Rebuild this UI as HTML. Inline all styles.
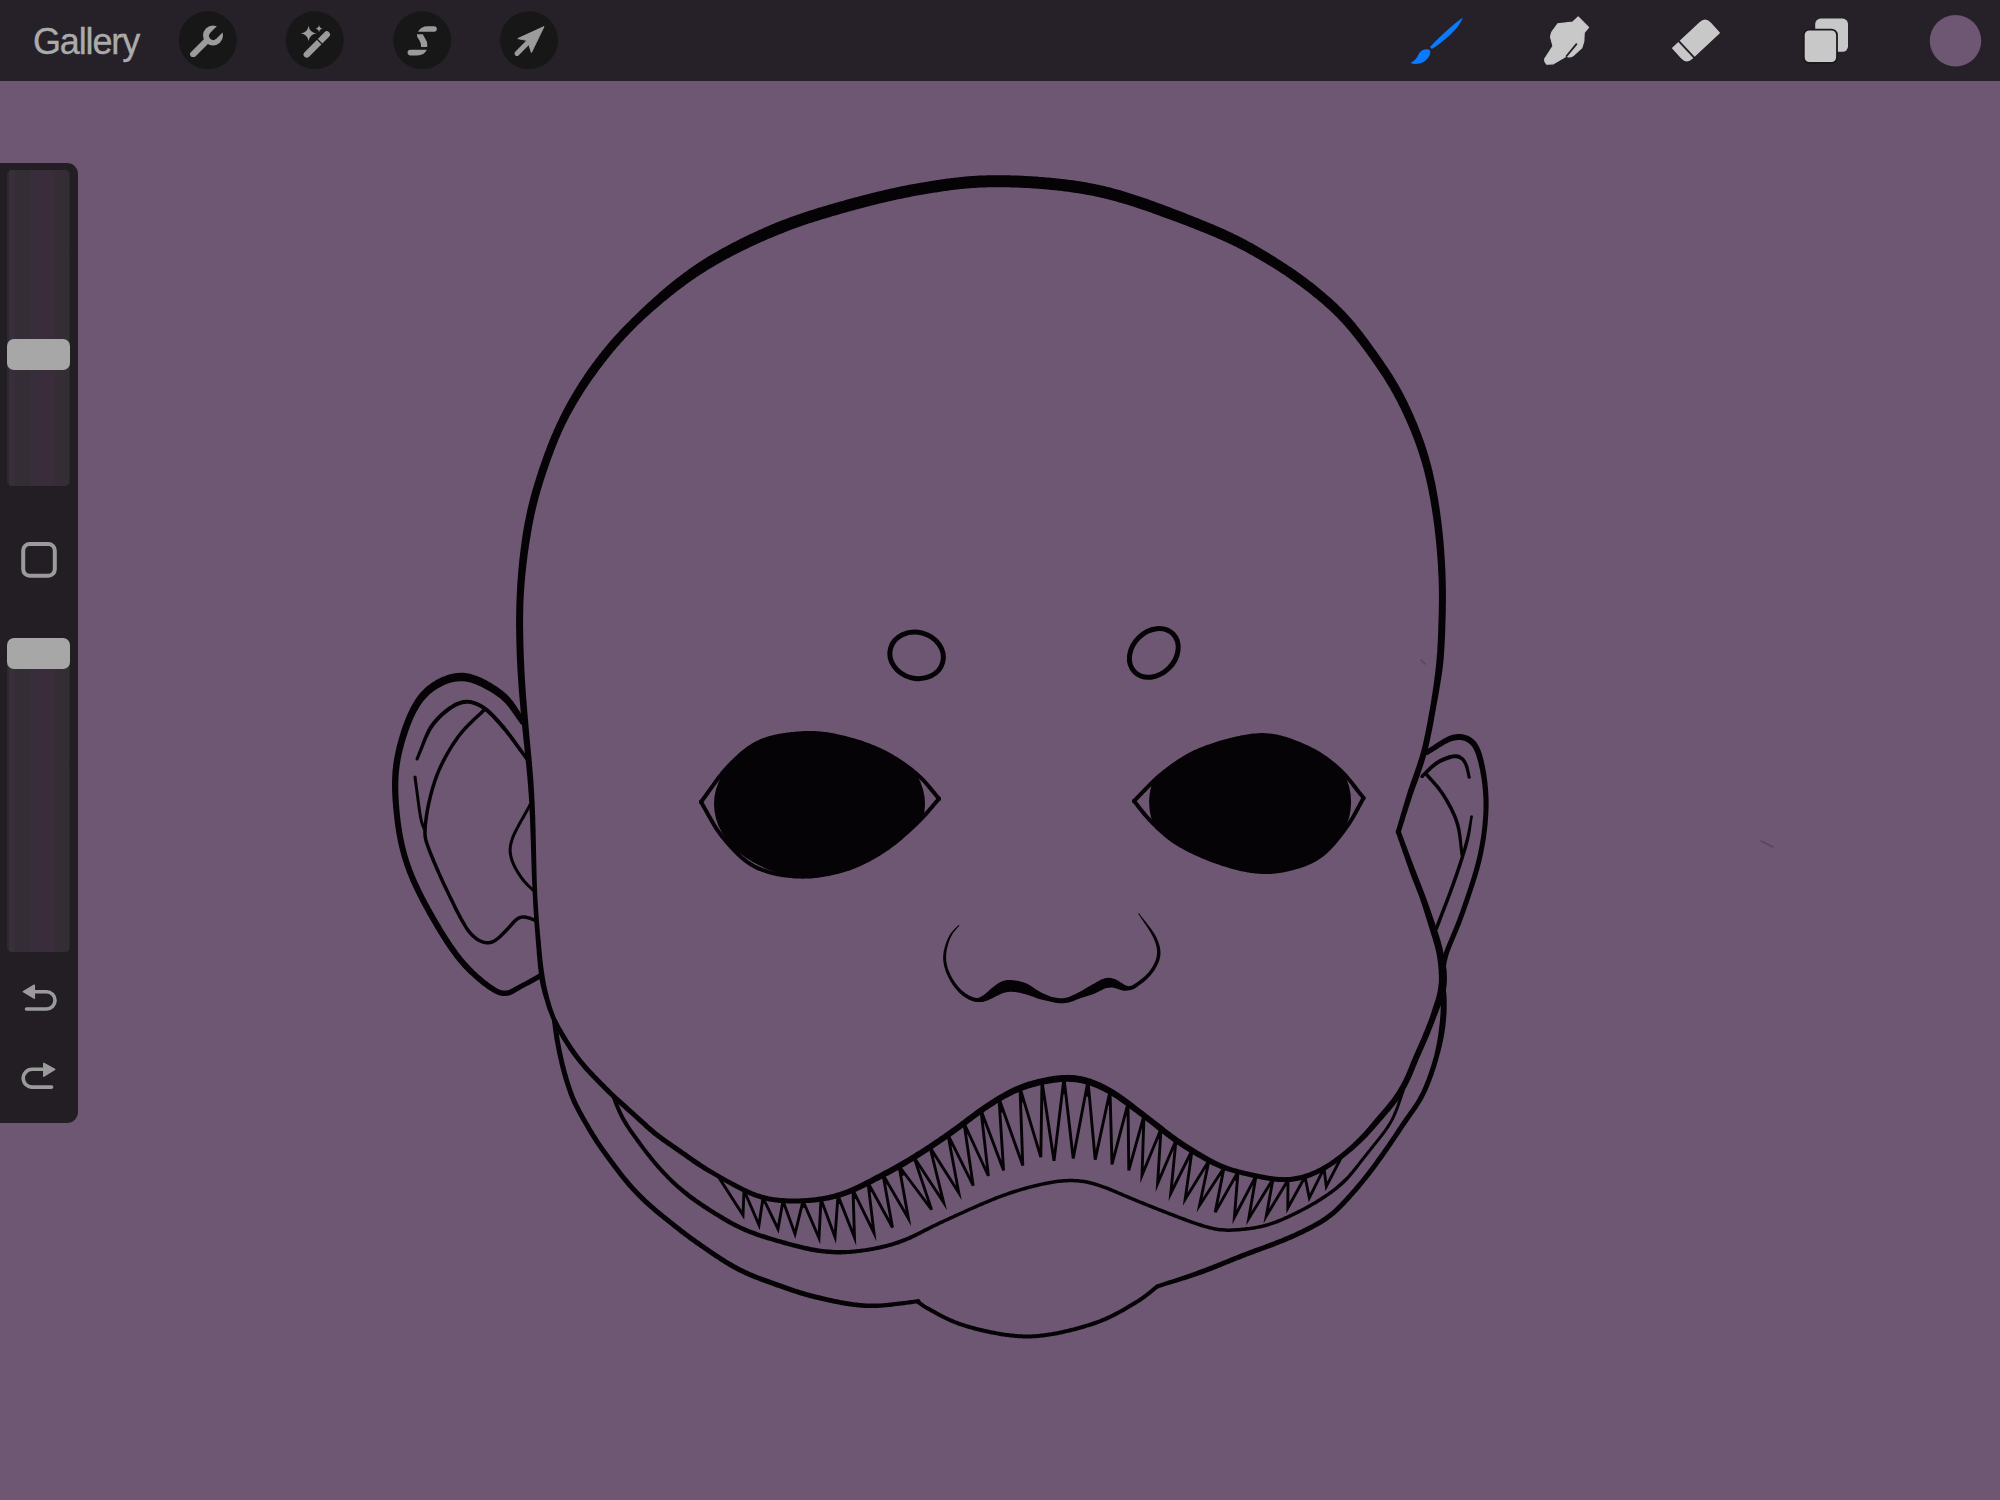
<!DOCTYPE html>
<html><head><meta charset="utf-8">
<style>
html,body{margin:0;padding:0;width:2000px;height:1500px;overflow:hidden;background:#6e5772;}
#top{position:absolute;left:0;top:0;width:2000px;height:81px;background:#262128;}
#gal{position:absolute;left:33px;top:21.7px;font-family:"Liberation Sans",sans-serif;font-size:36px;color:#ababab;line-height:40px;letter-spacing:-1.15px;-webkit-text-stroke:0.35px #ababab;}
#side{position:absolute;left:0;top:163px;width:78px;height:960px;background:#221e24;border-radius:0 11px 11px 0;}
.trk{position:absolute;left:7px;width:63px;background:linear-gradient(90deg,#2b2a2c 0px,#2b2a2c 1.5px,#392e3c 2.5px,#392e3c 7px,#352d35 8px,#352d35 22px,#372d3b 23px,#372d3b 36px,#3a2c3b 37px,#3a2c3b 47px,#352d35 48px,#342e34 61.5px,#262426 63px);border-radius:5px;}
.thm{position:absolute;left:7px;width:63px;height:31px;background:#a7a7a7;border-radius:7px;}
svg{position:absolute;left:0;top:0;overflow:visible;}
</style></head><body>
<svg width="2000" height="1500" viewBox="0 0 2000 1500" style="position:absolute;left:0;top:0"><g fill="#050306"><defs><clipPath id="cle"><ellipse cx="819.5" cy="804" rx="105.5" ry="75"/></clipPath><clipPath id="cre"><ellipse cx="1250.1" cy="802" rx="101" ry="78"/></clipPath></defs><path d="M556.8 1020.5 L556.3 1019.1 L555.7 1017.6 L555.2 1016.2 L554.6 1014.7 L554.1 1013.3 L553.6 1011.9 L553.1 1010.5 L552.6 1009.1 L552.1 1007.7 L551.6 1006.2 L551.2 1004.8 L550.8 1003.4 L550.4 1001.9 L550.0 1000.4 L549.5 998.9 L549.1 997.4 L548.7 996.0 L548.4 994.6 L548.0 993.1 L547.6 991.7 L547.3 990.3 L547.0 988.9 L546.7 987.5 L546.4 986.1 L546.1 984.7 L545.8 983.2 L545.6 981.8 L545.3 980.3 L545.1 978.9 L544.8 977.3 L544.6 975.8 L544.3 974.3 L544.1 972.8 L543.9 971.3 L543.7 969.9 L543.5 968.4 L543.3 967.0 L543.1 965.5 L543.0 964.1 L542.8 962.6 L542.6 961.2 L542.5 959.8 L542.3 958.4 L542.2 957.0 L542.0 955.6 L541.9 954.2 L541.8 952.7 L541.6 951.3 L541.5 949.9 L541.4 948.4 L541.2 947.0 L541.1 945.5 L541.0 944.0 L540.8 942.5 L540.7 941.1 L540.6 939.6 L540.4 938.2 L540.3 936.7 L540.2 935.3 L540.0 933.9 L539.9 932.4 L539.8 930.9 L539.7 929.4 L539.5 927.9 L539.4 926.3 L539.3 924.8 L539.1 923.1 L539.0 921.5 L538.9 919.9 L538.8 918.2 L538.6 916.6 L538.5 915.0 L538.4 913.3 L538.3 911.7 L538.2 910.1 L538.1 908.5 L538.0 906.8 L537.9 905.2 L537.8 903.6 L537.7 902.0 L537.6 900.4 L537.5 898.8 L537.4 897.2 L537.3 895.6 L537.2 894.0 L537.2 892.5 L537.1 890.9 L537.1 889.3 L537.0 887.8 L536.9 886.2 L536.9 884.7 L536.8 883.1 L536.8 881.6 L536.7 880.1 L536.7 878.6 L536.7 877.2 L536.6 875.7 L536.6 874.2 L536.5 872.7 L536.5 871.2 L536.5 869.7 L536.4 868.2 L536.4 866.6 L536.4 865.1 L536.3 863.5 L536.3 861.9 L536.3 860.4 L536.2 858.8 L536.2 857.2 L536.2 855.6 L536.1 854.0 L536.1 852.4 L536.0 850.8 L536.0 849.2 L536.0 847.5 L535.9 845.9 L535.9 844.3 L535.9 842.7 L535.8 841.0 L535.8 839.4 L535.8 837.8 L535.7 836.2 L535.7 834.6 L535.6 833.0 L535.6 831.4 L535.6 829.8 L535.5 828.2 L535.5 826.6 L535.4 825.0 L535.4 823.4 L535.3 821.9 L535.3 820.3 L535.3 818.8 L535.2 817.2 L535.2 815.7 L535.1 814.2 L535.0 812.6 L535.0 811.1 L534.9 809.5 L534.9 808.0 L534.8 806.4 L534.7 804.8 L534.7 803.3 L534.6 801.7 L534.5 800.2 L534.4 798.6 L534.3 797.0 L534.3 795.5 L534.2 793.9 L534.1 792.4 L534.0 790.8 L533.9 789.2 L533.8 787.7 L533.7 786.1 L533.6 784.5 L533.5 783.0 L533.4 781.4 L533.3 779.8 L533.2 778.2 L533.0 776.7 L532.9 775.1 L532.8 773.5 L532.7 771.9 L532.5 770.3 L532.4 768.8 L532.3 767.2 L532.1 765.7 L532.0 764.1 L531.9 762.6 L531.7 761.1 L531.6 759.6 L531.5 758.1 L531.3 756.6 L531.2 755.1 L531.1 753.7 L530.9 752.2 L530.8 750.7 L530.7 749.3 L530.5 747.9 L530.4 746.4 L530.3 745.0 L530.1 743.6 L530.0 742.2 L529.9 740.7 L529.7 739.3 L529.6 737.9 L529.5 736.4 L529.3 735.0 L529.2 733.6 L529.1 732.1 L529.0 730.7 L528.8 729.2 L528.7 727.8 L528.6 726.3 L528.4 724.9 L528.3 723.4 L528.2 721.9 L528.1 720.5 L527.9 719.0 L527.8 717.5 L527.7 716.1 L527.6 714.6 L527.4 713.1 L527.3 711.6 L527.2 710.2 L527.1 708.7 L527.0 707.2 L526.8 705.7 L526.7 704.2 L526.6 702.7 L526.5 701.2 L526.4 699.7 L526.2 698.3 L526.1 696.8 L526.0 695.3 L525.9 693.8 L525.8 692.4 L525.7 690.9 L525.6 689.4 L525.5 688.0 L525.4 686.5 L525.3 685.0 L525.2 683.6 L525.1 682.1 L525.0 680.6 L524.9 679.2 L524.8 677.7 L524.7 676.3 L524.7 674.8 L524.6 673.3 L524.5 671.9 L524.4 670.4 L524.4 668.9 L524.3 667.4 L524.2 666.0 L524.2 664.5 L524.1 663.0 L524.0 661.5 L524.0 660.0 L523.9 658.5 L523.8 657.0 L523.8 655.5 L523.7 654.0 L523.7 652.5 L523.6 651.0 L523.6 649.5 L523.5 648.0 L523.5 646.5 L523.4 645.0 L523.4 643.5 L523.4 642.0 L523.3 640.5 L523.3 639.0 L523.3 637.5 L523.2 636.0 L523.2 634.5 L523.2 632.9 L523.2 631.4 L523.2 629.9 L523.1 628.4 L523.1 626.9 L523.1 625.4 L523.1 623.8 L523.1 622.3 L523.1 620.8 L523.1 619.3 L523.1 617.8 L523.1 616.3 L523.2 614.8 L523.2 613.3 L523.2 611.7 L523.2 610.2 L523.3 608.7 L523.3 607.2 L523.3 605.7 L523.4 604.2 L523.4 602.7 L523.5 601.1 L523.6 599.6 L523.6 598.1 L523.7 596.6 L523.8 595.1 L523.9 593.5 L524.0 592.0 L524.1 590.5 L524.2 589.0 L524.3 587.5 L524.4 585.9 L524.5 584.4 L524.6 582.9 L524.8 581.4 L524.9 579.8 L525.0 578.3 L525.2 576.8 L525.3 575.3 L525.5 573.7 L525.6 572.2 L525.8 570.7 L525.9 569.2 L526.1 567.7 L526.3 566.2 L526.4 564.6 L526.6 563.1 L526.8 561.7 L527.0 560.2 L527.2 558.7 L527.4 557.2 L527.5 555.7 L527.7 554.3 L527.9 552.8 L528.1 551.3 L528.4 549.8 L528.6 548.4 L528.8 546.9 L529.0 545.4 L529.2 544.0 L529.5 542.5 L529.7 541.0 L529.9 539.6 L530.2 538.1 L530.4 536.7 L530.7 535.2 L530.9 533.8 L531.1 532.3 L531.4 530.9 L531.6 529.5 L531.9 528.0 L532.1 526.6 L532.4 525.2 L532.7 523.8 L532.9 522.3 L533.2 520.9 L533.5 519.5 L533.8 518.1 L534.1 516.7 L534.4 515.2 L534.7 513.8 L535.0 512.4 L535.3 510.9 L535.7 509.5 L536.0 508.1 L536.4 506.6 L536.7 505.2 L537.1 503.8 L537.4 502.4 L537.8 501.0 L538.2 499.5 L538.5 498.1 L538.9 496.7 L539.3 495.3 L539.7 493.9 L540.1 492.5 L540.5 491.1 L540.9 489.7 L541.4 488.2 L541.8 486.8 L542.2 485.4 L542.6 484.0 L543.1 482.6 L543.5 481.1 L544.0 479.7 L544.4 478.3 L544.9 476.8 L545.4 475.4 L545.8 474.0 L546.3 472.5 L546.8 471.1 L547.3 469.7 L547.8 468.3 L548.2 466.8 L548.7 465.4 L549.2 464.0 L549.7 462.6 L550.2 461.2 L550.8 459.7 L551.3 458.3 L551.8 456.8 L552.3 455.4 L552.9 454.0 L553.4 452.5 L553.9 451.1 L554.5 449.6 L555.1 448.2 L555.6 446.8 L556.2 445.3 L556.8 443.9 L557.3 442.5 L557.9 441.1 L558.5 439.6 L559.1 438.2 L559.7 436.8 L560.3 435.4 L560.9 434.0 L561.5 432.6 L562.2 431.2 L562.8 429.8 L563.4 428.4 L564.1 427.0 L564.7 425.7 L565.4 424.3 L566.1 422.9 L566.8 421.6 L567.4 420.2 L568.1 418.9 L568.8 417.5 L569.5 416.2 L570.2 414.8 L571.0 413.5 L571.7 412.2 L572.4 410.9 L573.2 409.5 L573.9 408.2 L574.7 406.9 L575.4 405.6 L576.2 404.3 L576.9 403.0 L577.7 401.7 L578.5 400.4 L579.3 399.1 L580.1 397.8 L580.9 396.5 L581.7 395.2 L582.5 393.9 L583.3 392.6 L584.1 391.4 L584.9 390.1 L585.8 388.8 L586.6 387.6 L587.4 386.3 L588.3 385.1 L589.1 383.8 L590.0 382.6 L590.8 381.3 L591.7 380.1 L592.6 378.8 L593.4 377.6 L594.3 376.4 L595.2 375.2 L596.1 374.0 L596.9 372.8 L597.8 371.5 L598.7 370.3 L599.6 369.1 L600.5 367.9 L601.4 366.8 L602.3 365.6 L603.2 364.4 L604.1 363.2 L605.0 362.0 L605.9 360.9 L606.8 359.7 L607.7 358.5 L608.6 357.4 L609.6 356.2 L610.5 355.1 L611.4 353.9 L612.4 352.8 L613.3 351.6 L614.3 350.5 L615.2 349.4 L616.2 348.3 L617.1 347.1 L618.1 346.0 L619.1 344.9 L620.1 343.7 L621.1 342.6 L622.1 341.5 L623.1 340.4 L624.2 339.3 L625.2 338.1 L626.3 337.0 L627.3 335.9 L628.4 334.8 L629.4 333.7 L630.5 332.6 L631.5 331.5 L632.6 330.4 L633.7 329.3 L634.7 328.3 L635.8 327.2 L636.9 326.1 L638.0 325.1 L639.0 324.0 L640.1 322.9 L641.2 321.9 L642.3 320.9 L643.4 319.8 L644.5 318.8 L645.7 317.8 L646.8 316.8 L647.9 315.8 L649.0 314.8 L650.1 313.8 L651.2 312.8 L652.3 311.8 L653.5 310.8 L654.6 309.8 L655.7 308.9 L656.8 307.9 L657.9 306.9 L659.1 306.0 L660.2 305.0 L661.3 304.0 L662.5 303.1 L663.6 302.1 L664.8 301.1 L666.0 300.2 L667.2 299.2 L668.3 298.2 L669.5 297.3 L670.7 296.3 L671.9 295.3 L673.1 294.4 L674.3 293.4 L675.5 292.5 L676.7 291.5 L678.0 290.6 L679.2 289.7 L680.4 288.7 L681.6 287.8 L682.9 286.9 L684.1 285.9 L685.4 285.0 L686.6 284.1 L687.9 283.2 L689.1 282.3 L690.4 281.4 L691.6 280.6 L692.9 279.7 L694.1 278.8 L695.4 278.0 L696.6 277.1 L697.9 276.3 L699.1 275.4 L700.4 274.6 L701.7 273.8 L702.9 273.0 L704.2 272.2 L705.5 271.4 L706.7 270.6 L708.0 269.8 L709.3 269.0 L710.5 268.2 L711.8 267.4 L713.1 266.7 L714.4 265.9 L715.7 265.1 L717.0 264.4 L718.2 263.7 L719.5 262.9 L720.8 262.2 L722.1 261.5 L723.4 260.7 L724.7 260.0 L726.1 259.3 L727.4 258.6 L728.7 257.9 L730.0 257.2 L731.3 256.5 L732.7 255.8 L734.0 255.1 L735.4 254.4 L736.7 253.7 L738.0 253.0 L739.4 252.4 L740.7 251.7 L742.1 251.0 L743.4 250.4 L744.8 249.7 L746.2 249.1 L747.5 248.4 L748.9 247.8 L750.2 247.1 L751.6 246.5 L752.9 245.8 L754.3 245.2 L755.7 244.6 L757.0 244.0 L758.4 243.3 L759.7 242.7 L761.1 242.1 L762.5 241.5 L763.8 240.9 L765.2 240.3 L766.6 239.7 L767.9 239.1 L769.3 238.5 L770.7 238.0 L772.1 237.4 L773.4 236.8 L774.8 236.2 L776.2 235.7 L777.6 235.1 L779.0 234.5 L780.4 234.0 L781.8 233.4 L783.2 232.9 L784.5 232.3 L785.9 231.8 L787.3 231.2 L788.7 230.7 L790.2 230.1 L791.6 229.6 L793.0 229.1 L794.4 228.6 L795.8 228.1 L797.2 227.5 L798.6 227.0 L800.1 226.5 L801.5 226.0 L802.9 225.5 L804.3 225.1 L805.8 224.6 L807.2 224.1 L808.6 223.6 L810.0 223.1 L811.5 222.7 L812.9 222.2 L814.3 221.8 L815.8 221.3 L817.2 220.9 L818.6 220.4 L820.0 220.0 L821.5 219.5 L822.9 219.1 L824.3 218.7 L825.8 218.2 L827.2 217.8 L828.6 217.4 L830.1 216.9 L831.5 216.5 L832.9 216.1 L834.4 215.7 L835.8 215.3 L837.2 214.9 L838.7 214.4 L840.1 214.0 L841.6 213.6 L843.0 213.2 L844.5 212.8 L845.9 212.4 L847.3 212.0 L848.8 211.6 L850.2 211.2 L851.7 210.8 L853.1 210.4 L854.6 210.0 L856.0 209.6 L857.5 209.2 L858.9 208.8 L860.4 208.5 L861.9 208.1 L863.3 207.7 L864.8 207.3 L866.2 206.9 L867.7 206.5 L869.1 206.2 L870.6 205.8 L872.1 205.4 L873.5 205.1 L875.0 204.7 L876.4 204.3 L877.9 204.0 L879.4 203.6 L880.8 203.3 L882.3 202.9 L883.7 202.6 L885.2 202.2 L886.7 201.9 L888.1 201.5 L889.6 201.2 L891.0 200.9 L892.5 200.5 L893.9 200.2 L895.4 199.9 L896.9 199.6 L898.3 199.3 L899.8 199.0 L901.2 198.7 L902.7 198.4 L904.1 198.1 L905.6 197.8 L907.0 197.5 L908.5 197.2 L910.0 196.9 L911.4 196.6 L912.9 196.3 L914.3 196.1 L915.8 195.8 L917.3 195.5 L918.7 195.3 L920.2 195.0 L921.6 194.8 L923.1 194.5 L924.5 194.3 L926.0 194.0 L927.4 193.8 L928.9 193.5 L930.3 193.3 L931.7 193.1 L933.2 192.8 L934.6 192.6 L936.1 192.4 L937.5 192.2 L938.9 191.9 L940.4 191.7 L941.8 191.5 L943.2 191.3 L944.6 191.1 L946.1 190.9 L947.5 190.7 L948.9 190.5 L950.3 190.3 L951.8 190.1 L953.2 190.0 L954.6 189.8 L956.0 189.6 L957.4 189.4 L958.9 189.3 L960.3 189.1 L961.7 189.0 L963.2 188.8 L964.6 188.7 L966.1 188.5 L967.5 188.4 L969.0 188.3 L970.4 188.2 L971.9 188.1 L973.4 188.0 L974.9 187.9 L976.4 187.8 L977.9 187.7 L979.4 187.6 L980.9 187.5 L982.4 187.5 L984.0 187.4 L985.5 187.4 L987.0 187.3 L988.5 187.3 L990.0 187.3 L991.5 187.2 L993.0 187.2 L994.5 187.2 L996.0 187.2 L997.5 187.2 L998.9 187.2 L1000.4 187.2 L1001.9 187.2 L1003.4 187.2 L1004.9 187.2 L1006.4 187.3 L1007.9 187.3 L1009.3 187.3 L1010.8 187.4 L1012.3 187.4 L1013.8 187.5 L1015.2 187.5 L1016.7 187.6 L1018.1 187.6 L1019.6 187.7 L1021.0 187.8 L1022.5 187.8 L1023.9 187.9 L1025.4 188.0 L1026.9 188.0 L1028.3 188.1 L1029.8 188.2 L1031.3 188.3 L1032.8 188.4 L1034.3 188.5 L1035.8 188.6 L1037.3 188.7 L1038.8 188.8 L1040.4 188.9 L1041.9 189.1 L1043.4 189.2 L1044.9 189.3 L1046.5 189.4 L1048.0 189.6 L1049.5 189.7 L1051.1 189.9 L1052.6 190.0 L1054.2 190.2 L1055.7 190.3 L1057.3 190.5 L1058.8 190.7 L1060.3 190.8 L1061.9 191.0 L1063.4 191.2 L1065.0 191.4 L1066.5 191.6 L1068.1 191.8 L1069.6 192.0 L1071.2 192.2 L1072.7 192.4 L1074.3 192.7 L1075.8 192.9 L1077.3 193.1 L1078.9 193.4 L1080.4 193.6 L1081.9 193.9 L1083.5 194.1 L1085.0 194.4 L1086.5 194.7 L1088.0 195.0 L1089.5 195.2 L1091.0 195.5 L1092.5 195.8 L1094.0 196.1 L1095.5 196.5 L1097.0 196.8 L1098.5 197.1 L1099.9 197.4 L1101.4 197.8 L1102.9 198.1 L1104.4 198.5 L1105.9 198.8 L1107.4 199.2 L1108.9 199.6 L1110.3 199.9 L1111.8 200.3 L1113.3 200.7 L1114.8 201.1 L1116.3 201.5 L1117.8 201.9 L1119.3 202.4 L1120.8 202.8 L1122.3 203.2 L1123.8 203.7 L1125.3 204.1 L1126.8 204.6 L1128.3 205.1 L1129.8 205.6 L1131.3 206.0 L1132.9 206.5 L1134.4 207.0 L1135.9 207.5 L1137.4 208.0 L1138.9 208.5 L1140.5 209.0 L1142.0 209.5 L1143.5 210.0 L1145.0 210.6 L1146.5 211.1 L1148.0 211.6 L1149.5 212.1 L1151.0 212.6 L1152.5 213.2 L1154.0 213.7 L1155.5 214.2 L1156.9 214.8 L1158.4 215.3 L1159.9 215.8 L1161.3 216.4 L1162.8 216.9 L1164.2 217.4 L1165.7 217.9 L1167.1 218.5 L1168.5 219.0 L1169.9 219.5 L1171.3 220.0 L1172.7 220.5 L1174.0 221.1 L1175.4 221.6 L1176.7 222.1 L1178.1 222.6 L1179.4 223.1 L1180.7 223.6 L1182.0 224.1 L1183.4 224.6 L1184.7 225.1 L1186.1 225.6 L1187.5 226.1 L1188.9 226.7 L1190.3 227.2 L1191.7 227.8 L1193.1 228.3 L1194.6 228.9 L1196.0 229.4 L1197.4 230.0 L1198.9 230.6 L1200.3 231.2 L1201.8 231.7 L1203.2 232.3 L1204.7 232.9 L1206.1 233.5 L1207.6 234.1 L1209.0 234.7 L1210.5 235.3 L1212.0 235.9 L1213.4 236.5 L1214.9 237.1 L1216.3 237.8 L1217.8 238.4 L1219.2 239.0 L1220.7 239.7 L1222.1 240.3 L1223.5 241.0 L1224.9 241.6 L1226.3 242.2 L1227.6 242.8 L1228.9 243.4 L1230.2 244.0 L1231.4 244.6 L1232.7 245.2 L1233.9 245.8 L1235.2 246.5 L1236.5 247.1 L1237.7 247.7 L1239.0 248.4 L1240.2 249.0 L1241.5 249.7 L1242.8 250.3 L1244.0 251.0 L1245.3 251.6 L1246.5 252.3 L1247.8 253.0 L1249.0 253.7 L1250.3 254.4 L1251.5 255.1 L1252.8 255.8 L1254.0 256.5 L1255.3 257.2 L1256.5 257.9 L1257.8 258.6 L1259.1 259.4 L1260.4 260.1 L1261.6 260.9 L1262.9 261.6 L1264.2 262.4 L1265.5 263.1 L1266.8 263.9 L1268.1 264.7 L1269.4 265.4 L1270.6 266.2 L1271.9 266.9 L1273.1 267.7 L1274.3 268.4 L1275.5 269.2 L1276.7 270.0 L1277.9 270.8 L1279.1 271.6 L1280.4 272.4 L1281.6 273.2 L1282.8 274.0 L1284.0 274.8 L1285.2 275.6 L1286.4 276.4 L1287.6 277.2 L1288.8 278.0 L1290.0 278.9 L1291.2 279.7 L1292.4 280.5 L1293.6 281.4 L1294.8 282.2 L1295.9 283.0 L1297.1 283.9 L1298.3 284.7 L1299.5 285.6 L1300.7 286.5 L1301.9 287.4 L1303.1 288.3 L1304.3 289.2 L1305.6 290.2 L1306.8 291.1 L1308.0 292.1 L1309.2 293.0 L1310.5 294.0 L1311.7 294.9 L1312.9 295.9 L1314.0 296.9 L1315.2 297.8 L1316.4 298.8 L1317.6 299.8 L1318.8 300.8 L1320.0 301.8 L1321.2 302.8 L1322.4 303.8 L1323.6 304.8 L1324.7 305.9 L1325.9 306.9 L1327.1 307.9 L1328.2 309.0 L1329.4 310.0 L1330.5 311.1 L1331.7 312.2 L1332.8 313.2 L1333.9 314.3 L1335.0 315.4 L1336.1 316.5 L1337.2 317.6 L1338.2 318.7 L1339.3 319.7 L1340.3 320.9 L1341.4 322.0 L1342.4 323.1 L1343.4 324.2 L1344.4 325.3 L1345.4 326.4 L1346.4 327.5 L1347.3 328.7 L1348.3 329.8 L1349.3 331.0 L1350.2 332.1 L1351.2 333.3 L1352.1 334.4 L1353.0 335.6 L1354.0 336.7 L1354.9 337.9 L1355.8 339.1 L1356.7 340.2 L1357.6 341.4 L1358.6 342.6 L1359.5 343.8 L1360.4 345.0 L1361.3 346.2 L1362.2 347.4 L1363.1 348.6 L1364.0 349.8 L1364.9 351.0 L1365.8 352.2 L1366.7 353.5 L1367.6 354.7 L1368.5 355.9 L1369.3 357.1 L1370.2 358.3 L1371.1 359.6 L1371.9 360.8 L1372.8 362.0 L1373.7 363.3 L1374.5 364.5 L1375.4 365.7 L1376.2 367.0 L1377.1 368.2 L1377.9 369.5 L1378.8 370.7 L1379.6 372.0 L1380.5 373.2 L1381.3 374.5 L1382.1 375.8 L1383.0 377.1 L1383.8 378.3 L1384.6 379.6 L1385.4 380.9 L1386.2 382.2 L1386.9 383.4 L1387.7 384.7 L1388.5 386.0 L1389.3 387.3 L1390.0 388.6 L1390.8 389.9 L1391.5 391.2 L1392.2 392.5 L1393.0 393.8 L1393.7 395.1 L1394.4 396.5 L1395.1 397.8 L1395.9 399.1 L1396.6 400.5 L1397.3 401.8 L1398.0 403.2 L1398.6 404.5 L1399.3 405.9 L1400.0 407.2 L1400.7 408.6 L1401.3 410.0 L1402.0 411.3 L1402.6 412.7 L1403.3 414.1 L1403.9 415.4 L1404.5 416.8 L1405.2 418.2 L1405.8 419.6 L1406.4 420.9 L1407.0 422.3 L1407.6 423.7 L1408.2 425.1 L1408.8 426.5 L1409.4 427.9 L1410.0 429.3 L1410.5 430.6 L1411.1 432.0 L1411.7 433.4 L1412.2 434.8 L1412.8 436.2 L1413.3 437.6 L1413.8 439.0 L1414.4 440.4 L1414.9 441.8 L1415.4 443.2 L1415.9 444.6 L1416.4 445.9 L1416.9 447.3 L1417.4 448.7 L1417.8 450.1 L1418.3 451.5 L1418.8 452.9 L1419.2 454.2 L1419.6 455.6 L1420.1 457.0 L1420.5 458.4 L1420.9 459.8 L1421.4 461.3 L1421.8 462.7 L1422.2 464.1 L1422.6 465.5 L1423.0 466.9 L1423.4 468.3 L1423.7 469.8 L1424.1 471.2 L1424.5 472.6 L1424.8 474.0 L1425.2 475.4 L1425.5 476.8 L1425.9 478.3 L1426.2 479.7 L1426.5 481.1 L1426.8 482.6 L1427.1 484.0 L1427.5 485.4 L1427.8 486.9 L1428.1 488.4 L1428.4 489.8 L1428.7 491.3 L1428.9 492.7 L1429.2 494.2 L1429.5 495.7 L1429.8 497.2 L1430.1 498.6 L1430.3 500.1 L1430.6 501.6 L1430.8 503.1 L1431.1 504.6 L1431.3 506.0 L1431.6 507.5 L1431.8 509.0 L1432.0 510.5 L1432.3 512.0 L1432.5 513.5 L1432.7 515.0 L1433.0 516.6 L1433.2 518.1 L1433.4 519.6 L1433.6 521.1 L1433.8 522.6 L1434.0 524.1 L1434.2 525.6 L1434.4 527.1 L1434.6 528.7 L1434.7 530.2 L1434.9 531.7 L1435.1 533.2 L1435.3 534.7 L1435.4 536.2 L1435.6 537.8 L1435.8 539.3 L1435.9 540.8 L1436.1 542.3 L1436.2 543.8 L1436.4 545.3 L1436.5 546.8 L1436.6 548.3 L1436.8 549.9 L1436.9 551.4 L1437.0 552.9 L1437.1 554.4 L1437.2 555.9 L1437.4 557.4 L1437.5 558.9 L1437.6 560.4 L1437.7 561.9 L1437.8 563.4 L1437.9 564.9 L1438.0 566.4 L1438.0 567.9 L1438.1 569.4 L1438.2 570.9 L1438.3 572.4 L1438.4 573.9 L1438.4 575.4 L1438.5 576.9 L1438.6 578.4 L1438.6 580.0 L1438.7 581.5 L1438.7 583.0 L1438.8 584.5 L1438.8 586.1 L1438.8 587.6 L1438.9 589.1 L1438.9 590.7 L1438.9 592.2 L1438.9 593.7 L1438.9 595.3 L1438.9 596.8 L1438.9 598.3 L1438.9 599.9 L1438.9 601.4 L1438.9 603.0 L1438.9 604.5 L1438.8 606.0 L1438.8 607.5 L1438.8 609.1 L1438.8 610.6 L1438.7 612.1 L1438.7 613.6 L1438.7 615.1 L1438.6 616.6 L1438.6 618.1 L1438.5 619.6 L1438.5 621.1 L1438.4 622.6 L1438.4 624.1 L1438.3 625.6 L1438.3 627.1 L1438.3 628.6 L1438.2 630.1 L1438.2 631.5 L1438.1 633.0 L1438.1 634.4 L1438.0 635.9 L1437.9 637.3 L1437.9 638.7 L1437.8 640.2 L1437.8 641.7 L1437.7 643.1 L1437.6 644.6 L1437.5 646.0 L1437.4 647.5 L1437.3 648.9 L1437.3 650.4 L1437.2 651.8 L1437.1 653.3 L1436.9 654.7 L1436.8 656.2 L1436.7 657.7 L1436.6 659.1 L1436.5 660.6 L1436.3 662.0 L1436.2 663.4 L1436.1 664.9 L1435.9 666.3 L1435.8 667.7 L1435.6 669.2 L1435.4 670.7 L1435.3 672.1 L1435.1 673.6 L1434.9 675.1 L1434.7 676.6 L1434.5 678.1 L1434.3 679.7 L1434.1 681.2 L1433.9 682.7 L1433.7 684.2 L1433.5 685.7 L1433.2 687.2 L1433.0 688.7 L1432.8 690.3 L1432.6 691.8 L1432.3 693.4 L1432.1 694.9 L1431.8 696.5 L1431.6 698.0 L1431.4 699.6 L1431.1 701.2 L1430.9 702.7 L1430.6 704.3 L1430.3 705.9 L1430.1 707.5 L1429.8 709.1 L1429.5 710.7 L1429.2 712.3 L1428.9 713.8 L1428.6 715.4 L1428.3 717.0 L1428.1 718.6 L1427.8 720.2 L1427.5 721.8 L1427.2 723.4 L1426.9 724.9 L1426.6 726.5 L1426.3 728.1 L1426.0 729.6 L1425.7 731.1 L1425.4 732.7 L1425.1 734.2 L1424.7 735.7 L1424.4 737.2 L1424.1 738.8 L1423.8 740.3 L1423.4 741.8 L1423.1 743.4 L1422.7 744.9 L1422.4 746.4 L1422.0 747.8 L1421.6 749.3 L1421.3 750.8 L1420.9 752.2 L1420.5 753.6 L1420.1 755.0 L1419.7 756.4 L1419.2 757.8 L1418.8 759.2 L1418.3 760.6 L1417.9 762.0 L1417.4 763.5 L1417.0 764.9 L1416.5 766.3 L1416.0 767.7 L1415.5 769.0 L1415.1 770.4 L1414.6 771.8 L1414.1 773.2 L1413.6 774.6 L1413.1 776.0 L1412.6 777.4 L1412.1 778.8 L1411.6 780.2 L1411.1 781.6 L1410.6 783.0 L1410.1 784.4 L1409.7 785.8 L1409.2 787.2 L1408.7 788.6 L1408.2 790.1 L1407.7 791.5 L1407.3 793.0 L1406.8 794.5 L1406.3 796.0 L1405.9 797.5 L1405.4 799.0 L1405.0 800.5 L1404.5 802.0 L1404.1 803.5 L1403.6 804.9 L1403.2 806.4 L1402.7 807.9 L1402.3 809.4 L1401.8 810.9 L1401.4 812.4 L1400.9 814.0 L1400.5 815.5 L1400.0 817.1 L1399.6 818.7 L1399.1 820.2 L1398.6 821.8 L1398.2 823.3 L1397.7 824.9 L1397.3 826.4 L1396.8 828.0 L1396.4 829.5 L1395.9 831.0 L1400.7 832.4 L1401.2 831.0 L1401.6 829.5 L1402.1 827.9 L1402.6 826.4 L1403.1 824.9 L1403.6 823.3 L1404.1 821.7 L1404.6 820.2 L1405.1 818.6 L1405.5 817.1 L1406.0 815.5 L1406.5 814.0 L1407.0 812.5 L1407.5 811.0 L1407.9 809.5 L1408.4 808.0 L1408.9 806.6 L1409.4 805.1 L1409.8 803.6 L1410.3 802.2 L1410.8 800.7 L1411.3 799.2 L1411.8 797.7 L1412.2 796.3 L1412.7 794.8 L1413.2 793.4 L1413.7 792.0 L1414.2 790.5 L1414.7 789.1 L1415.2 787.7 L1415.7 786.4 L1416.2 785.0 L1416.8 783.6 L1417.3 782.2 L1417.8 780.8 L1418.3 779.4 L1418.8 778.0 L1419.3 776.6 L1419.8 775.2 L1420.2 773.8 L1420.7 772.4 L1421.2 771.0 L1421.7 769.6 L1422.2 768.2 L1422.7 766.8 L1423.1 765.3 L1423.6 763.9 L1424.1 762.4 L1424.5 761.0 L1425.0 759.6 L1425.4 758.1 L1425.8 756.7 L1426.2 755.2 L1426.7 753.8 L1427.1 752.3 L1427.4 750.8 L1427.8 749.3 L1428.2 747.8 L1428.6 746.3 L1428.9 744.7 L1429.3 743.2 L1429.6 741.6 L1430.0 740.0 L1430.3 738.5 L1430.6 736.9 L1430.9 735.4 L1431.2 733.9 L1431.5 732.3 L1431.9 730.8 L1432.2 729.2 L1432.5 727.6 L1432.8 726.1 L1433.1 724.5 L1433.4 722.9 L1433.7 721.3 L1434.0 719.7 L1434.2 718.1 L1434.5 716.5 L1434.8 714.9 L1435.1 713.3 L1435.4 711.7 L1435.7 710.1 L1436.0 708.5 L1436.2 706.9 L1436.5 705.4 L1436.8 703.8 L1437.1 702.2 L1437.4 700.6 L1437.7 699.0 L1438.0 697.5 L1438.2 695.9 L1438.5 694.4 L1438.8 692.8 L1439.1 691.3 L1439.3 689.7 L1439.6 688.2 L1439.8 686.7 L1440.1 685.2 L1440.3 683.7 L1440.6 682.1 L1440.8 680.6 L1441.1 679.1 L1441.3 677.6 L1441.5 676.0 L1441.8 674.5 L1442.0 673.0 L1442.2 671.5 L1442.4 670.0 L1442.6 668.5 L1442.8 667.1 L1442.9 665.6 L1443.1 664.1 L1443.3 662.7 L1443.4 661.2 L1443.6 659.7 L1443.7 658.2 L1443.8 656.7 L1443.9 655.2 L1444.0 653.8 L1444.1 652.3 L1444.2 650.8 L1444.3 649.4 L1444.4 647.9 L1444.5 646.4 L1444.6 645.0 L1444.7 643.5 L1444.7 642.0 L1444.8 640.5 L1444.9 639.0 L1444.9 637.6 L1445.0 636.1 L1445.1 634.7 L1445.1 633.2 L1445.2 631.8 L1445.2 630.3 L1445.3 628.8 L1445.3 627.3 L1445.3 625.9 L1445.4 624.4 L1445.4 622.8 L1445.5 621.3 L1445.5 619.8 L1445.6 618.3 L1445.6 616.8 L1445.7 615.3 L1445.7 613.8 L1445.7 612.3 L1445.8 610.7 L1445.8 609.2 L1445.8 607.7 L1445.8 606.1 L1445.9 604.6 L1445.9 603.0 L1445.9 601.5 L1445.9 599.9 L1445.9 598.4 L1445.9 596.8 L1445.9 595.3 L1445.9 593.7 L1445.9 592.1 L1445.9 590.6 L1445.9 589.0 L1445.8 587.5 L1445.8 585.9 L1445.8 584.4 L1445.8 582.8 L1445.7 581.3 L1445.7 579.7 L1445.6 578.2 L1445.6 576.7 L1445.5 575.1 L1445.5 573.6 L1445.4 572.1 L1445.4 570.5 L1445.3 569.0 L1445.2 567.5 L1445.1 566.0 L1445.1 564.5 L1445.0 563.0 L1444.9 561.4 L1444.8 559.9 L1444.7 558.4 L1444.6 556.9 L1444.5 555.4 L1444.4 553.8 L1444.3 552.3 L1444.2 550.8 L1444.1 549.3 L1444.0 547.7 L1443.8 546.2 L1443.7 544.7 L1443.6 543.1 L1443.5 541.6 L1443.3 540.1 L1443.2 538.5 L1443.0 537.0 L1442.9 535.5 L1442.7 533.9 L1442.6 532.4 L1442.4 530.9 L1442.2 529.3 L1442.1 527.8 L1441.9 526.2 L1441.7 524.7 L1441.5 523.2 L1441.3 521.6 L1441.1 520.1 L1440.9 518.6 L1440.7 517.0 L1440.5 515.5 L1440.3 514.0 L1440.1 512.4 L1439.9 510.9 L1439.7 509.4 L1439.5 507.9 L1439.2 506.3 L1439.0 504.8 L1438.8 503.3 L1438.5 501.8 L1438.3 500.3 L1438.0 498.8 L1437.8 497.3 L1437.5 495.8 L1437.2 494.3 L1437.0 492.8 L1436.7 491.3 L1436.4 489.8 L1436.1 488.3 L1435.9 486.8 L1435.6 485.3 L1435.3 483.8 L1435.0 482.3 L1434.7 480.9 L1434.3 479.4 L1434.0 477.9 L1433.7 476.5 L1433.4 475.0 L1433.0 473.5 L1432.7 472.1 L1432.4 470.6 L1432.0 469.2 L1431.6 467.7 L1431.3 466.3 L1430.9 464.8 L1430.5 463.4 L1430.1 461.9 L1429.7 460.4 L1429.3 459.0 L1428.9 457.5 L1428.5 456.1 L1428.0 454.6 L1427.6 453.2 L1427.2 451.7 L1426.7 450.3 L1426.3 448.9 L1425.8 447.4 L1425.3 446.0 L1424.9 444.6 L1424.4 443.2 L1423.9 441.7 L1423.4 440.3 L1422.9 438.9 L1422.3 437.4 L1421.8 436.0 L1421.3 434.6 L1420.8 433.2 L1420.2 431.7 L1419.7 430.3 L1419.1 428.9 L1418.5 427.4 L1418.0 426.0 L1417.4 424.6 L1416.8 423.1 L1416.2 421.7 L1415.6 420.3 L1415.0 418.9 L1414.4 417.4 L1413.8 416.0 L1413.2 414.6 L1412.5 413.2 L1411.9 411.8 L1411.3 410.4 L1410.6 409.0 L1410.0 407.6 L1409.3 406.2 L1408.6 404.8 L1408.0 403.3 L1407.3 401.9 L1406.6 400.5 L1405.9 399.1 L1405.2 397.7 L1404.5 396.4 L1403.8 395.0 L1403.1 393.6 L1402.3 392.2 L1401.6 390.8 L1400.8 389.5 L1400.1 388.1 L1399.3 386.8 L1398.6 385.4 L1397.8 384.1 L1397.0 382.7 L1396.2 381.4 L1395.4 380.1 L1394.6 378.8 L1393.8 377.4 L1393.0 376.1 L1392.2 374.8 L1391.4 373.5 L1390.5 372.2 L1389.7 370.9 L1388.8 369.6 L1388.0 368.3 L1387.1 367.0 L1386.3 365.7 L1385.4 364.4 L1384.5 363.2 L1383.7 361.9 L1382.8 360.6 L1381.9 359.4 L1381.1 358.1 L1380.2 356.9 L1379.3 355.6 L1378.4 354.4 L1377.5 353.1 L1376.7 351.9 L1375.8 350.6 L1374.9 349.4 L1374.0 348.2 L1373.1 346.9 L1372.2 345.7 L1371.3 344.4 L1370.4 343.2 L1369.5 342.0 L1368.6 340.7 L1367.7 339.5 L1366.8 338.3 L1365.9 337.1 L1364.9 335.9 L1364.0 334.6 L1363.1 333.4 L1362.2 332.2 L1361.2 331.0 L1360.3 329.8 L1359.3 328.6 L1358.4 327.4 L1357.4 326.2 L1356.4 325.0 L1355.5 323.8 L1354.5 322.6 L1353.5 321.5 L1352.5 320.3 L1351.4 319.1 L1350.4 317.9 L1349.4 316.7 L1348.3 315.6 L1347.2 314.4 L1346.2 313.3 L1345.1 312.1 L1344.0 310.9 L1342.8 309.8 L1341.7 308.7 L1340.6 307.5 L1339.4 306.4 L1338.3 305.3 L1337.1 304.1 L1335.9 303.0 L1334.7 301.9 L1333.6 300.8 L1332.4 299.7 L1331.1 298.6 L1329.9 297.6 L1328.7 296.5 L1327.5 295.4 L1326.3 294.4 L1325.1 293.3 L1323.9 292.3 L1322.6 291.3 L1321.4 290.3 L1320.2 289.3 L1319.0 288.3 L1317.8 287.3 L1316.6 286.3 L1315.4 285.3 L1314.1 284.3 L1312.9 283.3 L1311.6 282.3 L1310.4 281.4 L1309.1 280.4 L1307.9 279.5 L1306.7 278.5 L1305.4 277.6 L1304.2 276.7 L1303.0 275.8 L1301.8 274.9 L1300.6 274.0 L1299.3 273.2 L1298.1 272.3 L1296.9 271.5 L1295.7 270.6 L1294.4 269.8 L1293.2 269.0 L1292.0 268.1 L1290.8 267.3 L1289.6 266.5 L1288.3 265.7 L1287.1 264.8 L1285.9 264.0 L1284.6 263.2 L1283.4 262.4 L1282.1 261.6 L1280.9 260.8 L1279.7 260.0 L1278.4 259.2 L1277.2 258.4 L1275.9 257.6 L1274.7 256.8 L1273.4 256.0 L1272.1 255.2 L1270.8 254.4 L1269.5 253.6 L1268.2 252.8 L1266.9 252.0 L1265.6 251.3 L1264.3 250.5 L1263.0 249.7 L1261.8 249.0 L1260.5 248.2 L1259.2 247.5 L1258.0 246.7 L1256.7 246.0 L1255.4 245.2 L1254.1 244.5 L1252.9 243.8 L1251.6 243.1 L1250.3 242.4 L1249.0 241.7 L1247.7 241.0 L1246.4 240.3 L1245.1 239.6 L1243.8 238.9 L1242.5 238.3 L1241.2 237.6 L1240.0 236.9 L1238.7 236.3 L1237.4 235.6 L1236.1 235.0 L1234.8 234.4 L1233.5 233.7 L1232.2 233.1 L1230.8 232.5 L1229.4 231.8 L1228.0 231.2 L1226.6 230.5 L1225.1 229.8 L1223.6 229.1 L1222.1 228.5 L1220.7 227.8 L1219.2 227.2 L1217.7 226.5 L1216.2 225.9 L1214.8 225.3 L1213.3 224.6 L1211.8 224.0 L1210.3 223.4 L1208.9 222.8 L1207.4 222.2 L1205.9 221.6 L1204.5 221.0 L1203.0 220.4 L1201.5 219.8 L1200.1 219.2 L1198.6 218.6 L1197.2 218.0 L1195.8 217.4 L1194.3 216.9 L1192.9 216.3 L1191.5 215.8 L1190.1 215.2 L1188.7 214.7 L1187.4 214.2 L1186.0 213.6 L1184.7 213.1 L1183.4 212.6 L1182.1 212.1 L1180.7 211.6 L1179.4 211.1 L1178.0 210.5 L1176.7 210.0 L1175.3 209.5 L1173.9 208.9 L1172.5 208.4 L1171.1 207.8 L1169.6 207.3 L1168.2 206.8 L1166.8 206.2 L1165.3 205.7 L1163.8 205.1 L1162.4 204.6 L1160.9 204.0 L1159.4 203.5 L1157.9 202.9 L1156.4 202.4 L1154.9 201.8 L1153.4 201.3 L1151.9 200.7 L1150.3 200.2 L1148.8 199.6 L1147.3 199.1 L1145.7 198.6 L1144.2 198.0 L1142.7 197.5 L1141.1 197.0 L1139.6 196.5 L1138.0 195.9 L1136.5 195.4 L1134.9 194.9 L1133.4 194.4 L1131.8 193.9 L1130.3 193.4 L1128.8 192.9 L1127.2 192.4 L1125.7 192.0 L1124.1 191.5 L1122.6 191.0 L1121.1 190.6 L1119.5 190.1 L1118.0 189.7 L1116.5 189.3 L1114.9 188.9 L1113.4 188.4 L1111.8 188.0 L1110.3 187.6 L1108.8 187.2 L1107.2 186.9 L1105.7 186.5 L1104.1 186.1 L1102.6 185.7 L1101.1 185.4 L1099.5 185.0 L1098.0 184.7 L1096.4 184.4 L1094.9 184.1 L1093.3 183.8 L1091.7 183.5 L1090.2 183.2 L1088.6 182.9 L1087.1 182.6 L1085.5 182.3 L1083.9 182.0 L1082.4 181.8 L1080.8 181.5 L1079.2 181.3 L1077.6 181.0 L1076.0 180.8 L1074.4 180.6 L1072.8 180.3 L1071.3 180.1 L1069.7 179.9 L1068.1 179.7 L1066.5 179.5 L1064.9 179.3 L1063.3 179.1 L1061.7 178.9 L1060.1 178.7 L1058.5 178.6 L1057.0 178.4 L1055.4 178.2 L1053.8 178.1 L1052.2 177.9 L1050.7 177.8 L1049.1 177.6 L1047.5 177.5 L1045.9 177.4 L1044.4 177.2 L1042.8 177.1 L1041.3 177.0 L1039.7 176.9 L1038.2 176.7 L1036.6 176.6 L1035.1 176.5 L1033.6 176.4 L1032.1 176.3 L1030.5 176.2 L1029.0 176.2 L1027.5 176.1 L1026.0 176.0 L1024.5 175.9 L1023.1 175.8 L1021.6 175.8 L1020.1 175.7 L1018.6 175.6 L1017.1 175.6 L1015.7 175.5 L1014.2 175.5 L1012.7 175.4 L1011.2 175.4 L1009.6 175.3 L1008.1 175.3 L1006.6 175.3 L1005.1 175.2 L1003.6 175.2 L1002.0 175.2 L1000.5 175.2 L999.0 175.2 L997.4 175.2 L995.9 175.2 L994.4 175.2 L992.8 175.2 L991.3 175.2 L989.7 175.3 L988.2 175.3 L986.6 175.3 L985.1 175.4 L983.5 175.4 L982.0 175.5 L980.4 175.6 L978.8 175.6 L977.3 175.7 L975.7 175.8 L974.1 175.9 L972.6 176.0 L971.0 176.1 L969.5 176.2 L968.0 176.3 L966.5 176.5 L965.0 176.6 L963.5 176.7 L962.0 176.9 L960.5 177.0 L959.0 177.2 L957.5 177.4 L956.1 177.5 L954.6 177.7 L953.1 177.9 L951.7 178.0 L950.2 178.2 L948.8 178.4 L947.3 178.6 L945.9 178.8 L944.4 179.0 L943.0 179.2 L941.5 179.4 L940.0 179.6 L938.6 179.9 L937.1 180.1 L935.7 180.3 L934.2 180.5 L932.8 180.7 L931.3 181.0 L929.8 181.2 L928.4 181.4 L926.9 181.7 L925.4 181.9 L924.0 182.2 L922.5 182.4 L921.0 182.7 L919.5 182.9 L918.1 183.2 L916.6 183.5 L915.1 183.7 L913.6 184.0 L912.1 184.3 L910.7 184.6 L909.2 184.8 L907.7 185.1 L906.2 185.4 L904.7 185.7 L903.2 186.0 L901.7 186.3 L900.3 186.6 L898.8 186.9 L897.3 187.2 L895.8 187.5 L894.3 187.9 L892.8 188.2 L891.4 188.5 L889.9 188.8 L888.4 189.2 L886.9 189.5 L885.4 189.8 L883.9 190.2 L882.5 190.5 L881.0 190.9 L879.5 191.2 L878.0 191.6 L876.5 192.0 L875.0 192.3 L873.6 192.7 L872.1 193.1 L870.6 193.4 L869.1 193.8 L867.6 194.2 L866.2 194.6 L864.7 194.9 L863.2 195.3 L861.7 195.7 L860.3 196.1 L858.8 196.5 L857.3 196.9 L855.8 197.3 L854.4 197.6 L852.9 198.0 L851.4 198.4 L850.0 198.8 L848.5 199.2 L847.1 199.6 L845.6 200.0 L844.1 200.4 L842.7 200.9 L841.2 201.3 L839.8 201.7 L838.3 202.1 L836.8 202.5 L835.4 202.9 L833.9 203.3 L832.5 203.7 L831.0 204.2 L829.6 204.6 L828.1 205.0 L826.7 205.4 L825.2 205.9 L823.8 206.3 L822.3 206.7 L820.9 207.2 L819.4 207.6 L818.0 208.1 L816.5 208.5 L815.0 209.0 L813.6 209.4 L812.1 209.9 L810.7 210.3 L809.2 210.8 L807.8 211.3 L806.3 211.7 L804.8 212.2 L803.4 212.7 L801.9 213.2 L800.5 213.7 L799.0 214.2 L797.5 214.7 L796.1 215.2 L794.6 215.7 L793.2 216.2 L791.7 216.8 L790.3 217.3 L788.8 217.8 L787.4 218.4 L785.9 218.9 L784.5 219.5 L783.0 220.0 L781.6 220.6 L780.2 221.1 L778.7 221.7 L777.3 222.3 L775.9 222.8 L774.5 223.4 L773.0 224.0 L771.6 224.6 L770.2 225.2 L768.8 225.8 L767.4 226.4 L766.0 227.0 L764.6 227.6 L763.2 228.2 L761.8 228.9 L760.4 229.5 L759.0 230.1 L757.6 230.8 L756.2 231.4 L754.8 232.0 L753.5 232.7 L752.1 233.3 L750.7 234.0 L749.3 234.6 L748.0 235.3 L746.6 235.9 L745.2 236.6 L743.8 237.3 L742.4 238.0 L741.1 238.6 L739.7 239.3 L738.3 240.0 L736.9 240.7 L735.6 241.4 L734.2 242.1 L732.8 242.8 L731.4 243.5 L730.1 244.3 L728.7 245.0 L727.4 245.7 L726.0 246.4 L724.6 247.2 L723.3 247.9 L721.9 248.6 L720.6 249.4 L719.3 250.1 L717.9 250.9 L716.6 251.7 L715.3 252.4 L713.9 253.2 L712.6 254.0 L711.3 254.7 L710.0 255.5 L708.7 256.3 L707.3 257.1 L706.0 257.9 L704.7 258.7 L703.4 259.6 L702.1 260.4 L700.8 261.2 L699.5 262.1 L698.2 262.9 L696.9 263.8 L695.6 264.7 L694.3 265.5 L693.0 266.4 L691.8 267.3 L690.5 268.2 L689.2 269.1 L687.9 270.0 L686.7 271.0 L685.4 271.9 L684.1 272.8 L682.9 273.8 L681.6 274.7 L680.3 275.7 L679.1 276.7 L677.8 277.6 L676.6 278.6 L675.3 279.6 L674.1 280.6 L672.8 281.6 L671.6 282.6 L670.4 283.6 L669.2 284.6 L667.9 285.6 L666.7 286.6 L665.5 287.6 L664.3 288.6 L663.1 289.6 L662.0 290.6 L660.8 291.6 L659.6 292.6 L658.4 293.7 L657.3 294.7 L656.1 295.7 L655.0 296.7 L653.8 297.7 L652.7 298.7 L651.6 299.7 L650.5 300.7 L649.4 301.8 L648.2 302.8 L647.1 303.8 L646.0 304.8 L644.9 305.9 L643.8 306.9 L642.7 307.9 L641.6 309.0 L640.5 310.0 L639.4 311.1 L638.3 312.2 L637.2 313.2 L636.1 314.3 L635.0 315.4 L633.9 316.5 L632.8 317.5 L631.7 318.6 L630.6 319.7 L629.5 320.8 L628.4 321.9 L627.3 323.0 L626.2 324.1 L625.1 325.2 L624.0 326.3 L622.9 327.4 L621.8 328.6 L620.8 329.7 L619.7 330.8 L618.6 332.0 L617.6 333.2 L616.5 334.3 L615.4 335.5 L614.4 336.6 L613.4 337.8 L612.3 338.9 L611.3 340.1 L610.3 341.2 L609.3 342.4 L608.3 343.6 L607.4 344.7 L606.4 345.9 L605.4 347.1 L604.5 348.2 L603.5 349.4 L602.5 350.6 L601.6 351.8 L600.7 352.9 L599.7 354.1 L598.8 355.3 L597.9 356.5 L596.9 357.7 L596.0 358.9 L595.1 360.1 L594.2 361.4 L593.3 362.6 L592.4 363.8 L591.5 365.0 L590.6 366.3 L589.7 367.5 L588.8 368.8 L587.9 370.0 L587.0 371.3 L586.2 372.6 L585.3 373.8 L584.4 375.1 L583.6 376.4 L582.7 377.7 L581.9 378.9 L581.0 380.2 L580.2 381.5 L579.3 382.8 L578.5 384.1 L577.7 385.4 L576.9 386.8 L576.0 388.1 L575.2 389.4 L574.4 390.7 L573.6 392.0 L572.8 393.4 L572.0 394.7 L571.3 396.1 L570.5 397.4 L569.7 398.7 L568.9 400.1 L568.2 401.5 L567.4 402.8 L566.7 404.2 L565.9 405.5 L565.2 406.9 L564.5 408.3 L563.7 409.7 L563.0 411.0 L562.3 412.4 L561.6 413.8 L560.9 415.2 L560.2 416.6 L559.5 418.0 L558.9 419.4 L558.2 420.8 L557.5 422.2 L556.8 423.6 L556.2 425.1 L555.5 426.5 L554.9 427.9 L554.2 429.3 L553.6 430.8 L553.0 432.2 L552.4 433.7 L551.7 435.1 L551.1 436.6 L550.5 438.0 L549.9 439.5 L549.3 440.9 L548.8 442.4 L548.2 443.8 L547.6 445.3 L547.0 446.8 L546.5 448.2 L545.9 449.7 L545.4 451.2 L544.8 452.6 L544.3 454.1 L543.8 455.6 L543.2 457.0 L542.7 458.5 L542.2 459.9 L541.7 461.4 L541.2 462.8 L540.7 464.2 L540.2 465.7 L539.7 467.1 L539.2 468.6 L538.7 470.0 L538.2 471.5 L537.8 472.9 L537.3 474.4 L536.8 475.8 L536.4 477.3 L535.9 478.7 L535.5 480.2 L535.0 481.6 L534.6 483.1 L534.1 484.5 L533.7 486.0 L533.3 487.4 L532.8 488.8 L532.4 490.3 L532.0 491.7 L531.6 493.2 L531.2 494.6 L530.8 496.0 L530.4 497.5 L530.1 498.9 L529.7 500.4 L529.3 501.8 L528.9 503.3 L528.6 504.7 L528.2 506.2 L527.9 507.7 L527.5 509.1 L527.2 510.6 L526.9 512.1 L526.6 513.5 L526.3 515.0 L526.0 516.5 L525.7 517.9 L525.4 519.4 L525.1 520.8 L524.8 522.3 L524.5 523.7 L524.3 525.2 L524.0 526.6 L523.7 528.1 L523.5 529.6 L523.2 531.0 L523.0 532.5 L522.8 533.9 L522.5 535.4 L522.3 536.9 L522.1 538.4 L521.9 539.9 L521.7 541.3 L521.5 542.8 L521.3 544.3 L521.1 545.8 L520.9 547.3 L520.7 548.8 L520.5 550.3 L520.3 551.8 L520.1 553.3 L519.9 554.8 L519.8 556.3 L519.6 557.8 L519.4 559.3 L519.3 560.8 L519.1 562.3 L519.0 563.8 L518.8 565.4 L518.7 566.9 L518.5 568.4 L518.4 570.0 L518.3 571.5 L518.1 573.1 L518.0 574.6 L517.9 576.2 L517.8 577.7 L517.6 579.3 L517.5 580.8 L517.4 582.4 L517.3 583.9 L517.2 585.5 L517.1 587.0 L517.1 588.5 L517.0 590.1 L516.9 591.6 L516.8 593.2 L516.8 594.7 L516.7 596.3 L516.6 597.8 L516.6 599.3 L516.5 600.9 L516.4 602.4 L516.4 604.0 L516.3 605.5 L516.3 607.0 L516.3 608.6 L516.2 610.1 L516.2 611.6 L516.2 613.2 L516.2 614.7 L516.1 616.2 L516.1 617.7 L516.1 619.3 L516.1 620.8 L516.1 622.3 L516.1 623.9 L516.1 625.4 L516.1 626.9 L516.1 628.4 L516.2 630.0 L516.2 631.5 L516.2 633.0 L516.2 634.6 L516.2 636.1 L516.3 637.6 L516.3 639.1 L516.3 640.7 L516.4 642.2 L516.4 643.7 L516.5 645.2 L516.5 646.7 L516.5 648.2 L516.6 649.8 L516.6 651.3 L516.7 652.8 L516.7 654.3 L516.8 655.8 L516.8 657.3 L516.9 658.8 L517.0 660.3 L517.0 661.8 L517.1 663.3 L517.2 664.8 L517.3 666.3 L517.3 667.8 L517.4 669.3 L517.5 670.8 L517.6 672.2 L517.7 673.7 L517.8 675.2 L517.9 676.7 L518.0 678.1 L518.1 679.6 L518.2 681.1 L518.3 682.6 L518.4 684.0 L518.5 685.5 L518.6 687.0 L518.7 688.5 L518.8 689.9 L518.9 691.4 L519.1 692.9 L519.2 694.4 L519.3 695.8 L519.4 697.3 L519.6 698.8 L519.7 700.3 L519.8 701.8 L520.0 703.3 L520.1 704.8 L520.2 706.3 L520.4 707.8 L520.5 709.2 L520.6 710.7 L520.8 712.2 L520.9 713.7 L521.0 715.2 L521.2 716.6 L521.3 718.1 L521.4 719.6 L521.6 721.1 L521.7 722.5 L521.9 724.0 L522.0 725.5 L522.2 726.9 L522.3 728.4 L522.5 729.8 L522.6 731.3 L522.8 732.7 L522.9 734.2 L523.1 735.6 L523.2 737.1 L523.4 738.5 L523.5 739.9 L523.7 741.4 L523.8 742.8 L524.0 744.2 L524.1 745.6 L524.3 747.0 L524.4 748.5 L524.6 749.9 L524.7 751.4 L524.9 752.8 L525.0 754.3 L525.2 755.7 L525.4 757.2 L525.5 758.7 L525.7 760.2 L525.8 761.7 L526.0 763.2 L526.1 764.7 L526.3 766.2 L526.4 767.7 L526.6 769.3 L526.7 770.8 L526.9 772.4 L527.0 774.0 L527.2 775.6 L527.3 777.1 L527.4 778.7 L527.6 780.3 L527.7 781.8 L527.8 783.4 L528.0 784.9 L528.1 786.5 L528.2 788.0 L528.3 789.6 L528.4 791.2 L528.6 792.7 L528.7 794.3 L528.8 795.8 L528.9 797.4 L529.0 798.9 L529.1 800.5 L529.2 802.0 L529.2 803.6 L529.3 805.1 L529.4 806.7 L529.5 808.2 L529.6 809.7 L529.6 811.3 L529.7 812.8 L529.8 814.4 L529.9 815.9 L529.9 817.4 L530.0 819.0 L530.0 820.5 L530.1 822.0 L530.2 823.6 L530.2 825.2 L530.3 826.7 L530.3 828.3 L530.4 829.9 L530.5 831.5 L530.5 833.1 L530.6 834.7 L530.6 836.3 L530.7 838.0 L530.7 839.6 L530.8 841.2 L530.8 842.8 L530.9 844.4 L530.9 846.0 L531.0 847.7 L531.0 849.3 L531.1 850.9 L531.1 852.5 L531.2 854.1 L531.2 855.7 L531.3 857.3 L531.3 858.9 L531.4 860.5 L531.4 862.1 L531.5 863.7 L531.5 865.2 L531.6 866.8 L531.6 868.3 L531.7 869.8 L531.7 871.4 L531.8 872.9 L531.8 874.4 L531.9 875.8 L531.9 877.3 L532.0 878.8 L532.1 880.3 L532.1 881.8 L532.2 883.3 L532.3 884.9 L532.3 886.4 L532.4 888.0 L532.5 889.5 L532.5 891.1 L532.6 892.7 L532.7 894.3 L532.8 895.8 L532.9 897.4 L533.0 899.0 L533.1 900.7 L533.1 902.3 L533.2 903.9 L533.3 905.5 L533.4 907.1 L533.5 908.8 L533.6 910.4 L533.7 912.0 L533.8 913.6 L533.9 915.3 L534.0 916.9 L534.1 918.6 L534.2 920.2 L534.3 921.9 L534.5 923.5 L534.6 925.1 L534.7 926.7 L534.8 928.3 L534.9 929.8 L535.0 931.3 L535.2 932.8 L535.3 934.3 L535.4 935.7 L535.5 937.1 L535.6 938.6 L535.7 940.0 L535.9 941.5 L536.0 943.0 L536.1 944.4 L536.2 945.9 L536.3 947.4 L536.5 948.8 L536.6 950.3 L536.7 951.8 L536.8 953.2 L536.9 954.6 L537.1 956.0 L537.2 957.5 L537.3 958.9 L537.4 960.3 L537.6 961.7 L537.7 963.2 L537.8 964.6 L538.0 966.1 L538.1 967.6 L538.3 969.0 L538.5 970.5 L538.6 972.0 L538.8 973.6 L539.0 975.1 L539.2 976.6 L539.4 978.2 L539.7 979.8 L539.9 981.3 L540.2 982.8 L540.5 984.3 L540.8 985.8 L541.2 987.2 L541.5 988.7 L541.9 990.1 L542.2 991.6 L542.6 993.0 L543.0 994.5 L543.4 995.9 L543.9 997.4 L544.3 998.9 L544.8 1000.3 L545.2 1001.8 L545.6 1003.2 L546.1 1004.8 L546.5 1006.2 L547.0 1007.7 L547.5 1009.2 L548.1 1010.7 L548.6 1012.1 L549.2 1013.6 L549.7 1015.0 L550.3 1016.4 L550.9 1017.9 L551.5 1019.3 L552.0 1020.7 L552.6 1022.1Z"/><circle cx="554.7" cy="1021.3" r="2.25"/><circle cx="1398.3" cy="831.7" r="2.50"/><path d="M1395.9 832.5 L1396.5 834.0 L1397.0 835.5 L1397.5 837.0 L1398.0 838.5 L1398.5 840.0 L1399.1 841.5 L1399.6 843.1 L1400.1 844.6 L1400.6 846.1 L1401.2 847.6 L1401.7 849.1 L1402.2 850.7 L1402.7 852.2 L1403.3 853.7 L1403.8 855.1 L1404.3 856.6 L1404.8 858.1 L1405.3 859.5 L1405.8 861.0 L1406.3 862.4 L1406.8 863.8 L1407.3 865.2 L1407.8 866.6 L1408.3 868.0 L1408.8 869.5 L1409.3 870.9 L1409.8 872.3 L1410.3 873.7 L1410.8 875.1 L1411.4 876.5 L1411.9 877.9 L1412.4 879.3 L1413.0 880.6 L1413.5 882.0 L1414.0 883.3 L1414.6 884.7 L1415.1 886.1 L1415.7 887.5 L1416.2 888.9 L1416.7 890.2 L1417.2 891.6 L1417.8 892.9 L1418.3 894.2 L1418.8 895.6 L1419.3 896.9 L1419.8 898.3 L1420.3 899.7 L1420.7 901.1 L1421.2 902.6 L1421.7 904.0 L1422.2 905.5 L1422.7 907.0 L1423.2 908.5 L1423.6 910.0 L1424.1 911.5 L1424.6 912.9 L1425.1 914.4 L1425.5 915.9 L1426.0 917.4 L1426.5 918.9 L1426.9 920.4 L1427.4 921.9 L1427.9 923.5 L1428.3 925.0 L1428.8 926.5 L1429.3 928.0 L1429.7 929.5 L1430.2 931.0 L1430.7 932.5 L1431.1 934.0 L1431.6 935.5 L1432.1 936.9 L1432.5 938.4 L1433.0 939.9 L1433.4 941.4 L1433.8 942.9 L1434.2 944.4 L1434.7 945.9 L1435.0 947.3 L1435.4 948.8 L1435.8 950.3 L1436.1 951.7 L1436.4 953.2 L1436.7 954.7 L1436.9 956.2 L1437.2 957.6 L1437.4 959.1 L1437.6 960.6 L1437.8 962.1 L1438.0 963.6 L1438.1 965.2 L1438.3 966.7 L1438.4 968.2 L1438.6 969.8 L1438.7 971.3 L1438.7 972.8 L1438.8 974.3 L1438.9 975.8 L1438.9 977.3 L1438.9 978.7 L1438.9 980.2 L1438.9 981.6 L1438.8 983.0 L1438.6 984.4 L1438.4 985.8 L1438.2 987.3 L1438.0 988.7 L1437.8 990.1 L1437.6 991.5 L1437.3 992.9 L1437.0 994.3 L1436.6 995.6 L1436.3 997.0 L1435.9 998.5 L1435.5 999.9 L1435.0 1001.3 L1434.5 1002.7 L1434.0 1004.2 L1433.6 1005.7 L1433.1 1007.1 L1432.6 1008.6 L1432.1 1010.1 L1431.6 1011.5 L1431.2 1013.0 L1430.7 1014.4 L1430.2 1015.9 L1429.7 1017.4 L1429.2 1018.8 L1428.6 1020.3 L1428.1 1021.7 L1427.5 1023.2 L1427.0 1024.6 L1426.4 1026.0 L1425.8 1027.5 L1425.3 1028.9 L1424.7 1030.3 L1424.1 1031.7 L1423.5 1033.1 L1423.0 1034.6 L1422.4 1036.0 L1421.8 1037.4 L1421.2 1038.8 L1420.5 1040.2 L1419.9 1041.7 L1419.3 1043.1 L1418.7 1044.5 L1418.0 1045.9 L1417.4 1047.4 L1416.8 1048.8 L1416.1 1050.2 L1415.5 1051.7 L1414.9 1053.1 L1414.2 1054.5 L1413.6 1056.0 L1413.0 1057.4 L1412.4 1058.8 L1411.8 1060.3 L1411.2 1061.7 L1410.6 1063.2 L1410.1 1064.6 L1409.5 1066.0 L1408.9 1067.4 L1408.3 1068.9 L1407.7 1070.3 L1407.2 1071.7 L1406.6 1073.0 L1406.0 1074.4 L1405.4 1075.8 L1404.7 1077.2 L1404.1 1078.5 L1403.4 1079.9 L1402.8 1081.2 L1402.1 1082.5 L1401.4 1083.8 L1400.7 1085.2 L1399.9 1086.5 L1399.1 1087.8 L1398.4 1089.1 L1397.6 1090.4 L1396.8 1091.7 L1395.9 1092.9 L1395.1 1094.2 L1394.2 1095.4 L1393.4 1096.7 L1392.5 1097.9 L1391.6 1099.2 L1390.7 1100.4 L1389.7 1101.6 L1388.8 1102.8 L1387.8 1104.0 L1386.8 1105.2 L1385.9 1106.4 L1384.9 1107.5 L1383.9 1108.7 L1382.9 1109.9 L1381.9 1111.1 L1380.9 1112.2 L1379.8 1113.4 L1378.8 1114.6 L1377.8 1115.7 L1376.8 1116.9 L1375.8 1118.1 L1374.8 1119.3 L1373.8 1120.4 L1372.8 1121.6 L1371.9 1122.8 L1370.9 1123.9 L1369.9 1125.1 L1368.9 1126.3 L1368.0 1127.4 L1367.0 1128.5 L1366.0 1129.7 L1365.0 1130.8 L1364.0 1131.9 L1363.0 1133.0 L1362.0 1134.1 L1360.9 1135.3 L1359.9 1136.3 L1358.8 1137.4 L1357.7 1138.5 L1356.6 1139.6 L1355.5 1140.7 L1354.4 1141.8 L1353.3 1142.8 L1352.2 1143.9 L1351.0 1144.9 L1349.9 1145.9 L1348.7 1147.0 L1347.5 1148.0 L1346.3 1149.0 L1345.2 1150.0 L1344.0 1151.0 L1342.8 1152.0 L1341.6 1153.0 L1340.4 1154.0 L1339.1 1154.9 L1337.9 1155.8 L1336.7 1156.7 L1335.5 1157.6 L1334.3 1158.5 L1333.0 1159.4 L1331.8 1160.3 L1330.6 1161.1 L1329.4 1161.9 L1328.1 1162.7 L1326.9 1163.5 L1325.6 1164.3 L1324.3 1165.1 L1323.0 1165.8 L1321.8 1166.6 L1320.5 1167.3 L1319.2 1168.0 L1317.8 1168.6 L1316.5 1169.3 L1315.2 1169.9 L1313.8 1170.5 L1312.5 1171.1 L1311.1 1171.6 L1309.7 1172.2 L1308.3 1172.7 L1306.9 1173.2 L1305.5 1173.6 L1304.2 1174.1 L1302.8 1174.5 L1301.4 1174.9 L1300.0 1175.2 L1298.6 1175.5 L1297.2 1175.8 L1295.8 1176.1 L1294.4 1176.3 L1292.9 1176.5 L1291.5 1176.7 L1290.1 1176.9 L1288.7 1177.0 L1287.2 1177.1 L1285.8 1177.1 L1284.4 1177.2 L1282.9 1177.1 L1281.5 1177.1 L1280.0 1177.0 L1278.5 1177.0 L1277.1 1176.8 L1275.6 1176.7 L1274.1 1176.5 L1272.6 1176.3 L1271.1 1176.1 L1269.6 1175.9 L1268.1 1175.6 L1266.6 1175.4 L1265.1 1175.1 L1263.6 1174.8 L1262.1 1174.5 L1260.6 1174.2 L1259.0 1173.9 L1257.5 1173.6 L1255.9 1173.3 L1254.4 1173.0 L1252.8 1172.6 L1251.3 1172.3 L1249.8 1171.9 L1248.3 1171.6 L1246.7 1171.2 L1245.2 1170.9 L1243.7 1170.5 L1242.3 1170.2 L1240.8 1169.8 L1239.2 1169.4 L1237.8 1169.0 L1236.3 1168.6 L1234.9 1168.2 L1233.5 1167.9 L1232.2 1167.5 L1230.8 1167.1 L1229.5 1166.6 L1228.2 1166.2 L1226.8 1165.6 L1225.4 1165.1 L1224.1 1164.6 L1222.7 1164.0 L1221.4 1163.5 L1220.1 1162.9 L1218.8 1162.3 L1217.6 1161.7 L1216.3 1161.1 L1215.0 1160.4 L1213.8 1159.8 L1212.5 1159.1 L1211.1 1158.4 L1209.8 1157.6 L1208.5 1156.9 L1207.1 1156.1 L1205.8 1155.4 L1204.6 1154.6 L1203.3 1153.9 L1201.9 1153.1 L1200.6 1152.3 L1199.2 1151.5 L1197.9 1150.7 L1196.5 1149.8 L1195.1 1149.0 L1193.7 1148.1 L1192.3 1147.2 L1190.9 1146.3 L1189.5 1145.5 L1188.1 1144.6 L1186.7 1143.7 L1185.4 1142.8 L1184.0 1141.9 L1182.7 1141.0 L1181.4 1140.1 L1180.1 1139.2 L1178.8 1138.4 L1177.6 1137.5 L1176.3 1136.6 L1175.1 1135.7 L1173.8 1134.8 L1172.6 1133.9 L1171.4 1133.0 L1170.2 1132.1 L1169.0 1131.2 L1167.8 1130.3 L1166.6 1129.4 L1165.4 1128.5 L1164.2 1127.5 L1163.1 1126.6 L1161.9 1125.6 L1160.7 1124.7 L1159.5 1123.8 L1158.3 1122.8 L1157.1 1121.9 L1155.9 1120.9 L1154.6 1120.0 L1153.4 1119.0 L1152.2 1118.1 L1151.0 1117.2 L1149.8 1116.2 L1148.6 1115.3 L1147.4 1114.4 L1146.2 1113.4 L1145.0 1112.5 L1143.7 1111.6 L1142.5 1110.6 L1141.3 1109.7 L1140.1 1108.7 L1138.8 1107.8 L1137.6 1106.9 L1136.4 1105.9 L1135.2 1105.0 L1133.9 1104.0 L1132.7 1103.1 L1131.4 1102.1 L1130.2 1101.2 L1129.0 1100.3 L1127.7 1099.3 L1126.5 1098.4 L1125.2 1097.5 L1124.0 1096.6 L1122.7 1095.7 L1121.5 1094.8 L1120.2 1093.9 L1118.9 1093.1 L1117.7 1092.2 L1116.4 1091.4 L1115.1 1090.6 L1113.8 1089.8 L1112.5 1089.0 L1111.2 1088.2 L1109.8 1087.4 L1108.5 1086.7 L1107.2 1086.0 L1105.8 1085.3 L1104.4 1084.6 L1103.1 1083.9 L1101.7 1083.2 L1100.3 1082.6 L1098.9 1082.0 L1097.5 1081.4 L1096.1 1080.8 L1094.6 1080.2 L1093.2 1079.7 L1091.7 1079.1 L1090.3 1078.6 L1088.8 1078.2 L1087.3 1077.7 L1085.8 1077.3 L1084.3 1076.9 L1082.8 1076.6 L1081.3 1076.2 L1079.7 1076.0 L1078.2 1075.7 L1076.7 1075.5 L1075.1 1075.3 L1073.6 1075.1 L1072.0 1075.0 L1070.5 1074.9 L1068.9 1074.9 L1067.4 1074.8 L1065.8 1074.9 L1064.3 1074.9 L1062.7 1075.0 L1061.2 1075.1 L1059.6 1075.2 L1058.1 1075.4 L1056.5 1075.6 L1055.0 1075.8 L1053.4 1076.0 L1051.9 1076.2 L1050.3 1076.5 L1048.7 1076.8 L1047.2 1077.0 L1045.6 1077.4 L1044.0 1077.7 L1042.4 1078.0 L1040.9 1078.4 L1039.3 1078.7 L1037.8 1079.1 L1036.3 1079.5 L1034.7 1079.9 L1033.2 1080.3 L1031.7 1080.7 L1030.2 1081.2 L1028.7 1081.6 L1027.2 1082.1 L1025.7 1082.6 L1024.3 1083.1 L1022.8 1083.6 L1021.3 1084.2 L1019.9 1084.7 L1018.5 1085.3 L1017.0 1085.9 L1015.6 1086.5 L1014.2 1087.1 L1012.8 1087.7 L1011.4 1088.4 L1010.0 1089.1 L1008.7 1089.8 L1007.3 1090.5 L1005.9 1091.2 L1004.6 1091.9 L1003.3 1092.7 L1002.0 1093.4 L1000.7 1094.2 L999.3 1095.0 L998.0 1095.7 L996.7 1096.5 L995.5 1097.3 L994.2 1098.1 L992.9 1098.9 L991.6 1099.8 L990.3 1100.6 L989.0 1101.4 L987.8 1102.3 L986.5 1103.1 L985.2 1104.0 L983.9 1104.8 L982.6 1105.7 L981.4 1106.6 L980.1 1107.4 L978.8 1108.3 L977.6 1109.2 L976.3 1110.1 L975.1 1111.0 L973.8 1111.9 L972.6 1112.9 L971.3 1113.8 L970.1 1114.7 L968.8 1115.7 L967.6 1116.6 L966.3 1117.6 L965.1 1118.5 L963.8 1119.4 L962.6 1120.4 L961.4 1121.3 L960.1 1122.2 L958.9 1123.2 L957.7 1124.1 L956.4 1125.0 L955.2 1125.9 L953.9 1126.8 L952.7 1127.7 L951.4 1128.6 L950.2 1129.5 L948.9 1130.4 L947.6 1131.3 L946.4 1132.2 L945.1 1133.1 L943.8 1134.0 L942.6 1134.9 L941.3 1135.8 L940.0 1136.6 L938.7 1137.5 L937.5 1138.4 L936.2 1139.2 L934.9 1140.1 L933.6 1141.0 L932.3 1141.8 L931.1 1142.7 L929.8 1143.5 L928.5 1144.4 L927.2 1145.2 L925.9 1146.1 L924.7 1146.9 L923.4 1147.7 L922.1 1148.6 L920.8 1149.4 L919.5 1150.2 L918.2 1151.0 L916.9 1151.8 L915.6 1152.6 L914.3 1153.4 L913.1 1154.2 L911.8 1155.0 L910.5 1155.8 L909.2 1156.6 L907.9 1157.4 L906.6 1158.2 L905.2 1158.9 L903.9 1159.7 L902.6 1160.5 L901.3 1161.2 L900.0 1162.0 L898.7 1162.8 L897.4 1163.5 L896.1 1164.3 L894.8 1165.0 L893.4 1165.7 L892.1 1166.5 L890.8 1167.2 L889.5 1167.9 L888.1 1168.7 L886.8 1169.4 L885.4 1170.1 L884.1 1170.8 L882.7 1171.5 L881.4 1172.3 L880.1 1173.0 L878.7 1173.7 L877.3 1174.4 L876.0 1175.1 L874.6 1175.8 L873.3 1176.6 L871.9 1177.3 L870.6 1178.0 L869.2 1178.7 L867.9 1179.4 L866.5 1180.1 L865.1 1180.8 L863.8 1181.5 L862.4 1182.2 L861.0 1182.9 L859.7 1183.6 L858.3 1184.2 L856.9 1184.9 L855.5 1185.6 L854.2 1186.2 L852.8 1186.8 L851.4 1187.4 L850.1 1188.0 L848.7 1188.6 L847.3 1189.2 L845.9 1189.7 L844.5 1190.2 L843.1 1190.8 L841.7 1191.3 L840.3 1191.7 L838.9 1192.2 L837.4 1192.6 L836.0 1193.1 L834.5 1193.5 L833.1 1193.9 L831.6 1194.2 L830.1 1194.6 L828.7 1194.9 L827.2 1195.3 L825.7 1195.6 L824.1 1195.9 L822.6 1196.1 L821.1 1196.4 L819.6 1196.6 L818.1 1196.8 L816.6 1197.0 L815.1 1197.2 L813.6 1197.4 L812.1 1197.6 L810.6 1197.7 L809.0 1197.8 L807.5 1198.0 L806.0 1198.1 L804.5 1198.2 L803.0 1198.2 L801.4 1198.3 L799.9 1198.4 L798.4 1198.4 L796.9 1198.4 L795.4 1198.5 L793.8 1198.5 L792.3 1198.5 L790.8 1198.4 L789.3 1198.4 L787.8 1198.4 L786.3 1198.3 L784.8 1198.2 L783.2 1198.1 L781.7 1198.0 L780.2 1197.9 L778.7 1197.8 L777.2 1197.6 L775.7 1197.4 L774.2 1197.2 L772.7 1197.0 L771.2 1196.7 L769.7 1196.5 L768.3 1196.2 L766.8 1195.8 L765.3 1195.5 L763.9 1195.1 L762.4 1194.7 L761.0 1194.3 L759.5 1193.8 L758.1 1193.4 L756.6 1192.9 L755.2 1192.3 L753.7 1191.8 L752.3 1191.2 L750.8 1190.6 L749.4 1190.0 L748.0 1189.3 L746.5 1188.6 L745.1 1188.0 L743.6 1187.3 L742.2 1186.5 L740.8 1185.8 L739.4 1185.1 L737.9 1184.3 L736.5 1183.6 L735.2 1182.8 L733.8 1182.1 L732.4 1181.4 L731.1 1180.6 L729.8 1179.9 L728.4 1179.2 L727.0 1178.4 L725.7 1177.7 L724.3 1176.9 L722.9 1176.1 L721.6 1175.4 L720.2 1174.6 L718.9 1173.9 L717.6 1173.1 L716.3 1172.4 L715.0 1171.6 L713.7 1170.8 L712.4 1170.1 L711.1 1169.3 L709.8 1168.5 L708.5 1167.7 L707.3 1166.9 L706.0 1166.1 L704.8 1165.3 L703.6 1164.5 L702.4 1163.7 L701.2 1162.9 L700.0 1162.1 L698.8 1161.3 L697.5 1160.4 L696.3 1159.6 L695.1 1158.8 L693.8 1157.9 L692.6 1157.0 L691.3 1156.2 L690.1 1155.3 L688.8 1154.4 L687.6 1153.5 L686.3 1152.6 L685.0 1151.7 L683.8 1150.9 L682.5 1150.0 L681.3 1149.1 L680.0 1148.2 L678.7 1147.3 L677.5 1146.5 L676.2 1145.6 L675.0 1144.7 L673.7 1143.9 L672.5 1143.0 L671.2 1142.1 L669.9 1141.3 L668.7 1140.4 L667.5 1139.5 L666.2 1138.7 L665.0 1137.8 L663.8 1136.9 L662.6 1136.0 L661.4 1135.1 L660.2 1134.2 L659.0 1133.3 L657.8 1132.4 L656.7 1131.5 L655.5 1130.5 L654.4 1129.6 L653.2 1128.6 L652.1 1127.6 L650.9 1126.6 L649.8 1125.7 L648.7 1124.7 L647.6 1123.6 L646.5 1122.6 L645.4 1121.6 L644.2 1120.6 L643.1 1119.6 L642.0 1118.5 L640.9 1117.5 L639.7 1116.5 L638.6 1115.4 L637.5 1114.4 L636.3 1113.4 L635.2 1112.3 L634.0 1111.3 L632.9 1110.3 L631.7 1109.2 L630.6 1108.2 L629.4 1107.2 L628.3 1106.1 L627.1 1105.1 L626.0 1104.1 L624.9 1103.1 L623.7 1102.1 L622.6 1101.1 L621.5 1100.0 L620.4 1099.0 L619.2 1098.0 L618.1 1097.0 L617.0 1096.0 L615.9 1094.9 L614.9 1093.9 L613.8 1092.9 L612.7 1091.9 L611.7 1090.9 L610.6 1089.8 L609.5 1088.8 L608.5 1087.8 L607.4 1086.7 L606.4 1085.7 L605.3 1084.6 L604.3 1083.6 L603.2 1082.5 L602.2 1081.4 L601.1 1080.3 L600.1 1079.3 L599.0 1078.2 L598.0 1077.1 L596.9 1076.0 L595.8 1074.9 L594.7 1073.7 L593.7 1072.6 L592.6 1071.5 L591.5 1070.3 L590.4 1069.2 L589.4 1068.0 L588.3 1066.8 L587.3 1065.7 L586.2 1064.5 L585.2 1063.3 L584.2 1062.1 L583.2 1060.9 L582.2 1059.7 L581.2 1058.5 L580.3 1057.3 L579.3 1056.0 L578.4 1054.8 L577.5 1053.6 L576.6 1052.3 L575.7 1051.1 L574.9 1049.8 L574.0 1048.6 L573.1 1047.4 L572.3 1046.1 L571.5 1044.8 L570.6 1043.5 L569.8 1042.3 L569.0 1041.0 L568.2 1039.7 L567.4 1038.4 L566.6 1037.1 L565.8 1035.8 L565.1 1034.5 L564.3 1033.2 L563.5 1031.9 L562.8 1030.6 L562.0 1029.3 L561.2 1028.0 L560.5 1026.7 L559.8 1025.4 L559.1 1024.1 L558.4 1022.7 L557.6 1021.4 L556.9 1020.1 L552.5 1022.5 L553.3 1023.8 L554.0 1025.1 L554.7 1026.5 L555.4 1027.8 L556.1 1029.1 L556.9 1030.4 L557.7 1031.8 L558.5 1033.1 L559.2 1034.4 L560.0 1035.8 L560.8 1037.1 L561.5 1038.4 L562.3 1039.7 L563.1 1041.0 L563.9 1042.3 L564.8 1043.6 L565.6 1045.0 L566.4 1046.3 L567.3 1047.6 L568.1 1048.9 L569.0 1050.2 L569.9 1051.4 L570.8 1052.7 L571.6 1054.0 L572.5 1055.2 L573.5 1056.5 L574.4 1057.8 L575.4 1059.1 L576.3 1060.3 L577.3 1061.6 L578.3 1062.8 L579.3 1064.1 L580.4 1065.3 L581.4 1066.6 L582.5 1067.8 L583.5 1069.0 L584.6 1070.2 L585.7 1071.4 L586.8 1072.6 L587.9 1073.7 L588.9 1074.9 L590.0 1076.1 L591.1 1077.2 L592.2 1078.3 L593.3 1079.5 L594.4 1080.6 L595.4 1081.7 L596.5 1082.8 L597.5 1083.8 L598.6 1084.9 L599.7 1086.0 L600.7 1087.1 L601.8 1088.1 L602.8 1089.2 L603.9 1090.3 L605.0 1091.3 L606.0 1092.4 L607.1 1093.4 L608.2 1094.5 L609.3 1095.5 L610.3 1096.5 L611.4 1097.6 L612.5 1098.6 L613.6 1099.6 L614.7 1100.7 L615.9 1101.7 L617.0 1102.7 L618.1 1103.7 L619.3 1104.8 L620.4 1105.8 L621.5 1106.8 L622.7 1107.8 L623.8 1108.8 L624.9 1109.9 L626.1 1110.9 L627.2 1111.9 L628.4 1112.9 L629.5 1114.0 L630.7 1115.0 L631.8 1116.0 L633.0 1117.1 L634.1 1118.1 L635.2 1119.1 L636.4 1120.2 L637.5 1121.2 L638.6 1122.2 L639.7 1123.3 L640.9 1124.3 L642.0 1125.3 L643.1 1126.3 L644.2 1127.4 L645.4 1128.4 L646.5 1129.4 L647.7 1130.4 L648.8 1131.4 L650.0 1132.4 L651.2 1133.4 L652.3 1134.4 L653.5 1135.4 L654.7 1136.3 L655.9 1137.3 L657.1 1138.2 L658.4 1139.1 L659.6 1140.0 L660.8 1141.0 L662.1 1141.9 L663.3 1142.7 L664.6 1143.6 L665.8 1144.5 L667.1 1145.4 L668.4 1146.3 L669.6 1147.1 L670.9 1148.0 L672.1 1148.8 L673.4 1149.7 L674.6 1150.6 L675.9 1151.4 L677.1 1152.3 L678.4 1153.2 L679.6 1154.1 L680.9 1154.9 L682.2 1155.8 L683.4 1156.7 L684.7 1157.6 L685.9 1158.5 L687.2 1159.4 L688.5 1160.3 L689.7 1161.1 L691.0 1162.0 L692.2 1162.9 L693.5 1163.7 L694.7 1164.6 L696.0 1165.4 L697.2 1166.2 L698.4 1167.0 L699.7 1167.8 L700.9 1168.6 L702.2 1169.4 L703.5 1170.2 L704.7 1171.0 L706.1 1171.7 L707.4 1172.5 L708.7 1173.3 L710.1 1174.1 L711.4 1174.8 L712.7 1175.6 L714.0 1176.3 L715.3 1177.1 L716.7 1177.8 L718.0 1178.6 L719.4 1179.3 L720.7 1180.1 L722.1 1180.9 L723.4 1181.6 L724.8 1182.4 L726.2 1183.2 L727.5 1183.9 L728.9 1184.7 L730.2 1185.4 L731.5 1186.2 L732.9 1187.0 L734.3 1187.7 L735.7 1188.5 L737.1 1189.3 L738.6 1190.0 L740.0 1190.8 L741.5 1191.5 L743.0 1192.3 L744.4 1193.0 L745.9 1193.7 L747.4 1194.4 L748.9 1195.1 L750.4 1195.7 L751.9 1196.3 L753.4 1196.9 L754.9 1197.5 L756.4 1198.1 L758.0 1198.6 L759.5 1199.1 L761.0 1199.5 L762.6 1199.9 L764.1 1200.3 L765.7 1200.7 L767.2 1201.0 L768.8 1201.4 L770.3 1201.6 L771.9 1201.9 L773.5 1202.1 L775.1 1202.4 L776.6 1202.6 L778.2 1202.7 L779.8 1202.9 L781.3 1203.0 L782.9 1203.1 L784.5 1203.2 L786.0 1203.3 L787.6 1203.4 L789.2 1203.4 L790.7 1203.4 L792.3 1203.5 L793.8 1203.5 L795.4 1203.5 L797.0 1203.4 L798.5 1203.4 L800.1 1203.4 L801.6 1203.3 L803.2 1203.3 L804.7 1203.2 L806.3 1203.1 L807.9 1203.0 L809.4 1202.9 L811.0 1202.8 L812.6 1202.7 L814.1 1202.5 L815.7 1202.4 L817.2 1202.2 L818.8 1202.0 L820.4 1201.8 L821.9 1201.6 L823.5 1201.3 L825.1 1201.1 L826.7 1200.8 L828.2 1200.5 L829.8 1200.2 L831.3 1199.8 L832.9 1199.5 L834.4 1199.1 L836.0 1198.7 L837.5 1198.3 L839.0 1197.9 L840.5 1197.5 L842.0 1197.0 L843.5 1196.5 L845.0 1196.0 L846.4 1195.5 L847.9 1194.9 L849.4 1194.4 L850.8 1193.8 L852.2 1193.2 L853.7 1192.6 L855.1 1192.0 L856.5 1191.4 L857.9 1190.7 L859.4 1190.1 L860.8 1189.4 L862.2 1188.7 L863.6 1188.1 L865.0 1187.4 L866.4 1186.7 L867.8 1186.0 L869.1 1185.3 L870.5 1184.6 L871.9 1183.9 L873.3 1183.2 L874.7 1182.5 L876.0 1181.8 L877.4 1181.1 L878.8 1180.4 L880.1 1179.7 L881.5 1179.0 L882.9 1178.3 L884.2 1177.6 L885.6 1176.8 L886.9 1176.1 L888.3 1175.4 L889.6 1174.7 L891.0 1173.9 L892.3 1173.2 L893.7 1172.5 L895.0 1171.7 L896.4 1171.0 L897.7 1170.2 L899.0 1169.5 L900.4 1168.7 L901.7 1168.0 L903.0 1167.2 L904.3 1166.4 L905.7 1165.7 L907.0 1164.9 L908.3 1164.1 L909.6 1163.3 L910.9 1162.5 L912.3 1161.7 L913.6 1160.9 L914.9 1160.1 L916.2 1159.3 L917.5 1158.5 L918.8 1157.7 L920.1 1156.9 L921.4 1156.1 L922.7 1155.3 L924.0 1154.4 L925.3 1153.6 L926.6 1152.8 L927.9 1151.9 L929.2 1151.1 L930.5 1150.2 L931.8 1149.4 L933.1 1148.5 L934.4 1147.7 L935.7 1146.8 L937.0 1146.0 L938.2 1145.1 L939.5 1144.2 L940.8 1143.3 L942.1 1142.5 L943.4 1141.6 L944.7 1140.7 L946.0 1139.8 L947.3 1138.9 L948.5 1138.0 L949.8 1137.1 L951.1 1136.2 L952.4 1135.3 L953.7 1134.4 L954.9 1133.5 L956.2 1132.6 L957.5 1131.7 L958.7 1130.8 L960.0 1129.8 L961.2 1128.9 L962.5 1128.0 L963.7 1127.0 L965.0 1126.1 L966.2 1125.2 L967.5 1124.2 L968.7 1123.3 L969.9 1122.3 L971.2 1121.4 L972.4 1120.5 L973.7 1119.5 L974.9 1118.6 L976.1 1117.7 L977.4 1116.8 L978.6 1115.9 L979.8 1115.0 L981.1 1114.1 L982.3 1113.2 L983.5 1112.4 L984.8 1111.5 L986.0 1110.6 L987.3 1109.8 L988.5 1109.0 L989.8 1108.1 L991.0 1107.3 L992.3 1106.5 L993.6 1105.7 L994.8 1104.9 L996.1 1104.1 L997.4 1103.3 L998.7 1102.6 L999.9 1101.8 L1001.2 1101.0 L1002.5 1100.3 L1003.8 1099.5 L1005.0 1098.8 L1006.3 1098.1 L1007.6 1097.4 L1008.9 1096.7 L1010.2 1096.1 L1011.5 1095.4 L1012.8 1094.8 L1014.1 1094.1 L1015.5 1093.5 L1016.8 1092.9 L1018.1 1092.4 L1019.5 1091.8 L1020.9 1091.3 L1022.2 1090.7 L1023.6 1090.2 L1025.0 1089.7 L1026.4 1089.3 L1027.8 1088.8 L1029.2 1088.3 L1030.6 1087.9 L1032.1 1087.5 L1033.5 1087.1 L1035.0 1086.7 L1036.4 1086.3 L1037.9 1085.9 L1039.4 1085.6 L1040.9 1085.2 L1042.4 1084.9 L1043.9 1084.6 L1045.4 1084.3 L1046.9 1084.0 L1048.4 1083.7 L1049.9 1083.4 L1051.4 1083.2 L1052.9 1082.9 L1054.4 1082.7 L1055.9 1082.5 L1057.3 1082.4 L1058.8 1082.2 L1060.2 1082.1 L1061.6 1082.0 L1063.1 1081.9 L1064.5 1081.8 L1065.9 1081.8 L1067.4 1081.8 L1068.8 1081.8 L1070.2 1081.9 L1071.6 1082.0 L1073.0 1082.1 L1074.4 1082.2 L1075.8 1082.3 L1077.2 1082.5 L1078.6 1082.7 L1079.9 1083.0 L1081.3 1083.2 L1082.7 1083.6 L1084.1 1083.9 L1085.5 1084.2 L1086.8 1084.6 L1088.2 1085.1 L1089.5 1085.5 L1090.9 1086.0 L1092.2 1086.5 L1093.6 1087.0 L1095.0 1087.5 L1096.3 1088.1 L1097.6 1088.6 L1098.9 1089.2 L1100.2 1089.8 L1101.6 1090.4 L1102.9 1091.1 L1104.1 1091.7 L1105.4 1092.4 L1106.7 1093.1 L1108.0 1093.8 L1109.2 1094.5 L1110.5 1095.3 L1111.7 1096.0 L1113.0 1096.8 L1114.2 1097.5 L1115.4 1098.3 L1116.6 1099.1 L1117.9 1100.0 L1119.1 1100.8 L1120.3 1101.7 L1121.5 1102.6 L1122.8 1103.4 L1124.0 1104.3 L1125.3 1105.2 L1126.5 1106.2 L1127.7 1107.1 L1129.0 1108.0 L1130.2 1108.9 L1131.5 1109.9 L1132.7 1110.8 L1133.9 1111.7 L1135.2 1112.6 L1136.4 1113.6 L1137.6 1114.5 L1138.9 1115.4 L1140.1 1116.3 L1141.3 1117.3 L1142.5 1118.2 L1143.7 1119.1 L1144.9 1120.0 L1146.2 1121.0 L1147.4 1121.9 L1148.6 1122.8 L1149.8 1123.8 L1151.0 1124.7 L1152.1 1125.6 L1153.3 1126.6 L1154.5 1127.5 L1155.7 1128.5 L1156.9 1129.4 L1158.1 1130.4 L1159.3 1131.3 L1160.6 1132.2 L1161.8 1133.2 L1163.0 1134.1 L1164.2 1135.1 L1165.4 1136.0 L1166.6 1136.9 L1167.8 1137.8 L1169.0 1138.7 L1170.3 1139.6 L1171.5 1140.6 L1172.8 1141.5 L1174.1 1142.4 L1175.4 1143.3 L1176.7 1144.2 L1178.0 1145.1 L1179.4 1146.0 L1180.8 1146.9 L1182.1 1147.8 L1183.5 1148.7 L1184.9 1149.5 L1186.3 1150.4 L1187.8 1151.3 L1189.2 1152.2 L1190.6 1153.1 L1192.1 1153.9 L1193.5 1154.8 L1194.9 1155.6 L1196.3 1156.4 L1197.7 1157.2 L1199.1 1158.0 L1200.4 1158.8 L1201.7 1159.6 L1203.0 1160.3 L1204.4 1161.0 L1205.7 1161.8 L1207.1 1162.5 L1208.5 1163.3 L1209.9 1164.0 L1211.2 1164.7 L1212.6 1165.4 L1213.9 1166.0 L1215.3 1166.6 L1216.6 1167.2 L1218.0 1167.8 L1219.4 1168.4 L1220.8 1168.9 L1222.2 1169.4 L1223.6 1170.0 L1225.0 1170.5 L1226.5 1171.0 L1227.9 1171.4 L1229.4 1171.8 L1230.8 1172.3 L1232.2 1172.7 L1233.6 1173.1 L1235.0 1173.5 L1236.5 1173.8 L1238.0 1174.2 L1239.5 1174.6 L1241.0 1175.0 L1242.6 1175.4 L1244.1 1175.8 L1245.6 1176.1 L1247.1 1176.5 L1248.7 1176.8 L1250.2 1177.2 L1251.8 1177.5 L1253.3 1177.9 L1254.9 1178.2 L1256.5 1178.5 L1258.0 1178.8 L1259.6 1179.1 L1261.1 1179.4 L1262.7 1179.7 L1264.2 1180.0 L1265.7 1180.3 L1267.3 1180.6 L1268.8 1180.8 L1270.3 1181.1 L1271.9 1181.3 L1273.5 1181.5 L1275.0 1181.7 L1276.6 1181.8 L1278.2 1181.9 L1279.7 1182.0 L1281.3 1182.1 L1282.9 1182.1 L1284.4 1182.2 L1285.9 1182.1 L1287.5 1182.1 L1289.0 1182.0 L1290.5 1181.9 L1292.1 1181.7 L1293.6 1181.5 L1295.2 1181.3 L1296.7 1181.0 L1298.2 1180.7 L1299.7 1180.4 L1301.2 1180.1 L1302.7 1179.7 L1304.1 1179.3 L1305.6 1178.9 L1307.1 1178.4 L1308.6 1177.9 L1310.0 1177.4 L1311.5 1176.9 L1312.9 1176.3 L1314.4 1175.7 L1315.8 1175.1 L1317.3 1174.4 L1318.7 1173.8 L1320.1 1173.1 L1321.4 1172.4 L1322.8 1171.7 L1324.2 1170.9 L1325.5 1170.2 L1326.9 1169.4 L1328.2 1168.6 L1329.5 1167.8 L1330.8 1167.0 L1332.1 1166.1 L1333.4 1165.2 L1334.7 1164.4 L1335.9 1163.5 L1337.2 1162.6 L1338.4 1161.7 L1339.7 1160.8 L1340.9 1159.8 L1342.2 1158.9 L1343.4 1157.9 L1344.7 1156.9 L1345.9 1156.0 L1347.2 1155.0 L1348.4 1154.0 L1349.6 1153.0 L1350.9 1151.9 L1352.1 1150.9 L1353.3 1149.9 L1354.5 1148.9 L1355.7 1147.8 L1356.9 1146.7 L1358.1 1145.7 L1359.2 1144.6 L1360.4 1143.5 L1361.5 1142.4 L1362.7 1141.3 L1363.8 1140.2 L1364.9 1139.1 L1366.0 1138.0 L1367.1 1136.9 L1368.1 1135.7 L1369.2 1134.6 L1370.2 1133.5 L1371.3 1132.3 L1372.3 1131.2 L1373.3 1130.0 L1374.3 1128.9 L1375.3 1127.7 L1376.3 1126.6 L1377.3 1125.5 L1378.3 1124.3 L1379.3 1123.2 L1380.3 1122.0 L1381.3 1120.8 L1382.3 1119.7 L1383.4 1118.5 L1384.4 1117.3 L1385.4 1116.1 L1386.4 1115.0 L1387.4 1113.8 L1388.4 1112.6 L1389.5 1111.4 L1390.5 1110.2 L1391.5 1109.0 L1392.5 1107.8 L1393.5 1106.5 L1394.5 1105.3 L1395.4 1104.0 L1396.4 1102.7 L1397.3 1101.5 L1398.3 1100.2 L1399.2 1098.9 L1400.1 1097.5 L1401.0 1096.2 L1401.8 1094.9 L1402.7 1093.6 L1403.5 1092.2 L1404.3 1090.9 L1405.1 1089.5 L1405.9 1088.1 L1406.7 1086.7 L1407.4 1085.3 L1408.1 1083.9 L1408.8 1082.5 L1409.5 1081.1 L1410.2 1079.7 L1410.8 1078.3 L1411.5 1076.8 L1412.1 1075.4 L1412.7 1074.0 L1413.3 1072.6 L1413.9 1071.1 L1414.5 1069.7 L1415.0 1068.3 L1415.6 1066.8 L1416.2 1065.4 L1416.8 1064.0 L1417.4 1062.6 L1417.9 1061.2 L1418.5 1059.7 L1419.1 1058.3 L1419.7 1056.9 L1420.4 1055.5 L1421.0 1054.1 L1421.6 1052.6 L1422.2 1051.2 L1422.9 1049.8 L1423.5 1048.4 L1424.1 1046.9 L1424.8 1045.5 L1425.4 1044.1 L1426.0 1042.6 L1426.7 1041.2 L1427.3 1039.7 L1427.9 1038.3 L1428.5 1036.9 L1429.1 1035.4 L1429.7 1034.0 L1430.3 1032.6 L1430.8 1031.1 L1431.4 1029.7 L1432.0 1028.2 L1432.6 1026.8 L1433.1 1025.3 L1433.7 1023.9 L1434.2 1022.4 L1434.8 1020.9 L1435.4 1019.5 L1435.9 1018.0 L1436.5 1016.5 L1437.1 1015.1 L1437.6 1013.7 L1438.2 1012.2 L1438.7 1010.8 L1439.3 1009.3 L1439.8 1007.9 L1440.4 1006.4 L1440.9 1005.0 L1441.5 1003.6 L1442.0 1002.1 L1442.5 1000.6 L1443.1 999.2 L1443.6 997.7 L1444.1 996.2 L1444.5 994.7 L1445.0 993.2 L1445.4 991.7 L1445.8 990.2 L1446.1 988.6 L1446.4 986.9 L1446.6 985.3 L1446.7 983.7 L1446.8 982.0 L1446.9 980.4 L1446.9 978.8 L1446.9 977.1 L1446.9 975.5 L1446.8 973.9 L1446.7 972.3 L1446.6 970.6 L1446.4 969.0 L1446.2 967.4 L1446.0 965.8 L1445.7 964.2 L1445.5 962.6 L1445.2 961.0 L1444.9 959.4 L1444.6 957.9 L1444.3 956.3 L1444.0 954.8 L1443.7 953.3 L1443.3 951.7 L1442.9 950.2 L1442.6 948.6 L1442.2 947.1 L1441.8 945.6 L1441.4 944.0 L1441.0 942.5 L1440.6 940.9 L1440.1 939.4 L1439.7 937.9 L1439.2 936.4 L1438.7 934.9 L1438.3 933.4 L1437.8 931.9 L1437.3 930.4 L1436.9 928.9 L1436.4 927.4 L1435.8 925.9 L1435.3 924.4 L1434.8 922.9 L1434.3 921.4 L1433.8 919.9 L1433.3 918.3 L1432.8 916.9 L1432.3 915.4 L1431.8 913.9 L1431.2 912.4 L1430.7 910.9 L1430.2 909.4 L1429.7 907.9 L1429.2 906.4 L1428.6 904.9 L1428.1 903.5 L1427.5 902.0 L1427.0 900.5 L1426.5 899.1 L1425.9 897.6 L1425.4 896.2 L1424.9 894.8 L1424.4 893.5 L1423.9 892.1 L1423.4 890.8 L1422.8 889.4 L1422.3 888.1 L1421.8 886.7 L1421.3 885.3 L1420.7 883.9 L1420.2 882.5 L1419.6 881.1 L1419.1 879.8 L1418.6 878.4 L1418.0 877.1 L1417.5 875.7 L1417.0 874.4 L1416.5 873.0 L1415.9 871.6 L1415.4 870.2 L1414.8 868.8 L1414.3 867.4 L1413.8 866.0 L1413.2 864.6 L1412.7 863.2 L1412.2 861.8 L1411.6 860.5 L1411.1 859.1 L1410.6 857.6 L1410.1 856.2 L1409.5 854.7 L1409.0 853.3 L1408.4 851.8 L1407.9 850.3 L1407.3 848.8 L1406.8 847.3 L1406.2 845.8 L1405.6 844.3 L1405.1 842.8 L1404.5 841.3 L1404.0 839.8 L1403.4 838.3 L1402.8 836.8 L1402.3 835.3 L1401.7 833.8 L1401.2 832.3 L1400.7 830.9Z"/><circle cx="1398.3" cy="831.7" r="2.50"/><circle cx="554.7" cy="1021.3" r="2.50"/><path d="M611.4 1096.7 L612.0 1098.1 L612.5 1099.6 L613.1 1101.0 L613.6 1102.4 L614.1 1103.9 L614.7 1105.3 L615.3 1106.8 L615.9 1108.2 L616.5 1109.6 L617.1 1111.0 L617.7 1112.5 L618.4 1113.9 L619.0 1115.3 L619.7 1116.6 L620.4 1118.0 L621.2 1119.4 L621.9 1120.7 L622.7 1122.1 L623.5 1123.4 L624.3 1124.7 L625.1 1126.0 L625.9 1127.3 L626.8 1128.6 L627.7 1129.9 L628.5 1131.2 L629.4 1132.5 L630.3 1133.8 L631.2 1135.0 L632.1 1136.3 L633.0 1137.6 L633.9 1138.8 L634.9 1140.1 L635.8 1141.4 L636.7 1142.7 L637.7 1144.0 L638.6 1145.3 L639.5 1146.5 L640.5 1147.8 L641.4 1149.1 L642.4 1150.3 L643.4 1151.6 L644.3 1152.9 L645.3 1154.1 L646.2 1155.4 L647.2 1156.6 L648.2 1157.8 L649.1 1159.0 L650.1 1160.2 L651.1 1161.4 L652.1 1162.6 L653.0 1163.8 L654.0 1164.9 L655.0 1166.1 L656.0 1167.2 L657.0 1168.4 L658.0 1169.5 L659.0 1170.6 L660.0 1171.7 L661.0 1172.8 L662.0 1173.9 L663.1 1175.0 L664.1 1176.0 L665.1 1177.1 L666.1 1178.2 L667.2 1179.2 L668.2 1180.3 L669.3 1181.3 L670.3 1182.4 L671.4 1183.4 L672.5 1184.5 L673.5 1185.5 L674.6 1186.5 L675.8 1187.5 L676.9 1188.6 L678.0 1189.6 L679.2 1190.6 L680.4 1191.6 L681.5 1192.6 L682.7 1193.6 L683.9 1194.6 L685.1 1195.6 L686.3 1196.6 L687.6 1197.5 L688.8 1198.5 L690.1 1199.4 L691.3 1200.3 L692.6 1201.3 L693.9 1202.2 L695.2 1203.1 L696.5 1204.0 L697.7 1204.8 L699.0 1205.7 L700.3 1206.6 L701.6 1207.5 L703.0 1208.4 L704.3 1209.2 L705.6 1210.1 L706.9 1211.0 L708.3 1211.8 L709.6 1212.7 L710.9 1213.5 L712.3 1214.3 L713.6 1215.2 L714.9 1216.0 L716.3 1216.8 L717.6 1217.6 L718.9 1218.4 L720.2 1219.2 L721.4 1220.0 L722.7 1220.7 L724.0 1221.5 L725.3 1222.2 L726.5 1223.0 L727.8 1223.7 L729.1 1224.4 L730.4 1225.1 L731.7 1225.9 L733.0 1226.6 L734.4 1227.3 L735.8 1228.0 L737.2 1228.6 L738.6 1229.3 L740.0 1230.0 L741.4 1230.6 L742.8 1231.2 L744.2 1231.9 L745.6 1232.5 L747.1 1233.1 L748.5 1233.7 L750.0 1234.2 L751.5 1234.8 L753.0 1235.3 L754.4 1235.9 L755.9 1236.4 L757.4 1236.9 L758.9 1237.4 L760.4 1237.9 L761.9 1238.4 L763.4 1238.9 L764.9 1239.4 L766.5 1239.9 L768.0 1240.4 L769.6 1240.8 L771.2 1241.3 L772.8 1241.8 L774.4 1242.3 L775.9 1242.7 L777.5 1243.2 L779.1 1243.6 L780.7 1244.1 L782.2 1244.5 L783.8 1245.0 L785.3 1245.4 L786.8 1245.8 L788.3 1246.2 L789.8 1246.6 L791.3 1247.0 L792.8 1247.4 L794.3 1247.8 L795.9 1248.2 L797.4 1248.6 L798.9 1249.0 L800.4 1249.3 L802.0 1249.7 L803.5 1250.1 L805.0 1250.4 L806.5 1250.7 L808.0 1251.0 L809.5 1251.4 L811.0 1251.7 L812.5 1251.9 L814.1 1252.2 L815.6 1252.5 L817.1 1252.7 L818.5 1252.9 L820.0 1253.1 L821.4 1253.3 L822.8 1253.5 L824.3 1253.6 L825.7 1253.8 L827.1 1253.9 L828.5 1254.0 L830.0 1254.1 L831.4 1254.2 L832.8 1254.3 L834.3 1254.3 L835.7 1254.4 L837.2 1254.4 L838.6 1254.4 L840.1 1254.4 L841.6 1254.4 L843.1 1254.3 L844.6 1254.3 L846.1 1254.2 L847.6 1254.1 L849.2 1254.0 L850.7 1253.9 L852.2 1253.8 L853.7 1253.6 L855.2 1253.5 L856.7 1253.3 L858.2 1253.1 L859.7 1252.9 L861.2 1252.7 L862.6 1252.5 L864.1 1252.3 L865.6 1252.1 L867.1 1251.9 L868.6 1251.6 L870.1 1251.4 L871.5 1251.1 L873.0 1250.9 L874.4 1250.6 L875.9 1250.3 L877.4 1250.0 L878.9 1249.7 L880.4 1249.4 L881.9 1249.0 L883.5 1248.7 L885.0 1248.3 L886.6 1247.9 L888.1 1247.5 L889.7 1247.1 L891.2 1246.7 L892.7 1246.2 L894.2 1245.8 L895.7 1245.3 L897.2 1244.8 L898.6 1244.4 L900.1 1243.8 L901.5 1243.3 L902.9 1242.8 L904.3 1242.2 L905.7 1241.7 L907.1 1241.1 L908.4 1240.5 L909.7 1239.9 L911.1 1239.4 L912.3 1238.7 L913.6 1238.1 L914.9 1237.5 L916.2 1236.9 L917.5 1236.2 L918.8 1235.6 L920.2 1234.9 L921.5 1234.2 L922.8 1233.5 L924.2 1232.8 L925.5 1232.1 L926.9 1231.4 L928.3 1230.7 L929.7 1230.0 L931.1 1229.3 L932.6 1228.5 L934.0 1227.8 L935.5 1227.1 L936.9 1226.4 L938.3 1225.7 L939.7 1225.0 L941.2 1224.3 L942.6 1223.7 L944.0 1223.0 L945.4 1222.3 L946.8 1221.7 L948.2 1221.0 L949.6 1220.4 L950.9 1219.8 L952.3 1219.2 L953.7 1218.5 L955.0 1217.9 L956.3 1217.3 L957.7 1216.7 L959.0 1216.1 L960.4 1215.5 L961.8 1214.8 L963.2 1214.2 L964.6 1213.6 L966.0 1212.9 L967.5 1212.3 L968.9 1211.6 L970.3 1211.0 L971.8 1210.3 L973.2 1209.7 L974.7 1209.1 L976.2 1208.4 L977.6 1207.8 L979.1 1207.1 L980.5 1206.5 L982.0 1205.9 L983.5 1205.2 L984.9 1204.6 L986.4 1204.0 L987.8 1203.4 L989.3 1202.8 L990.7 1202.2 L992.1 1201.6 L993.5 1201.0 L995.0 1200.5 L996.4 1199.9 L997.7 1199.3 L999.1 1198.8 L1000.6 1198.3 L1002.0 1197.7 L1003.4 1197.2 L1004.8 1196.7 L1006.3 1196.2 L1007.7 1195.7 L1009.2 1195.2 L1010.7 1194.7 L1012.2 1194.2 L1013.7 1193.7 L1015.2 1193.2 L1016.7 1192.7 L1018.3 1192.2 L1019.8 1191.8 L1021.4 1191.3 L1023.0 1190.8 L1024.5 1190.4 L1026.1 1189.9 L1027.7 1189.5 L1029.2 1189.1 L1030.8 1188.7 L1032.3 1188.3 L1033.8 1187.9 L1035.4 1187.5 L1036.9 1187.2 L1038.4 1186.8 L1039.8 1186.5 L1041.3 1186.1 L1042.8 1185.8 L1044.2 1185.5 L1045.6 1185.2 L1047.0 1185.0 L1048.4 1184.7 L1049.8 1184.4 L1051.1 1184.2 L1052.5 1184.0 L1053.9 1183.7 L1055.3 1183.5 L1056.8 1183.3 L1058.2 1183.1 L1059.7 1183.0 L1061.1 1182.8 L1062.6 1182.7 L1064.1 1182.5 L1065.6 1182.4 L1067.1 1182.4 L1068.6 1182.3 L1070.0 1182.3 L1071.5 1182.3 L1073.1 1182.3 L1074.6 1182.4 L1076.1 1182.4 L1077.6 1182.5 L1079.1 1182.7 L1080.5 1182.9 L1082.0 1183.0 L1083.4 1183.3 L1084.8 1183.5 L1086.3 1183.8 L1087.7 1184.1 L1089.1 1184.4 L1090.5 1184.7 L1091.9 1185.1 L1093.3 1185.5 L1094.7 1185.9 L1096.1 1186.3 L1097.6 1186.7 L1099.0 1187.2 L1100.4 1187.7 L1101.9 1188.2 L1103.3 1188.7 L1104.7 1189.2 L1106.1 1189.8 L1107.6 1190.3 L1109.0 1190.9 L1110.4 1191.5 L1111.9 1192.1 L1113.3 1192.7 L1114.8 1193.3 L1116.2 1194.0 L1117.7 1194.6 L1119.1 1195.2 L1120.6 1195.8 L1122.0 1196.5 L1123.5 1197.1 L1124.9 1197.7 L1126.4 1198.3 L1127.9 1198.9 L1129.3 1199.5 L1130.8 1200.1 L1132.2 1200.7 L1133.6 1201.3 L1135.1 1201.9 L1136.5 1202.5 L1138.0 1203.1 L1139.4 1203.7 L1140.9 1204.3 L1142.3 1204.9 L1143.7 1205.4 L1145.2 1206.0 L1146.6 1206.6 L1148.1 1207.2 L1149.5 1207.8 L1150.9 1208.3 L1152.4 1208.9 L1153.8 1209.5 L1155.3 1210.1 L1156.7 1210.6 L1158.2 1211.2 L1159.6 1211.8 L1161.1 1212.3 L1162.5 1212.9 L1164.0 1213.5 L1165.5 1214.1 L1166.9 1214.6 L1168.4 1215.2 L1169.9 1215.8 L1171.4 1216.3 L1172.8 1216.9 L1174.3 1217.5 L1175.8 1218.1 L1177.3 1218.6 L1178.8 1219.2 L1180.3 1219.8 L1181.8 1220.3 L1183.3 1220.9 L1184.8 1221.4 L1186.2 1222.0 L1187.7 1222.5 L1189.1 1223.0 L1190.5 1223.5 L1192.0 1224.0 L1193.4 1224.5 L1194.9 1225.0 L1196.3 1225.5 L1197.8 1226.0 L1199.2 1226.5 L1200.6 1226.9 L1202.1 1227.4 L1203.5 1227.8 L1204.9 1228.2 L1206.3 1228.6 L1207.7 1229.0 L1209.1 1229.4 L1210.6 1229.8 L1212.1 1230.1 L1213.6 1230.4 L1215.1 1230.7 L1216.6 1230.9 L1218.1 1231.2 L1219.5 1231.4 L1221.0 1231.5 L1222.5 1231.6 L1224.0 1231.7 L1225.5 1231.8 L1227.0 1231.9 L1228.5 1231.9 L1230.1 1231.9 L1231.6 1231.8 L1233.2 1231.8 L1234.8 1231.7 L1236.4 1231.6 L1238.0 1231.5 L1239.5 1231.4 L1241.1 1231.2 L1242.7 1231.1 L1244.3 1230.9 L1245.9 1230.7 L1247.5 1230.6 L1249.1 1230.4 L1250.7 1230.1 L1252.2 1229.9 L1253.8 1229.7 L1255.4 1229.4 L1257.0 1229.1 L1258.6 1228.8 L1260.2 1228.5 L1261.8 1228.2 L1263.4 1227.8 L1264.9 1227.4 L1266.5 1227.0 L1268.1 1226.6 L1269.6 1226.1 L1271.1 1225.6 L1272.6 1225.1 L1274.2 1224.6 L1275.6 1224.0 L1277.1 1223.5 L1278.6 1222.9 L1280.1 1222.3 L1281.5 1221.7 L1282.9 1221.1 L1284.4 1220.5 L1285.8 1219.8 L1287.2 1219.2 L1288.6 1218.6 L1290.0 1217.9 L1291.4 1217.3 L1292.7 1216.6 L1294.1 1216.0 L1295.5 1215.3 L1296.9 1214.6 L1298.3 1213.9 L1299.6 1213.2 L1301.0 1212.5 L1302.4 1211.8 L1303.8 1211.1 L1305.2 1210.3 L1306.6 1209.6 L1307.9 1208.9 L1309.3 1208.1 L1310.6 1207.4 L1312.0 1206.6 L1313.3 1205.8 L1314.7 1205.0 L1316.1 1204.2 L1317.4 1203.4 L1318.7 1202.6 L1320.1 1201.8 L1321.4 1200.9 L1322.7 1200.1 L1324.0 1199.2 L1325.3 1198.4 L1326.6 1197.5 L1327.9 1196.6 L1329.2 1195.7 L1330.5 1194.8 L1331.8 1193.9 L1333.0 1193.0 L1334.2 1192.1 L1335.5 1191.1 L1336.7 1190.2 L1337.9 1189.2 L1339.0 1188.3 L1340.2 1187.3 L1341.4 1186.3 L1342.5 1185.3 L1343.7 1184.2 L1344.8 1183.2 L1345.9 1182.1 L1347.0 1181.0 L1348.0 1179.9 L1349.1 1178.8 L1350.1 1177.6 L1351.1 1176.5 L1352.1 1175.3 L1353.1 1174.1 L1354.0 1173.0 L1355.0 1171.8 L1355.9 1170.6 L1356.8 1169.4 L1357.8 1168.2 L1358.7 1167.0 L1359.6 1165.8 L1360.5 1164.6 L1361.4 1163.4 L1362.3 1162.2 L1363.3 1161.0 L1364.2 1159.8 L1365.1 1158.6 L1366.1 1157.4 L1367.0 1156.2 L1367.9 1155.1 L1368.9 1153.9 L1369.8 1152.7 L1370.8 1151.5 L1371.7 1150.3 L1372.7 1149.2 L1373.6 1148.0 L1374.5 1146.8 L1375.5 1145.6 L1376.4 1144.4 L1377.4 1143.3 L1378.3 1142.1 L1379.2 1140.9 L1380.2 1139.7 L1381.1 1138.5 L1382.0 1137.3 L1383.0 1136.2 L1383.9 1134.9 L1384.8 1133.7 L1385.7 1132.5 L1386.6 1131.2 L1387.5 1130.0 L1388.4 1128.7 L1389.3 1127.4 L1390.1 1126.1 L1390.9 1124.8 L1391.7 1123.5 L1392.4 1122.1 L1393.2 1120.8 L1393.9 1119.4 L1394.6 1118.0 L1395.2 1116.6 L1395.9 1115.2 L1396.5 1113.7 L1397.1 1112.3 L1397.7 1110.8 L1398.2 1109.4 L1398.8 1107.9 L1399.3 1106.4 L1399.8 1105.0 L1400.3 1103.5 L1400.9 1102.0 L1401.4 1100.5 L1401.9 1099.0 L1402.4 1097.4 L1402.9 1095.9 L1403.4 1094.4 L1403.9 1093.0 L1404.4 1091.5 L1401.6 1090.5 L1401.1 1092.0 L1400.5 1093.5 L1400.0 1095.0 L1399.5 1096.5 L1399.0 1098.0 L1398.5 1099.5 L1398.0 1101.0 L1397.5 1102.5 L1397.0 1104.0 L1396.5 1105.4 L1395.9 1106.9 L1395.4 1108.3 L1394.9 1109.7 L1394.3 1111.2 L1393.7 1112.6 L1393.1 1114.0 L1392.5 1115.3 L1391.9 1116.7 L1391.2 1118.1 L1390.5 1119.4 L1389.8 1120.7 L1389.1 1122.0 L1388.3 1123.3 L1387.5 1124.5 L1386.7 1125.8 L1385.9 1127.0 L1385.1 1128.2 L1384.2 1129.5 L1383.3 1130.7 L1382.4 1131.9 L1381.5 1133.1 L1380.6 1134.3 L1379.7 1135.5 L1378.7 1136.7 L1377.8 1137.9 L1376.9 1139.0 L1375.9 1140.2 L1375.0 1141.4 L1374.1 1142.6 L1373.1 1143.8 L1372.2 1144.9 L1371.2 1146.1 L1370.3 1147.3 L1369.4 1148.5 L1368.4 1149.7 L1367.5 1150.8 L1366.5 1152.0 L1365.6 1153.2 L1364.6 1154.4 L1363.7 1155.6 L1362.8 1156.7 L1361.8 1157.9 L1360.9 1159.1 L1359.9 1160.3 L1359.0 1161.5 L1358.1 1162.7 L1357.1 1163.9 L1356.2 1165.1 L1355.3 1166.2 L1354.3 1167.4 L1353.4 1168.6 L1352.4 1169.7 L1351.5 1170.9 L1350.5 1172.0 L1349.5 1173.1 L1348.6 1174.3 L1347.6 1175.4 L1346.6 1176.4 L1345.5 1177.5 L1344.5 1178.6 L1343.4 1179.6 L1342.4 1180.6 L1341.3 1181.6 L1340.2 1182.6 L1339.1 1183.6 L1337.9 1184.6 L1336.8 1185.6 L1335.7 1186.5 L1334.5 1187.4 L1333.3 1188.4 L1332.1 1189.3 L1330.9 1190.2 L1329.7 1191.1 L1328.5 1192.0 L1327.2 1192.9 L1325.9 1193.7 L1324.7 1194.6 L1323.4 1195.5 L1322.1 1196.3 L1320.8 1197.1 L1319.5 1198.0 L1318.2 1198.8 L1316.9 1199.6 L1315.6 1200.4 L1314.3 1201.2 L1312.9 1202.0 L1311.6 1202.8 L1310.2 1203.6 L1308.9 1204.3 L1307.6 1205.1 L1306.2 1205.8 L1304.9 1206.5 L1303.6 1207.3 L1302.2 1208.0 L1300.8 1208.7 L1299.4 1209.4 L1298.1 1210.1 L1296.7 1210.8 L1295.3 1211.5 L1294.0 1212.1 L1292.6 1212.8 L1291.2 1213.5 L1289.9 1214.1 L1288.5 1214.8 L1287.1 1215.4 L1285.8 1216.0 L1284.4 1216.6 L1283.0 1217.3 L1281.6 1217.9 L1280.1 1218.5 L1278.7 1219.1 L1277.3 1219.6 L1275.9 1220.2 L1274.4 1220.7 L1273.0 1221.3 L1271.5 1221.8 L1270.0 1222.3 L1268.6 1222.7 L1267.1 1223.2 L1265.6 1223.6 L1264.1 1224.0 L1262.5 1224.4 L1261.0 1224.8 L1259.5 1225.1 L1257.9 1225.4 L1256.4 1225.7 L1254.8 1226.0 L1253.3 1226.2 L1251.7 1226.5 L1250.2 1226.7 L1248.6 1226.9 L1247.1 1227.1 L1245.5 1227.3 L1243.9 1227.4 L1242.3 1227.6 L1240.8 1227.8 L1239.2 1227.9 L1237.7 1228.0 L1236.2 1228.1 L1234.6 1228.2 L1233.1 1228.3 L1231.5 1228.3 L1230.0 1228.4 L1228.5 1228.4 L1227.1 1228.4 L1225.6 1228.3 L1224.2 1228.2 L1222.8 1228.1 L1221.3 1228.0 L1219.9 1227.9 L1218.6 1227.7 L1217.1 1227.5 L1215.7 1227.2 L1214.3 1227.0 L1212.8 1226.7 L1211.4 1226.3 L1210.0 1226.0 L1208.6 1225.6 L1207.2 1225.3 L1205.9 1224.9 L1204.5 1224.5 L1203.1 1224.0 L1201.7 1223.6 L1200.3 1223.1 L1198.9 1222.7 L1197.4 1222.2 L1196.0 1221.7 L1194.6 1221.2 L1193.1 1220.7 L1191.7 1220.2 L1190.3 1219.7 L1188.9 1219.2 L1187.4 1218.7 L1186.0 1218.1 L1184.5 1217.6 L1183.0 1217.0 L1181.5 1216.5 L1180.1 1215.9 L1178.6 1215.4 L1177.1 1214.8 L1175.6 1214.2 L1174.1 1213.6 L1172.6 1213.1 L1171.1 1212.5 L1169.7 1211.9 L1168.2 1211.4 L1166.7 1210.8 L1165.3 1210.2 L1163.8 1209.6 L1162.3 1209.1 L1160.9 1208.5 L1159.4 1207.9 L1158.0 1207.4 L1156.6 1206.8 L1155.1 1206.2 L1153.7 1205.7 L1152.3 1205.1 L1150.8 1204.5 L1149.4 1203.9 L1147.9 1203.4 L1146.5 1202.8 L1145.1 1202.2 L1143.6 1201.6 L1142.2 1201.0 L1140.7 1200.4 L1139.3 1199.9 L1137.9 1199.3 L1136.4 1198.7 L1135.0 1198.1 L1133.5 1197.5 L1132.1 1196.9 L1130.7 1196.3 L1129.2 1195.7 L1127.8 1195.1 L1126.3 1194.5 L1124.9 1193.9 L1123.4 1193.2 L1122.0 1192.6 L1120.5 1192.0 L1119.1 1191.4 L1117.6 1190.7 L1116.1 1190.1 L1114.7 1189.5 L1113.2 1188.9 L1111.8 1188.3 L1110.3 1187.7 L1108.9 1187.1 L1107.4 1186.5 L1106.0 1185.9 L1104.5 1185.4 L1103.0 1184.9 L1101.6 1184.4 L1100.1 1183.9 L1098.6 1183.4 L1097.2 1182.9 L1095.7 1182.5 L1094.2 1182.1 L1092.8 1181.7 L1091.3 1181.3 L1089.9 1181.0 L1088.4 1180.6 L1086.9 1180.3 L1085.5 1180.1 L1084.0 1179.8 L1082.5 1179.6 L1081.0 1179.4 L1079.4 1179.2 L1077.9 1179.1 L1076.3 1178.9 L1074.7 1178.9 L1073.1 1178.8 L1071.6 1178.8 L1070.0 1178.8 L1068.5 1178.8 L1066.9 1178.9 L1065.4 1179.0 L1063.8 1179.1 L1062.3 1179.2 L1060.8 1179.3 L1059.3 1179.5 L1057.8 1179.6 L1056.3 1179.8 L1054.8 1180.0 L1053.4 1180.3 L1051.9 1180.5 L1050.5 1180.7 L1049.1 1181.0 L1047.8 1181.2 L1046.3 1181.5 L1044.9 1181.8 L1043.5 1182.1 L1042.0 1182.4 L1040.5 1182.7 L1039.1 1183.1 L1037.6 1183.4 L1036.1 1183.7 L1034.5 1184.1 L1033.0 1184.5 L1031.5 1184.9 L1029.9 1185.3 L1028.3 1185.7 L1026.8 1186.1 L1025.2 1186.6 L1023.6 1187.0 L1022.0 1187.5 L1020.4 1187.9 L1018.8 1188.4 L1017.2 1188.9 L1015.7 1189.4 L1014.1 1189.8 L1012.6 1190.3 L1011.1 1190.8 L1009.6 1191.3 L1008.1 1191.8 L1006.6 1192.4 L1005.1 1192.9 L1003.6 1193.4 L1002.2 1193.9 L1000.7 1194.5 L999.3 1195.0 L997.9 1195.5 L996.5 1196.1 L995.1 1196.6 L993.7 1197.2 L992.2 1197.8 L990.8 1198.4 L989.4 1198.9 L987.9 1199.5 L986.5 1200.2 L985.0 1200.8 L983.5 1201.4 L982.1 1202.0 L980.6 1202.6 L979.1 1203.3 L977.7 1203.9 L976.2 1204.6 L974.7 1205.2 L973.3 1205.9 L971.8 1206.5 L970.4 1207.2 L968.9 1207.8 L967.5 1208.4 L966.0 1209.1 L964.6 1209.7 L963.2 1210.4 L961.8 1211.0 L960.4 1211.7 L959.0 1212.3 L957.6 1212.9 L956.2 1213.5 L954.9 1214.1 L953.6 1214.7 L952.2 1215.4 L950.8 1216.0 L949.5 1216.6 L948.1 1217.2 L946.7 1217.9 L945.3 1218.5 L943.9 1219.2 L942.5 1219.8 L941.1 1220.5 L939.6 1221.1 L938.2 1221.8 L936.8 1222.5 L935.3 1223.2 L933.9 1223.9 L932.4 1224.6 L931.0 1225.3 L929.5 1226.0 L928.1 1226.7 L926.6 1227.4 L925.2 1228.1 L923.9 1228.8 L922.5 1229.5 L921.1 1230.2 L919.8 1230.9 L918.5 1231.5 L917.2 1232.2 L915.9 1232.8 L914.6 1233.4 L913.3 1234.1 L912.0 1234.7 L910.7 1235.2 L909.4 1235.8 L908.2 1236.4 L906.9 1236.9 L905.6 1237.5 L904.2 1238.0 L902.9 1238.6 L901.5 1239.1 L900.2 1239.6 L898.8 1240.1 L897.4 1240.6 L895.9 1241.0 L894.5 1241.5 L893.0 1242.0 L891.6 1242.4 L890.1 1242.8 L888.6 1243.3 L887.1 1243.7 L885.6 1244.0 L884.1 1244.4 L882.6 1244.8 L881.1 1245.1 L879.6 1245.5 L878.1 1245.8 L876.6 1246.1 L875.1 1246.4 L873.7 1246.7 L872.2 1246.9 L870.8 1247.2 L869.4 1247.4 L867.9 1247.7 L866.5 1247.9 L865.0 1248.2 L863.6 1248.4 L862.1 1248.6 L860.6 1248.8 L859.2 1249.0 L857.7 1249.1 L856.2 1249.3 L854.8 1249.4 L853.3 1249.6 L851.8 1249.7 L850.4 1249.8 L848.9 1249.9 L847.4 1249.9 L845.9 1250.0 L844.5 1250.0 L843.0 1250.1 L841.6 1250.1 L840.1 1250.1 L838.7 1250.0 L837.3 1250.0 L835.8 1250.0 L834.4 1249.9 L833.0 1249.8 L831.6 1249.7 L830.3 1249.6 L828.9 1249.5 L827.5 1249.4 L826.1 1249.3 L824.7 1249.2 L823.3 1249.0 L822.0 1248.9 L820.6 1248.7 L819.2 1248.5 L817.7 1248.3 L816.3 1248.0 L814.9 1247.8 L813.4 1247.5 L811.9 1247.2 L810.4 1246.9 L808.9 1246.6 L807.5 1246.3 L806.0 1246.0 L804.5 1245.7 L803.0 1245.3 L801.5 1245.0 L800.0 1244.6 L798.5 1244.2 L797.0 1243.8 L795.4 1243.5 L793.9 1243.1 L792.4 1242.7 L790.9 1242.3 L789.4 1241.9 L788.0 1241.5 L786.5 1241.1 L785.0 1240.6 L783.5 1240.2 L781.9 1239.8 L780.4 1239.3 L778.8 1238.9 L777.2 1238.4 L775.6 1237.9 L774.1 1237.5 L772.5 1237.0 L770.9 1236.5 L769.4 1236.1 L767.8 1235.6 L766.3 1235.1 L764.8 1234.6 L763.3 1234.1 L761.8 1233.7 L760.4 1233.2 L758.9 1232.7 L757.4 1232.2 L756.0 1231.6 L754.5 1231.1 L753.1 1230.6 L751.6 1230.0 L750.2 1229.5 L748.8 1228.9 L747.4 1228.3 L746.0 1227.7 L744.6 1227.1 L743.2 1226.5 L741.9 1225.9 L740.5 1225.3 L739.1 1224.6 L737.8 1223.9 L736.5 1223.3 L735.1 1222.6 L733.9 1221.9 L732.6 1221.2 L731.3 1220.5 L730.0 1219.8 L728.8 1219.1 L727.5 1218.3 L726.3 1217.6 L725.0 1216.9 L723.8 1216.1 L722.5 1215.3 L721.2 1214.6 L719.9 1213.8 L718.6 1213.0 L717.3 1212.2 L716.0 1211.4 L714.7 1210.5 L713.3 1209.7 L712.0 1208.9 L710.7 1208.0 L709.4 1207.2 L708.1 1206.3 L706.8 1205.5 L705.4 1204.6 L704.1 1203.7 L702.8 1202.9 L701.5 1202.0 L700.3 1201.1 L699.0 1200.3 L697.8 1199.4 L696.5 1198.5 L695.2 1197.6 L694.0 1196.7 L692.8 1195.8 L691.5 1194.9 L690.3 1193.9 L689.1 1193.0 L687.9 1192.1 L686.7 1191.1 L685.5 1190.2 L684.3 1189.2 L683.2 1188.3 L682.0 1187.3 L680.9 1186.3 L679.7 1185.4 L678.6 1184.4 L677.5 1183.4 L676.4 1182.4 L675.3 1181.4 L674.2 1180.4 L673.2 1179.4 L672.1 1178.4 L671.1 1177.4 L670.0 1176.4 L669.0 1175.3 L668.0 1174.3 L667.0 1173.3 L666.0 1172.2 L665.0 1171.2 L664.0 1170.1 L663.0 1169.0 L662.0 1167.9 L661.0 1166.8 L660.0 1165.7 L659.0 1164.6 L658.0 1163.5 L657.1 1162.3 L656.1 1161.2 L655.1 1160.0 L654.2 1158.9 L653.2 1157.7 L652.3 1156.5 L651.3 1155.3 L650.4 1154.1 L649.4 1152.9 L648.4 1151.7 L647.5 1150.4 L646.5 1149.2 L645.6 1147.9 L644.6 1146.7 L643.7 1145.4 L642.8 1144.2 L641.8 1142.9 L640.9 1141.6 L640.0 1140.3 L639.0 1139.1 L638.1 1137.8 L637.2 1136.5 L636.3 1135.2 L635.4 1134.0 L634.5 1132.7 L633.6 1131.5 L632.7 1130.2 L631.8 1128.9 L631.0 1127.7 L630.1 1126.4 L629.3 1125.2 L628.5 1123.9 L627.7 1122.6 L626.9 1121.3 L626.1 1120.1 L625.4 1118.8 L624.7 1117.5 L624.0 1116.2 L623.3 1114.8 L622.6 1113.5 L622.0 1112.2 L621.4 1110.8 L620.8 1109.4 L620.2 1108.1 L619.6 1106.6 L619.0 1105.3 L618.4 1103.9 L617.9 1102.5 L617.3 1101.0 L616.8 1099.6 L616.3 1098.2 L615.7 1096.7 L615.2 1095.3Z"/><circle cx="613.3" cy="1096.0" r="2.00"/><circle cx="1403.0" cy="1091.0" r="1.50"/><path d="M552.2 1021.5 L552.3 1022.9 L552.5 1024.3 L552.6 1025.7 L552.8 1027.2 L553.0 1028.8 L553.2 1030.3 L553.4 1031.8 L553.6 1033.3 L553.8 1034.7 L554.1 1036.3 L554.3 1037.8 L554.5 1039.4 L554.8 1040.9 L555.1 1042.5 L555.4 1044.1 L555.7 1045.7 L556.0 1047.2 L556.3 1048.8 L556.6 1050.3 L556.9 1051.9 L557.2 1053.5 L557.6 1055.1 L557.9 1056.6 L558.2 1058.2 L558.6 1059.8 L559.0 1061.3 L559.3 1062.9 L559.7 1064.4 L560.1 1065.9 L560.4 1067.4 L560.8 1068.9 L561.2 1070.4 L561.6 1071.9 L562.0 1073.4 L562.4 1074.9 L562.8 1076.4 L563.3 1077.9 L563.7 1079.4 L564.2 1080.9 L564.6 1082.3 L565.1 1083.8 L565.5 1085.3 L566.0 1086.8 L566.5 1088.2 L567.0 1089.7 L567.5 1091.1 L568.0 1092.5 L568.5 1094.0 L569.0 1095.4 L569.6 1096.8 L570.2 1098.3 L570.7 1099.6 L571.3 1101.0 L571.9 1102.4 L572.5 1103.7 L573.2 1105.1 L573.8 1106.4 L574.5 1107.8 L575.2 1109.1 L575.9 1110.4 L576.6 1111.8 L577.3 1113.1 L578.0 1114.4 L578.7 1115.7 L579.4 1117.0 L580.2 1118.3 L580.9 1119.7 L581.7 1121.0 L582.4 1122.3 L583.2 1123.6 L584.0 1125.0 L584.8 1126.3 L585.6 1127.7 L586.3 1129.1 L587.1 1130.4 L587.9 1131.7 L588.7 1133.1 L589.5 1134.4 L590.4 1135.8 L591.2 1137.1 L592.0 1138.4 L592.9 1139.8 L593.7 1141.1 L594.5 1142.4 L595.4 1143.7 L596.3 1144.9 L597.1 1146.2 L598.0 1147.5 L598.9 1148.8 L599.7 1150.0 L600.6 1151.3 L601.5 1152.5 L602.4 1153.8 L603.3 1155.0 L604.2 1156.3 L605.1 1157.5 L606.0 1158.8 L606.9 1160.0 L607.9 1161.3 L608.8 1162.5 L609.7 1163.8 L610.7 1165.1 L611.6 1166.3 L612.5 1167.6 L613.5 1168.8 L614.4 1170.1 L615.4 1171.3 L616.3 1172.6 L617.3 1173.8 L618.2 1175.1 L619.2 1176.3 L620.2 1177.6 L621.2 1178.8 L622.2 1180.0 L623.2 1181.3 L624.2 1182.5 L625.3 1183.7 L626.3 1185.0 L627.3 1186.2 L628.4 1187.4 L629.5 1188.6 L630.5 1189.8 L631.6 1190.9 L632.7 1192.1 L633.8 1193.3 L634.9 1194.4 L636.0 1195.6 L637.1 1196.7 L638.3 1197.9 L639.4 1199.0 L640.5 1200.1 L641.6 1201.2 L642.8 1202.3 L643.9 1203.4 L645.1 1204.4 L646.2 1205.5 L647.3 1206.5 L648.5 1207.5 L649.6 1208.6 L650.8 1209.6 L652.0 1210.6 L653.1 1211.6 L654.3 1212.5 L655.4 1213.5 L656.6 1214.5 L657.8 1215.4 L658.9 1216.4 L660.1 1217.3 L661.3 1218.3 L662.5 1219.2 L663.6 1220.2 L664.8 1221.1 L665.9 1222.0 L667.1 1222.9 L668.2 1223.8 L669.3 1224.7 L670.5 1225.6 L671.6 1226.5 L672.7 1227.4 L673.8 1228.3 L675.0 1229.2 L676.1 1230.1 L677.3 1231.0 L678.5 1232.0 L679.7 1232.9 L680.9 1233.9 L682.2 1234.8 L683.4 1235.8 L684.6 1236.7 L685.9 1237.6 L687.1 1238.5 L688.4 1239.4 L689.6 1240.4 L690.9 1241.3 L692.1 1242.2 L693.4 1243.1 L694.6 1244.0 L695.9 1244.9 L697.1 1245.7 L698.4 1246.6 L699.6 1247.5 L700.8 1248.3 L702.0 1249.1 L703.2 1250.0 L704.4 1250.8 L705.7 1251.7 L706.9 1252.6 L708.2 1253.4 L709.5 1254.3 L710.8 1255.2 L712.1 1256.1 L713.5 1257.0 L714.8 1257.9 L716.1 1258.7 L717.5 1259.6 L718.8 1260.5 L720.2 1261.4 L721.5 1262.2 L722.8 1263.1 L724.2 1263.9 L725.5 1264.7 L726.9 1265.6 L728.2 1266.4 L729.6 1267.2 L731.0 1268.0 L732.3 1268.7 L733.7 1269.5 L735.1 1270.2 L736.5 1271.0 L737.9 1271.7 L739.3 1272.4 L740.7 1273.1 L742.1 1273.8 L743.6 1274.5 L745.0 1275.2 L746.4 1275.8 L747.9 1276.5 L749.4 1277.1 L750.8 1277.7 L752.3 1278.3 L753.8 1278.9 L755.2 1279.5 L756.7 1280.1 L758.1 1280.6 L759.6 1281.2 L761.0 1281.7 L762.4 1282.3 L763.9 1282.8 L765.3 1283.3 L766.7 1283.8 L768.1 1284.3 L769.5 1284.8 L770.9 1285.3 L772.3 1285.8 L773.7 1286.3 L775.2 1286.9 L776.6 1287.4 L778.0 1287.8 L779.4 1288.3 L780.8 1288.8 L782.2 1289.3 L783.6 1289.8 L785.0 1290.3 L786.4 1290.8 L787.8 1291.3 L789.2 1291.8 L790.6 1292.2 L792.0 1292.7 L793.4 1293.2 L794.8 1293.6 L796.2 1294.1 L797.6 1294.5 L799.0 1295.0 L800.4 1295.4 L801.9 1295.8 L803.3 1296.3 L804.8 1296.7 L806.2 1297.1 L807.7 1297.5 L809.2 1297.9 L810.6 1298.3 L812.1 1298.7 L813.6 1299.0 L815.0 1299.4 L816.5 1299.8 L818.0 1300.1 L819.5 1300.5 L821.0 1300.8 L822.4 1301.1 L823.9 1301.5 L825.4 1301.8 L826.9 1302.1 L828.4 1302.4 L829.9 1302.8 L831.3 1303.1 L832.8 1303.4 L834.4 1303.7 L835.9 1304.0 L837.4 1304.3 L839.0 1304.6 L840.5 1304.9 L842.1 1305.2 L843.7 1305.4 L845.2 1305.7 L846.8 1305.9 L848.4 1306.2 L850.0 1306.4 L851.6 1306.6 L853.1 1306.9 L854.7 1307.0 L856.3 1307.2 L857.9 1307.4 L859.5 1307.5 L861.0 1307.7 L862.6 1307.8 L864.2 1307.9 L865.7 1307.9 L867.3 1308.0 L868.8 1308.0 L870.4 1308.1 L871.9 1308.1 L873.5 1308.0 L875.0 1308.0 L876.5 1308.0 L878.0 1307.9 L879.5 1307.8 L881.1 1307.7 L882.6 1307.6 L884.1 1307.5 L885.6 1307.3 L887.1 1307.2 L888.6 1307.0 L890.1 1306.9 L891.6 1306.7 L893.1 1306.5 L894.7 1306.3 L896.2 1306.1 L897.7 1305.9 L899.2 1305.8 L900.7 1305.6 L902.2 1305.4 L903.7 1305.2 L905.2 1305.0 L906.7 1304.8 L908.2 1304.6 L909.7 1304.4 L911.2 1304.2 L912.7 1304.0 L914.1 1303.8 L915.6 1303.6 L917.1 1303.4 L918.6 1303.3 L918.2 1299.3 L916.7 1299.5 L915.2 1299.6 L913.7 1299.8 L912.2 1299.9 L910.6 1300.1 L909.1 1300.3 L907.6 1300.5 L906.1 1300.7 L904.6 1300.9 L903.1 1301.0 L901.6 1301.2 L900.1 1301.4 L898.6 1301.6 L897.1 1301.8 L895.6 1302.0 L894.1 1302.1 L892.7 1302.3 L891.2 1302.5 L889.7 1302.6 L888.2 1302.8 L886.7 1302.9 L885.2 1303.0 L883.7 1303.2 L882.3 1303.3 L880.8 1303.4 L879.3 1303.4 L877.8 1303.5 L876.4 1303.6 L874.9 1303.6 L873.4 1303.6 L871.9 1303.6 L870.4 1303.6 L868.9 1303.6 L867.4 1303.5 L865.9 1303.4 L864.4 1303.3 L862.9 1303.2 L861.4 1303.1 L859.9 1303.0 L858.4 1302.8 L856.8 1302.6 L855.3 1302.5 L853.7 1302.3 L852.2 1302.0 L850.7 1301.8 L849.1 1301.6 L847.6 1301.3 L846.0 1301.0 L844.5 1300.8 L842.9 1300.5 L841.4 1300.2 L839.9 1299.9 L838.4 1299.6 L836.8 1299.3 L835.3 1299.0 L833.8 1298.7 L832.4 1298.3 L830.9 1298.0 L829.4 1297.7 L828.0 1297.4 L826.5 1297.0 L825.0 1296.7 L823.5 1296.3 L822.1 1296.0 L820.6 1295.6 L819.1 1295.3 L817.7 1294.9 L816.2 1294.6 L814.8 1294.2 L813.3 1293.8 L811.9 1293.4 L810.4 1293.1 L809.0 1292.7 L807.6 1292.3 L806.1 1291.9 L804.7 1291.5 L803.3 1291.1 L801.9 1290.6 L800.5 1290.2 L799.1 1289.8 L797.7 1289.3 L796.4 1288.9 L795.0 1288.4 L793.6 1288.0 L792.2 1287.5 L790.8 1287.0 L789.4 1286.6 L788.0 1286.1 L786.6 1285.6 L785.2 1285.1 L783.8 1284.6 L782.4 1284.1 L781.0 1283.6 L779.6 1283.1 L778.2 1282.6 L776.8 1282.1 L775.4 1281.6 L774.0 1281.1 L772.6 1280.6 L771.2 1280.1 L769.8 1279.6 L768.4 1279.1 L767.0 1278.6 L765.6 1278.1 L764.2 1277.6 L762.8 1277.1 L761.3 1276.5 L759.9 1276.0 L758.5 1275.4 L757.1 1274.9 L755.6 1274.3 L754.2 1273.7 L752.8 1273.1 L751.3 1272.5 L749.9 1271.9 L748.5 1271.3 L747.1 1270.6 L745.7 1270.0 L744.3 1269.3 L742.9 1268.6 L741.5 1268.0 L740.2 1267.3 L738.8 1266.6 L737.5 1265.8 L736.1 1265.1 L734.8 1264.4 L733.4 1263.6 L732.1 1262.8 L730.8 1262.1 L729.5 1261.3 L728.1 1260.5 L726.8 1259.7 L725.5 1258.8 L724.2 1258.0 L722.9 1257.2 L721.5 1256.3 L720.2 1255.4 L718.9 1254.6 L717.5 1253.7 L716.2 1252.8 L714.9 1251.9 L713.6 1251.1 L712.3 1250.2 L711.0 1249.3 L709.8 1248.4 L708.5 1247.6 L707.3 1246.7 L706.1 1245.9 L704.9 1245.0 L703.7 1244.2 L702.5 1243.4 L701.2 1242.5 L700.0 1241.6 L698.8 1240.8 L697.5 1239.9 L696.3 1239.0 L695.0 1238.1 L693.8 1237.2 L692.5 1236.3 L691.3 1235.4 L690.1 1234.5 L688.9 1233.6 L687.6 1232.7 L686.4 1231.8 L685.2 1230.8 L684.0 1229.9 L682.7 1229.0 L681.5 1228.0 L680.4 1227.1 L679.2 1226.2 L678.1 1225.3 L676.9 1224.4 L675.8 1223.5 L674.7 1222.6 L673.6 1221.7 L672.4 1220.8 L671.3 1219.9 L670.2 1219.0 L669.0 1218.1 L667.9 1217.2 L666.7 1216.2 L665.6 1215.3 L664.4 1214.4 L663.3 1213.5 L662.1 1212.5 L660.9 1211.6 L659.8 1210.6 L658.6 1209.7 L657.5 1208.7 L656.3 1207.7 L655.2 1206.8 L654.1 1205.8 L652.9 1204.8 L651.8 1203.8 L650.7 1202.8 L649.6 1201.8 L648.5 1200.7 L647.3 1199.7 L646.2 1198.7 L645.1 1197.6 L644.0 1196.5 L642.9 1195.4 L641.8 1194.3 L640.7 1193.2 L639.6 1192.1 L638.5 1191.0 L637.4 1189.8 L636.4 1188.7 L635.3 1187.6 L634.2 1186.4 L633.2 1185.2 L632.2 1184.1 L631.1 1182.9 L630.1 1181.7 L629.1 1180.5 L628.1 1179.3 L627.1 1178.1 L626.1 1176.9 L625.1 1175.7 L624.1 1174.4 L623.2 1173.2 L622.2 1172.0 L621.2 1170.8 L620.3 1169.5 L619.4 1168.3 L618.4 1167.1 L617.5 1165.8 L616.5 1164.6 L615.6 1163.3 L614.7 1162.1 L613.7 1160.8 L612.8 1159.6 L611.9 1158.3 L611.0 1157.1 L610.1 1155.8 L609.2 1154.6 L608.3 1153.4 L607.4 1152.1 L606.5 1150.9 L605.6 1149.6 L604.7 1148.4 L603.8 1147.2 L603.0 1145.9 L602.1 1144.7 L601.3 1143.4 L600.4 1142.2 L599.6 1140.9 L598.7 1139.6 L597.9 1138.4 L597.1 1137.1 L596.3 1135.8 L595.4 1134.5 L594.6 1133.2 L593.8 1131.8 L593.0 1130.5 L592.2 1129.2 L591.4 1127.9 L590.7 1126.5 L589.9 1125.2 L589.1 1123.8 L588.3 1122.5 L587.5 1121.2 L586.8 1119.8 L586.0 1118.5 L585.3 1117.2 L584.5 1115.9 L583.8 1114.6 L583.1 1113.3 L582.4 1112.0 L581.7 1110.7 L581.0 1109.4 L580.3 1108.1 L579.6 1106.8 L579.0 1105.5 L578.3 1104.2 L577.7 1102.9 L577.1 1101.6 L576.5 1100.3 L575.9 1099.0 L575.3 1097.7 L574.8 1096.4 L574.2 1095.0 L573.7 1093.6 L573.2 1092.3 L572.7 1090.8 L572.2 1089.4 L571.7 1088.0 L571.2 1086.6 L570.8 1085.2 L570.3 1083.8 L569.8 1082.3 L569.4 1080.9 L568.9 1079.4 L568.5 1078.0 L568.1 1076.5 L567.7 1075.0 L567.2 1073.5 L566.8 1072.0 L566.4 1070.6 L566.0 1069.1 L565.7 1067.6 L565.3 1066.2 L564.9 1064.7 L564.6 1063.2 L564.2 1061.7 L563.8 1060.2 L563.5 1058.6 L563.1 1057.1 L562.8 1055.6 L562.4 1054.0 L562.1 1052.5 L561.8 1050.9 L561.5 1049.4 L561.2 1047.8 L560.9 1046.3 L560.6 1044.8 L560.3 1043.2 L560.0 1041.7 L559.7 1040.1 L559.5 1038.5 L559.2 1037.0 L559.0 1035.5 L558.8 1034.0 L558.6 1032.5 L558.3 1031.0 L558.1 1029.6 L557.9 1028.1 L557.7 1026.6 L557.6 1025.2 L557.4 1023.8 L557.3 1022.5 L557.2 1021.1Z"/><circle cx="554.7" cy="1021.3" r="2.50"/><circle cx="918.4" cy="1301.3" r="2.00"/><path d="M916.4 1301.2 L916.6 1302.9 L918.0 1304.5 L919.5 1305.5 L920.6 1306.3 L921.6 1307.0 L922.7 1307.8 L924.0 1308.6 L925.4 1309.4 L926.3 1309.9 L927.4 1310.5 L928.5 1311.1 L929.6 1311.8 L930.8 1312.4 L932.0 1313.1 L933.3 1313.8 L934.6 1314.5 L935.9 1315.3 L937.3 1316.0 L938.7 1316.8 L940.2 1317.5 L941.7 1318.3 L943.2 1319.0 L944.7 1319.8 L946.3 1320.5 L947.9 1321.3 L949.5 1322.0 L951.1 1322.7 L952.8 1323.4 L954.4 1324.1 L956.1 1324.8 L957.8 1325.4 L959.5 1326.0 L961.1 1326.6 L962.7 1327.1 L964.2 1327.6 L965.7 1328.1 L967.2 1328.5 L968.6 1328.9 L970.0 1329.3 L971.3 1329.6 L972.7 1330.0 L974.1 1330.4 L975.4 1330.7 L976.9 1331.1 L978.3 1331.4 L979.7 1331.8 L981.2 1332.2 L982.7 1332.5 L984.1 1332.8 L985.6 1333.2 L987.2 1333.5 L988.7 1333.8 L990.2 1334.2 L991.7 1334.5 L993.3 1334.8 L994.8 1335.1 L996.4 1335.3 L998.0 1335.6 L999.5 1335.9 L1001.1 1336.2 L1002.7 1336.4 L1004.3 1336.6 L1005.9 1336.9 L1007.4 1337.1 L1009.0 1337.3 L1010.6 1337.5 L1012.2 1337.6 L1013.8 1337.8 L1015.4 1337.9 L1016.9 1338.0 L1018.5 1338.2 L1020.1 1338.3 L1021.6 1338.3 L1023.2 1338.4 L1024.7 1338.4 L1026.3 1338.4 L1027.8 1338.5 L1029.3 1338.4 L1030.9 1338.4 L1032.4 1338.3 L1034.0 1338.3 L1035.5 1338.2 L1037.1 1338.1 L1038.6 1337.9 L1040.2 1337.8 L1041.7 1337.6 L1043.3 1337.4 L1044.9 1337.2 L1046.5 1337.0 L1048.1 1336.8 L1049.6 1336.6 L1051.2 1336.3 L1052.8 1336.0 L1054.4 1335.8 L1056.0 1335.5 L1057.5 1335.2 L1059.1 1334.8 L1060.7 1334.5 L1062.3 1334.2 L1063.8 1333.8 L1065.4 1333.5 L1066.9 1333.1 L1068.5 1332.8 L1070.0 1332.4 L1071.5 1332.0 L1073.0 1331.6 L1074.5 1331.3 L1076.0 1330.9 L1077.5 1330.5 L1078.9 1330.1 L1080.4 1329.7 L1081.8 1329.3 L1083.2 1328.9 L1084.6 1328.4 L1086.0 1328.0 L1087.3 1327.6 L1088.7 1327.2 L1090.1 1326.8 L1091.5 1326.4 L1092.9 1325.9 L1094.4 1325.4 L1095.9 1324.9 L1097.5 1324.3 L1099.0 1323.7 L1100.7 1323.1 L1102.3 1322.5 L1103.9 1321.8 L1105.5 1321.2 L1107.1 1320.5 L1108.7 1319.8 L1110.2 1319.0 L1111.7 1318.3 L1113.2 1317.6 L1114.6 1316.9 L1116.1 1316.1 L1117.5 1315.4 L1118.9 1314.6 L1120.2 1313.9 L1121.6 1313.1 L1122.9 1312.4 L1124.2 1311.7 L1125.5 1310.9 L1126.7 1310.2 L1128.0 1309.5 L1129.2 1308.8 L1130.3 1308.1 L1131.5 1307.4 L1132.6 1306.7 L1133.8 1306.0 L1135.1 1305.2 L1136.4 1304.5 L1137.7 1303.6 L1139.1 1302.8 L1140.5 1301.9 L1141.9 1301.0 L1143.3 1300.0 L1144.7 1299.0 L1146.1 1298.0 L1147.3 1297.1 L1148.5 1296.1 L1149.7 1295.2 L1150.8 1294.3 L1151.9 1293.4 L1153.0 1292.5 L1154.1 1291.6 L1155.2 1290.7 L1156.2 1289.8 L1157.3 1288.9 L1158.5 1288.0 L1156.1 1284.8 L1154.9 1285.8 L1153.7 1286.7 L1152.6 1287.6 L1151.5 1288.5 L1150.4 1289.4 L1149.4 1290.3 L1148.3 1291.2 L1147.2 1292.1 L1146.0 1293.0 L1144.9 1293.9 L1143.7 1294.8 L1142.4 1295.7 L1141.0 1296.7 L1139.7 1297.6 L1138.3 1298.5 L1137.0 1299.4 L1135.6 1300.2 L1134.3 1301.0 L1133.0 1301.8 L1131.8 1302.6 L1130.6 1303.3 L1129.5 1304.0 L1128.3 1304.6 L1127.1 1305.3 L1125.9 1306.0 L1124.7 1306.7 L1123.5 1307.5 L1122.2 1308.2 L1120.9 1308.9 L1119.6 1309.7 L1118.3 1310.4 L1117.0 1311.1 L1115.6 1311.8 L1114.2 1312.6 L1112.8 1313.3 L1111.4 1314.0 L1109.9 1314.7 L1108.5 1315.4 L1107.0 1316.1 L1105.5 1316.8 L1103.9 1317.5 L1102.4 1318.1 L1100.8 1318.8 L1099.2 1319.4 L1097.6 1320.0 L1096.1 1320.6 L1094.6 1321.1 L1093.1 1321.6 L1091.7 1322.1 L1090.3 1322.5 L1088.9 1323.0 L1087.5 1323.4 L1086.2 1323.8 L1084.8 1324.2 L1083.5 1324.6 L1082.1 1325.0 L1080.7 1325.4 L1079.3 1325.8 L1077.9 1326.2 L1076.4 1326.6 L1075.0 1327.0 L1073.5 1327.4 L1072.0 1327.8 L1070.5 1328.1 L1069.0 1328.5 L1067.5 1328.9 L1066.0 1329.2 L1064.5 1329.6 L1063.0 1329.9 L1061.4 1330.3 L1059.9 1330.6 L1058.3 1330.9 L1056.8 1331.2 L1055.2 1331.5 L1053.7 1331.8 L1052.1 1332.1 L1050.6 1332.4 L1049.0 1332.6 L1047.5 1332.8 L1045.9 1333.1 L1044.4 1333.3 L1042.8 1333.5 L1041.3 1333.6 L1039.8 1333.8 L1038.3 1333.9 L1036.7 1334.1 L1035.2 1334.2 L1033.7 1334.3 L1032.2 1334.3 L1030.8 1334.4 L1029.3 1334.4 L1027.8 1334.5 L1026.3 1334.4 L1024.8 1334.4 L1023.3 1334.4 L1021.8 1334.3 L1020.3 1334.3 L1018.8 1334.2 L1017.2 1334.1 L1015.7 1333.9 L1014.1 1333.8 L1012.6 1333.6 L1011.1 1333.5 L1009.5 1333.3 L1008.0 1333.1 L1006.4 1332.9 L1004.8 1332.7 L1003.3 1332.4 L1001.7 1332.2 L1000.2 1331.9 L998.7 1331.7 L997.1 1331.4 L995.6 1331.1 L994.0 1330.8 L992.5 1330.5 L991.0 1330.2 L989.5 1329.9 L988.0 1329.6 L986.5 1329.3 L985.0 1328.9 L983.6 1328.6 L982.1 1328.3 L980.7 1327.9 L979.2 1327.6 L977.8 1327.2 L976.4 1326.9 L975.1 1326.5 L973.7 1326.1 L972.4 1325.8 L971.0 1325.4 L969.7 1325.0 L968.3 1324.6 L966.9 1324.2 L965.4 1323.8 L963.9 1323.3 L962.4 1322.8 L960.8 1322.3 L959.2 1321.7 L957.6 1321.1 L955.9 1320.4 L954.3 1319.7 L952.7 1319.1 L951.1 1318.4 L949.5 1317.7 L948.0 1316.9 L946.5 1316.2 L944.9 1315.5 L943.5 1314.7 L942.0 1314.0 L940.6 1313.2 L939.2 1312.5 L937.8 1311.8 L936.5 1311.0 L935.2 1310.3 L934.0 1309.6 L932.7 1308.9 L931.6 1308.3 L930.4 1307.6 L929.4 1307.0 L928.3 1306.4 L927.3 1305.9 L926.1 1305.2 L924.9 1304.5 L923.9 1303.8 L922.9 1303.0 L921.8 1302.3 L920.7 1301.4 L920.1 1300.9 L920.4 1301.4Z"/><circle cx="918.4" cy="1301.3" r="2.00"/><circle cx="1157.3" cy="1286.4" r="2.00"/><path d="M1157.9 1288.3 L1159.4 1287.8 L1160.9 1287.4 L1162.3 1286.9 L1163.8 1286.5 L1165.3 1286.0 L1166.8 1285.6 L1168.2 1285.1 L1169.7 1284.7 L1171.2 1284.2 L1172.7 1283.8 L1174.2 1283.3 L1175.6 1282.9 L1177.1 1282.4 L1178.6 1282.0 L1180.1 1281.5 L1181.6 1281.1 L1183.0 1280.6 L1184.5 1280.2 L1186.0 1279.7 L1187.5 1279.2 L1189.0 1278.7 L1190.4 1278.3 L1191.9 1277.8 L1193.4 1277.3 L1194.9 1276.8 L1196.4 1276.3 L1197.8 1275.8 L1199.3 1275.3 L1200.8 1274.8 L1202.2 1274.3 L1203.7 1273.7 L1205.2 1273.2 L1206.6 1272.6 L1208.1 1272.1 L1209.5 1271.5 L1211.0 1270.9 L1212.5 1270.4 L1213.9 1269.8 L1215.4 1269.2 L1216.8 1268.7 L1218.3 1268.1 L1219.7 1267.5 L1221.2 1266.9 L1222.6 1266.3 L1224.0 1265.7 L1225.5 1265.1 L1226.9 1264.6 L1228.3 1264.0 L1229.7 1263.4 L1231.1 1262.8 L1232.6 1262.3 L1234.0 1261.7 L1235.4 1261.1 L1236.8 1260.6 L1238.2 1260.0 L1239.6 1259.4 L1241.1 1258.9 L1242.5 1258.3 L1244.0 1257.8 L1245.4 1257.2 L1246.9 1256.6 L1248.3 1256.1 L1249.8 1255.5 L1251.3 1255.0 L1252.8 1254.4 L1254.2 1253.9 L1255.7 1253.3 L1257.2 1252.8 L1258.7 1252.2 L1260.2 1251.7 L1261.6 1251.1 L1263.1 1250.6 L1264.6 1250.1 L1266.0 1249.5 L1267.4 1249.0 L1268.8 1248.5 L1270.2 1248.0 L1271.6 1247.5 L1273.0 1246.9 L1274.4 1246.4 L1275.9 1245.8 L1277.3 1245.3 L1278.7 1244.7 L1280.2 1244.1 L1281.6 1243.6 L1283.1 1243.0 L1284.5 1242.4 L1285.9 1241.8 L1287.4 1241.2 L1288.8 1240.6 L1290.2 1240.0 L1291.7 1239.4 L1293.1 1238.7 L1294.6 1238.1 L1296.0 1237.4 L1297.5 1236.8 L1298.9 1236.1 L1300.3 1235.5 L1301.7 1234.8 L1303.0 1234.2 L1304.4 1233.5 L1305.8 1232.8 L1307.2 1232.1 L1308.6 1231.4 L1309.9 1230.7 L1311.3 1230.0 L1312.7 1229.3 L1314.1 1228.6 L1315.4 1227.8 L1316.8 1227.1 L1318.2 1226.3 L1319.5 1225.5 L1320.9 1224.7 L1322.2 1223.9 L1323.6 1223.1 L1324.9 1222.2 L1326.2 1221.4 L1327.5 1220.5 L1328.8 1219.6 L1330.1 1218.6 L1331.3 1217.7 L1332.5 1216.7 L1333.8 1215.7 L1335.0 1214.7 L1336.2 1213.7 L1337.4 1212.6 L1338.5 1211.5 L1339.7 1210.4 L1340.8 1209.3 L1341.9 1208.2 L1343.1 1207.1 L1344.2 1205.9 L1345.3 1204.8 L1346.4 1203.6 L1347.4 1202.5 L1348.5 1201.3 L1349.6 1200.2 L1350.6 1199.0 L1351.7 1197.8 L1352.7 1196.6 L1353.8 1195.5 L1354.8 1194.3 L1355.8 1193.1 L1356.9 1191.9 L1357.9 1190.8 L1358.9 1189.6 L1359.9 1188.4 L1360.9 1187.2 L1361.9 1186.0 L1362.9 1184.8 L1363.9 1183.5 L1364.9 1182.3 L1365.9 1181.1 L1366.9 1179.9 L1367.9 1178.6 L1368.9 1177.4 L1369.9 1176.1 L1370.9 1174.9 L1371.8 1173.6 L1372.8 1172.3 L1373.8 1171.0 L1374.7 1169.8 L1375.7 1168.5 L1376.6 1167.2 L1377.6 1165.9 L1378.5 1164.6 L1379.5 1163.3 L1380.4 1162.0 L1381.3 1160.7 L1382.2 1159.4 L1383.2 1158.2 L1384.1 1156.9 L1385.0 1155.6 L1385.9 1154.3 L1386.8 1153.0 L1387.7 1151.7 L1388.6 1150.4 L1389.5 1149.1 L1390.4 1147.8 L1391.3 1146.5 L1392.2 1145.2 L1393.0 1143.9 L1393.9 1142.6 L1394.8 1141.3 L1395.7 1140.0 L1396.5 1138.8 L1397.4 1137.5 L1398.2 1136.2 L1399.1 1134.9 L1399.9 1133.7 L1400.8 1132.4 L1401.6 1131.1 L1402.4 1129.9 L1403.3 1128.6 L1404.1 1127.4 L1404.9 1126.1 L1405.8 1124.9 L1406.6 1123.7 L1407.5 1122.4 L1408.3 1121.2 L1409.2 1120.0 L1410.1 1118.7 L1410.9 1117.5 L1411.8 1116.2 L1412.7 1115.0 L1413.6 1113.8 L1414.5 1112.5 L1415.3 1111.3 L1416.2 1110.0 L1417.1 1108.7 L1417.9 1107.4 L1418.8 1106.1 L1419.6 1104.8 L1420.4 1103.5 L1421.2 1102.2 L1422.0 1100.9 L1422.8 1099.6 L1423.5 1098.2 L1424.2 1096.8 L1424.9 1095.5 L1425.6 1094.0 L1426.3 1092.6 L1427.0 1091.2 L1427.6 1089.8 L1428.2 1088.3 L1428.8 1086.9 L1429.4 1085.4 L1430.0 1084.0 L1430.6 1082.5 L1431.2 1081.1 L1431.7 1079.6 L1432.2 1078.1 L1432.8 1076.7 L1433.3 1075.2 L1433.8 1073.7 L1434.3 1072.2 L1434.8 1070.7 L1435.3 1069.2 L1435.8 1067.7 L1436.3 1066.2 L1436.7 1064.7 L1437.2 1063.2 L1437.6 1061.7 L1438.1 1060.1 L1438.5 1058.6 L1438.9 1057.0 L1439.3 1055.5 L1439.7 1054.0 L1440.2 1052.4 L1440.6 1050.9 L1441.0 1049.3 L1441.3 1047.7 L1441.7 1046.2 L1442.1 1044.6 L1442.4 1043.0 L1442.8 1041.5 L1443.1 1039.9 L1443.4 1038.3 L1443.7 1036.7 L1444.0 1035.1 L1444.3 1033.5 L1444.6 1031.9 L1444.8 1030.3 L1445.0 1028.6 L1445.3 1027.0 L1445.4 1025.4 L1445.6 1023.8 L1445.8 1022.1 L1446.0 1020.5 L1446.1 1018.9 L1446.2 1017.3 L1446.3 1015.7 L1446.5 1014.1 L1446.5 1012.5 L1446.6 1010.9 L1446.7 1009.3 L1446.7 1007.7 L1446.7 1006.1 L1446.7 1004.6 L1446.7 1003.1 L1446.7 1001.6 L1446.7 1000.1 L1446.6 998.6 L1446.6 997.0 L1446.5 995.4 L1446.3 993.9 L1446.2 992.5 L1446.0 991.1 L1445.9 989.7 L1439.9 990.3 L1440.0 991.7 L1440.2 993.1 L1440.3 994.5 L1440.5 995.8 L1440.6 997.3 L1440.6 998.7 L1440.7 1000.2 L1440.7 1001.7 L1440.7 1003.2 L1440.7 1004.6 L1440.7 1006.1 L1440.7 1007.6 L1440.7 1009.1 L1440.6 1010.6 L1440.6 1012.2 L1440.5 1013.8 L1440.4 1015.3 L1440.2 1016.9 L1440.1 1018.4 L1440.0 1020.0 L1439.8 1021.5 L1439.7 1023.1 L1439.5 1024.7 L1439.3 1026.3 L1439.1 1027.9 L1438.9 1029.5 L1438.7 1031.0 L1438.5 1032.6 L1438.3 1034.2 L1438.1 1035.7 L1437.8 1037.3 L1437.6 1038.9 L1437.3 1040.4 L1437.0 1042.0 L1436.8 1043.5 L1436.5 1045.0 L1436.2 1046.6 L1435.8 1048.1 L1435.5 1049.7 L1435.2 1051.2 L1434.8 1052.7 L1434.5 1054.2 L1434.1 1055.8 L1433.7 1057.3 L1433.2 1058.8 L1432.8 1060.3 L1432.4 1061.8 L1431.9 1063.3 L1431.5 1064.7 L1431.0 1066.2 L1430.6 1067.7 L1430.1 1069.1 L1429.6 1070.6 L1429.1 1072.1 L1428.6 1073.5 L1428.1 1075.0 L1427.5 1076.4 L1427.0 1077.9 L1426.5 1079.3 L1425.9 1080.7 L1425.4 1082.1 L1424.8 1083.6 L1424.2 1085.0 L1423.6 1086.4 L1423.0 1087.7 L1422.4 1089.1 L1421.8 1090.5 L1421.1 1091.9 L1420.5 1093.2 L1419.8 1094.5 L1419.1 1095.8 L1418.4 1097.1 L1417.7 1098.4 L1416.9 1099.7 L1416.2 1100.9 L1415.4 1102.2 L1414.6 1103.4 L1413.8 1104.7 L1412.9 1105.9 L1412.1 1107.2 L1411.2 1108.4 L1410.4 1109.7 L1409.5 1110.9 L1408.6 1112.1 L1407.7 1113.4 L1406.9 1114.6 L1406.0 1115.8 L1405.1 1117.1 L1404.2 1118.3 L1403.4 1119.6 L1402.5 1120.8 L1401.7 1122.1 L1400.8 1123.3 L1400.0 1124.6 L1399.1 1125.9 L1398.3 1127.1 L1397.4 1128.4 L1396.6 1129.6 L1395.8 1130.9 L1394.9 1132.2 L1394.1 1133.4 L1393.2 1134.7 L1392.4 1136.0 L1391.5 1137.3 L1390.7 1138.5 L1389.8 1139.8 L1388.9 1141.1 L1388.0 1142.4 L1387.2 1143.7 L1386.3 1145.0 L1385.4 1146.3 L1384.5 1147.5 L1383.6 1148.8 L1382.7 1150.1 L1381.8 1151.4 L1380.9 1152.7 L1380.0 1154.0 L1379.1 1155.3 L1378.2 1156.6 L1377.2 1157.8 L1376.3 1159.1 L1375.4 1160.4 L1374.5 1161.7 L1373.5 1163.0 L1372.6 1164.2 L1371.7 1165.5 L1370.7 1166.8 L1369.8 1168.0 L1368.8 1169.3 L1367.9 1170.5 L1366.9 1171.8 L1365.9 1173.0 L1365.0 1174.3 L1364.0 1175.5 L1363.0 1176.7 L1362.0 1177.9 L1361.1 1179.2 L1360.1 1180.4 L1359.1 1181.6 L1358.1 1182.8 L1357.1 1184.0 L1356.1 1185.1 L1355.1 1186.3 L1354.1 1187.5 L1353.1 1188.7 L1352.1 1189.8 L1351.0 1191.0 L1350.0 1192.2 L1349.0 1193.3 L1348.0 1194.5 L1346.9 1195.6 L1345.9 1196.8 L1344.8 1197.9 L1343.8 1199.1 L1342.7 1200.2 L1341.6 1201.3 L1340.6 1202.5 L1339.5 1203.6 L1338.4 1204.7 L1337.3 1205.8 L1336.2 1206.8 L1335.1 1207.9 L1334.0 1208.9 L1332.9 1209.9 L1331.7 1210.9 L1330.6 1211.9 L1329.4 1212.8 L1328.3 1213.7 L1327.1 1214.6 L1325.9 1215.5 L1324.6 1216.4 L1323.4 1217.2 L1322.2 1218.1 L1320.9 1218.9 L1319.6 1219.7 L1318.3 1220.4 L1317.0 1221.2 L1315.7 1222.0 L1314.4 1222.7 L1313.0 1223.4 L1311.7 1224.2 L1310.3 1224.9 L1309.0 1225.6 L1307.6 1226.3 L1306.3 1227.0 L1304.9 1227.7 L1303.6 1228.3 L1302.2 1229.0 L1300.9 1229.7 L1299.5 1230.3 L1298.1 1231.0 L1296.8 1231.6 L1295.4 1232.2 L1294.0 1232.9 L1292.6 1233.5 L1291.1 1234.2 L1289.7 1234.8 L1288.3 1235.4 L1286.9 1236.0 L1285.4 1236.6 L1284.0 1237.2 L1282.6 1237.8 L1281.2 1238.4 L1279.8 1238.9 L1278.3 1239.5 L1276.9 1240.1 L1275.5 1240.6 L1274.1 1241.2 L1272.7 1241.7 L1271.2 1242.3 L1269.8 1242.8 L1268.4 1243.3 L1267.1 1243.8 L1265.7 1244.3 L1264.3 1244.9 L1262.8 1245.4 L1261.4 1245.9 L1259.9 1246.4 L1258.5 1247.0 L1257.0 1247.5 L1255.5 1248.1 L1254.0 1248.6 L1252.5 1249.2 L1251.0 1249.7 L1249.5 1250.3 L1248.0 1250.8 L1246.6 1251.4 L1245.1 1252.0 L1243.6 1252.5 L1242.2 1253.1 L1240.7 1253.6 L1239.3 1254.2 L1237.8 1254.8 L1236.4 1255.4 L1234.9 1255.9 L1233.5 1256.5 L1232.1 1257.1 L1230.7 1257.6 L1229.3 1258.2 L1227.9 1258.8 L1226.4 1259.4 L1225.0 1259.9 L1223.6 1260.5 L1222.1 1261.1 L1220.7 1261.7 L1219.3 1262.3 L1217.8 1262.8 L1216.4 1263.4 L1215.0 1264.0 L1213.5 1264.6 L1212.1 1265.2 L1210.6 1265.7 L1209.2 1266.3 L1207.7 1266.8 L1206.3 1267.4 L1204.9 1267.9 L1203.4 1268.5 L1202.0 1269.0 L1200.5 1269.6 L1199.1 1270.1 L1197.6 1270.6 L1196.2 1271.2 L1194.7 1271.7 L1193.3 1272.2 L1191.8 1272.7 L1190.4 1273.3 L1188.9 1273.8 L1187.5 1274.3 L1186.0 1274.8 L1184.6 1275.3 L1183.1 1275.8 L1181.6 1276.3 L1180.2 1276.7 L1178.7 1277.2 L1177.2 1277.7 L1175.8 1278.2 L1174.3 1278.7 L1172.8 1279.2 L1171.4 1279.7 L1169.9 1280.1 L1168.4 1280.6 L1167.0 1281.1 L1165.5 1281.6 L1164.0 1282.1 L1162.6 1282.5 L1161.1 1283.0 L1159.6 1283.5 L1158.2 1284.0 L1156.7 1284.5Z"/><circle cx="1157.3" cy="1286.4" r="2.00"/><circle cx="1442.9" cy="990.0" r="3.00"/><path d="M538.8 973.8 L537.5 974.5 L536.1 975.3 L534.8 976.1 L533.4 976.8 L532.1 977.5 L530.8 978.3 L529.5 979.0 L528.1 979.8 L526.8 980.5 L525.5 981.2 L524.2 981.9 L522.8 982.5 L521.5 983.2 L520.1 984.0 L518.7 984.7 L517.3 985.5 L515.9 986.3 L514.5 987.1 L513.1 987.9 L511.8 988.6 L510.5 989.3 L509.2 989.8 L508.0 990.2 L506.6 990.5 L505.3 990.6 L504.1 990.6 L502.9 990.5 L501.7 990.2 L500.5 989.9 L499.4 989.5 L498.3 989.0 L497.2 988.4 L496.3 987.9 L495.2 987.2 L494.1 986.6 L493.0 985.8 L491.9 985.1 L490.7 984.3 L489.6 983.4 L488.4 982.5 L487.2 981.6 L485.9 980.7 L484.7 979.7 L483.5 978.7 L482.2 977.6 L481.0 976.6 L479.7 975.5 L478.5 974.4 L477.2 973.2 L476.0 972.1 L474.7 970.9 L473.5 969.7 L472.3 968.5 L471.1 967.3 L469.9 966.0 L468.7 964.8 L467.6 963.6 L466.6 962.4 L465.5 961.3 L464.5 960.1 L463.6 959.0 L462.6 957.9 L461.7 956.7 L460.9 955.6 L460.0 954.5 L459.1 953.4 L458.2 952.2 L457.3 951.0 L456.5 949.8 L455.6 948.6 L454.7 947.3 L453.8 946.1 L452.9 944.8 L452.1 943.5 L451.2 942.2 L450.3 940.9 L449.5 939.6 L448.6 938.3 L447.8 936.9 L446.9 935.6 L446.1 934.3 L445.2 932.9 L444.4 931.6 L443.5 930.2 L442.7 928.9 L441.9 927.5 L441.1 926.1 L440.3 924.8 L439.5 923.4 L438.7 922.1 L437.9 920.7 L437.1 919.4 L436.4 918.1 L435.6 916.8 L434.8 915.4 L434.1 914.1 L433.3 912.8 L432.6 911.4 L431.8 910.1 L431.1 908.7 L430.3 907.4 L429.6 906.0 L428.8 904.6 L428.1 903.2 L427.3 901.9 L426.6 900.5 L425.9 899.1 L425.1 897.7 L424.4 896.3 L423.7 895.0 L423.0 893.6 L422.3 892.2 L421.6 890.8 L421.0 889.5 L420.3 888.1 L419.7 886.7 L419.0 885.3 L418.4 884.0 L417.7 882.6 L417.1 881.2 L416.5 879.8 L415.9 878.5 L415.3 877.1 L414.7 875.7 L414.2 874.4 L413.6 873.0 L413.1 871.6 L412.5 870.3 L412.0 868.9 L411.5 867.5 L411.0 866.1 L410.5 864.7 L410.0 863.3 L409.5 861.9 L409.1 860.5 L408.6 859.0 L408.2 857.6 L407.7 856.1 L407.3 854.6 L406.9 853.1 L406.5 851.6 L406.1 850.1 L405.7 848.6 L405.3 847.1 L405.0 845.6 L404.6 844.2 L404.3 842.7 L404.0 841.2 L403.7 839.7 L403.4 838.2 L403.1 836.7 L402.8 835.2 L402.5 833.7 L402.3 832.2 L402.0 830.7 L401.8 829.2 L401.6 827.7 L401.3 826.2 L401.1 824.7 L400.9 823.2 L400.7 821.7 L400.5 820.2 L400.4 818.7 L400.2 817.2 L400.0 815.7 L399.9 814.2 L399.7 812.7 L399.6 811.2 L399.4 809.7 L399.3 808.2 L399.2 806.7 L399.1 805.2 L398.9 803.7 L398.8 802.2 L398.8 800.7 L398.7 799.2 L398.6 797.7 L398.5 796.2 L398.5 794.7 L398.4 793.2 L398.4 791.7 L398.3 790.2 L398.3 788.7 L398.3 787.2 L398.3 785.7 L398.3 784.2 L398.3 782.7 L398.4 781.2 L398.4 779.8 L398.5 778.3 L398.6 776.8 L398.7 775.3 L398.8 773.8 L398.9 772.3 L399.0 770.9 L399.2 769.4 L399.4 767.9 L399.5 766.4 L399.7 765.0 L400.0 763.5 L400.2 762.0 L400.5 760.6 L400.7 759.1 L401.0 757.6 L401.3 756.1 L401.6 754.6 L402.0 753.1 L402.3 751.5 L402.7 750.0 L403.1 748.5 L403.5 746.9 L403.9 745.4 L404.3 743.8 L404.8 742.3 L405.2 740.8 L405.7 739.2 L406.1 737.7 L406.6 736.2 L407.1 734.7 L407.6 733.2 L408.1 731.8 L408.6 730.3 L409.1 728.9 L409.6 727.5 L410.1 726.1 L410.6 724.7 L411.2 723.4 L411.7 722.1 L412.2 720.8 L412.8 719.6 L413.3 718.3 L413.9 717.0 L414.5 715.7 L415.2 714.3 L415.9 713.0 L416.6 711.6 L417.4 710.2 L418.2 708.8 L419.0 707.4 L419.9 706.0 L420.7 704.7 L421.6 703.5 L422.5 702.3 L423.4 701.1 L424.3 700.0 L425.2 698.9 L426.1 697.9 L427.0 696.9 L428.0 695.9 L429.0 695.0 L430.0 694.1 L431.0 693.3 L432.1 692.4 L433.1 691.6 L434.2 690.8 L435.4 690.1 L436.5 689.3 L437.7 688.6 L438.9 687.8 L440.2 687.2 L441.4 686.5 L442.7 685.8 L444.0 685.2 L445.3 684.6 L446.7 684.1 L448.0 683.6 L449.4 683.1 L450.7 682.7 L452.1 682.3 L453.5 682.0 L454.9 681.7 L456.2 681.5 L457.6 681.4 L459.0 681.3 L460.4 681.2 L461.7 681.2 L463.0 681.3 L464.3 681.4 L465.6 681.6 L466.8 681.8 L468.1 682.0 L469.4 682.3 L470.6 682.6 L471.9 683.0 L473.3 683.5 L474.6 684.0 L476.0 684.5 L477.4 685.1 L478.8 685.7 L480.2 686.3 L481.6 687.0 L483.0 687.7 L484.5 688.4 L485.8 689.2 L487.2 689.9 L488.6 690.7 L489.9 691.5 L491.3 692.3 L492.5 693.1 L493.8 693.9 L495.0 694.7 L496.2 695.6 L497.4 696.4 L498.6 697.3 L499.7 698.1 L500.8 699.0 L501.9 700.0 L503.0 700.9 L504.0 702.0 L505.1 703.0 L506.1 704.1 L507.0 705.2 L508.0 706.3 L508.9 707.5 L509.8 708.7 L510.7 709.9 L511.5 711.1 L512.4 712.4 L513.3 713.6 L514.2 714.9 L515.1 716.2 L516.0 717.4 L516.8 718.7 L517.7 720.0 L518.7 721.3 L519.6 722.5 L520.6 723.8 L525.4 720.2 L524.5 719.0 L523.7 717.7 L522.9 716.5 L522.1 715.2 L521.2 713.9 L520.4 712.6 L519.6 711.3 L518.8 710.0 L517.9 708.7 L517.1 707.4 L516.2 706.0 L515.3 704.7 L514.4 703.4 L513.5 702.1 L512.5 700.8 L511.4 699.5 L510.4 698.2 L509.2 696.9 L508.1 695.7 L506.9 694.6 L505.7 693.4 L504.5 692.4 L503.2 691.3 L502.0 690.3 L500.7 689.4 L499.4 688.4 L498.1 687.5 L496.8 686.6 L495.4 685.7 L494.0 684.9 L492.6 684.0 L491.2 683.1 L489.7 682.3 L488.2 681.4 L486.7 680.6 L485.2 679.8 L483.7 679.1 L482.2 678.3 L480.7 677.6 L479.1 677.0 L477.6 676.3 L476.1 675.7 L474.6 675.2 L473.0 674.7 L471.5 674.2 L470.0 673.8 L468.4 673.5 L466.8 673.2 L465.2 673.0 L463.5 672.8 L461.9 672.8 L460.2 672.8 L458.5 672.9 L456.8 673.0 L455.1 673.3 L453.4 673.5 L451.7 673.9 L450.0 674.3 L448.4 674.8 L446.8 675.3 L445.2 675.9 L443.6 676.5 L442.1 677.1 L440.6 677.8 L439.1 678.5 L437.6 679.3 L436.2 680.1 L434.8 680.9 L433.5 681.7 L432.1 682.6 L430.8 683.5 L429.6 684.4 L428.3 685.3 L427.1 686.3 L425.9 687.3 L424.8 688.3 L423.7 689.4 L422.6 690.5 L421.5 691.7 L420.4 692.8 L419.4 694.0 L418.4 695.3 L417.4 696.6 L416.5 697.9 L415.5 699.3 L414.6 700.7 L413.7 702.2 L412.8 703.7 L412.0 705.2 L411.1 706.8 L410.3 708.3 L409.6 709.8 L408.9 711.2 L408.2 712.7 L407.6 714.1 L406.9 715.5 L406.4 716.8 L405.8 718.2 L405.3 719.5 L404.7 720.9 L404.2 722.3 L403.7 723.7 L403.2 725.1 L402.6 726.6 L402.1 728.1 L401.6 729.6 L401.1 731.1 L400.6 732.6 L400.1 734.2 L399.7 735.7 L399.2 737.3 L398.7 738.9 L398.3 740.5 L397.9 742.1 L397.4 743.7 L397.0 745.2 L396.6 746.8 L396.3 748.4 L395.9 750.0 L395.5 751.6 L395.2 753.2 L394.9 754.8 L394.6 756.3 L394.3 757.9 L394.0 759.4 L393.8 761.0 L393.5 762.5 L393.3 764.1 L393.1 765.6 L392.9 767.2 L392.8 768.7 L392.6 770.3 L392.5 771.8 L392.4 773.4 L392.3 774.9 L392.2 776.4 L392.2 778.0 L392.1 779.5 L392.1 781.1 L392.0 782.6 L392.0 784.2 L392.0 785.7 L392.0 787.2 L392.1 788.8 L392.1 790.3 L392.1 791.9 L392.2 793.4 L392.3 794.9 L392.4 796.5 L392.4 798.0 L392.5 799.5 L392.6 801.1 L392.8 802.6 L392.9 804.1 L393.0 805.7 L393.1 807.2 L393.3 808.7 L393.4 810.2 L393.6 811.8 L393.7 813.3 L393.9 814.8 L394.1 816.4 L394.2 817.9 L394.4 819.4 L394.6 820.9 L394.8 822.5 L395.0 824.0 L395.2 825.5 L395.4 827.1 L395.6 828.6 L395.9 830.1 L396.1 831.7 L396.4 833.2 L396.6 834.7 L396.9 836.3 L397.2 837.8 L397.5 839.3 L397.8 840.9 L398.1 842.4 L398.4 843.9 L398.8 845.5 L399.1 847.0 L399.5 848.6 L399.9 850.1 L400.3 851.6 L400.7 853.2 L401.1 854.7 L401.5 856.2 L402.0 857.8 L402.4 859.3 L402.9 860.8 L403.4 862.3 L403.9 863.8 L404.3 865.3 L404.8 866.7 L405.4 868.2 L405.9 869.6 L406.4 871.0 L406.9 872.4 L407.5 873.8 L408.1 875.2 L408.6 876.6 L409.2 878.0 L409.8 879.5 L410.4 880.9 L411.0 882.3 L411.6 883.7 L412.3 885.1 L412.9 886.5 L413.6 887.9 L414.2 889.3 L414.9 890.7 L415.6 892.1 L416.3 893.5 L417.0 894.9 L417.7 896.3 L418.4 897.7 L419.1 899.1 L419.8 900.5 L420.5 901.9 L421.3 903.3 L422.0 904.7 L422.8 906.1 L423.5 907.5 L424.3 908.9 L425.1 910.3 L425.8 911.6 L426.6 913.0 L427.3 914.4 L428.1 915.7 L428.9 917.1 L429.6 918.4 L430.4 919.7 L431.2 921.1 L431.9 922.4 L432.7 923.8 L433.5 925.1 L434.3 926.5 L435.1 927.9 L435.9 929.2 L436.8 930.6 L437.6 932.0 L438.4 933.3 L439.3 934.7 L440.1 936.1 L441.0 937.4 L441.8 938.8 L442.7 940.2 L443.6 941.5 L444.4 942.9 L445.3 944.2 L446.2 945.5 L447.1 946.9 L448.0 948.2 L448.9 949.5 L449.8 950.8 L450.7 952.0 L451.6 953.3 L452.5 954.5 L453.4 955.8 L454.3 957.0 L455.2 958.2 L456.1 959.3 L457.1 960.5 L458.0 961.7 L459.0 962.8 L460.0 964.0 L461.0 965.2 L462.1 966.4 L463.3 967.7 L464.4 968.9 L465.6 970.1 L466.9 971.4 L468.1 972.7 L469.4 973.9 L470.7 975.1 L472.0 976.3 L473.3 977.5 L474.6 978.7 L475.9 979.8 L477.2 981.0 L478.5 982.1 L479.8 983.1 L481.1 984.2 L482.4 985.2 L483.7 986.2 L485.0 987.1 L486.2 988.0 L487.5 988.9 L488.7 989.7 L489.9 990.5 L491.1 991.3 L492.3 992.0 L493.5 992.7 L494.6 993.3 L495.9 994.0 L497.3 994.6 L498.8 995.2 L500.4 995.6 L502.1 995.9 L503.9 996.0 L505.6 996.0 L507.4 995.8 L509.3 995.4 L511.1 994.8 L512.8 994.0 L514.3 993.2 L515.7 992.3 L517.1 991.5 L518.5 990.7 L519.8 989.9 L521.1 989.1 L522.4 988.4 L523.8 987.7 L525.1 987.0 L526.5 986.3 L527.8 985.6 L529.2 984.9 L530.5 984.2 L531.9 983.4 L533.2 982.7 L534.6 981.9 L535.9 981.2 L537.2 980.4 L538.6 979.7 L539.9 978.9 L541.2 978.2Z"/><circle cx="540.0" cy="976.0" r="2.50"/><circle cx="523.0" cy="722.0" r="3.00"/><path d="M418.4 759.6 L419.0 758.2 L419.7 756.7 L420.3 755.3 L420.9 753.8 L421.5 752.3 L422.1 750.9 L422.7 749.4 L423.3 747.9 L423.9 746.4 L424.5 745.0 L425.1 743.5 L425.7 742.1 L426.3 740.6 L426.9 739.2 L427.5 737.8 L428.2 736.4 L428.8 735.0 L429.5 733.7 L430.2 732.4 L430.9 731.1 L431.6 729.9 L432.3 728.7 L433.1 727.5 L434.0 726.3 L434.9 725.1 L435.8 723.9 L436.8 722.7 L437.8 721.6 L438.9 720.4 L440.0 719.2 L441.1 718.1 L442.3 716.9 L443.5 715.8 L444.8 714.7 L446.0 713.7 L447.3 712.7 L448.5 711.7 L449.8 710.8 L451.0 709.9 L452.3 709.0 L453.5 708.3 L454.7 707.5 L455.9 706.9 L457.1 706.2 L458.3 705.7 L459.6 705.2 L460.8 704.7 L462.1 704.4 L463.5 704.1 L464.8 703.9 L466.2 703.8 L467.6 703.7 L468.9 703.8 L470.3 704.0 L471.6 704.3 L473.0 704.7 L474.4 705.2 L475.7 705.7 L477.1 706.3 L478.4 706.9 L479.6 707.6 L480.8 708.3 L482.0 709.0 L483.1 709.8 L484.2 710.6 L485.3 711.4 L486.3 712.3 L487.4 713.2 L488.4 714.2 L489.5 715.2 L490.6 716.2 L491.7 717.3 L492.8 718.5 L493.9 719.7 L495.0 720.9 L496.1 722.2 L497.3 723.4 L498.3 724.6 L499.4 725.8 L500.4 727.0 L501.4 728.2 L502.4 729.4 L503.4 730.5 L504.3 731.6 L505.2 732.7 L506.0 733.8 L506.9 735.0 L507.9 736.1 L508.8 737.3 L509.7 738.5 L510.6 739.8 L511.5 741.0 L512.5 742.3 L513.4 743.5 L514.3 744.8 L515.3 746.1 L516.2 747.4 L517.2 748.6 L518.1 749.9 L519.0 751.2 L520.0 752.5 L520.9 753.8 L521.9 755.0 L522.8 756.3 L523.7 757.6 L524.7 758.8 L525.6 760.0 L528.4 758.0 L527.5 756.7 L526.6 755.5 L525.7 754.2 L524.7 752.9 L523.8 751.6 L522.9 750.4 L522.0 749.1 L521.1 747.8 L520.1 746.5 L519.2 745.2 L518.3 743.9 L517.3 742.6 L516.4 741.3 L515.5 740.0 L514.6 738.8 L513.7 737.5 L512.7 736.3 L511.8 735.0 L510.9 733.8 L510.0 732.6 L509.1 731.4 L508.2 730.3 L507.3 729.2 L506.4 728.0 L505.5 726.8 L504.5 725.6 L503.5 724.4 L502.4 723.2 L501.3 722.0 L500.3 720.7 L499.1 719.5 L498.0 718.2 L496.8 717.0 L495.7 715.7 L494.5 714.6 L493.4 713.4 L492.3 712.3 L491.2 711.2 L490.0 710.2 L488.9 709.2 L487.8 708.3 L486.6 707.4 L485.4 706.5 L484.2 705.7 L482.9 704.9 L481.6 704.1 L480.2 703.4 L478.8 702.7 L477.3 702.0 L475.8 701.4 L474.2 700.9 L472.6 700.4 L471.0 700.1 L469.3 699.9 L467.7 699.7 L466.0 699.8 L464.3 699.9 L462.7 700.1 L461.2 700.5 L459.6 700.9 L458.2 701.4 L456.7 702.0 L455.3 702.6 L454.0 703.3 L452.7 704.1 L451.4 704.9 L450.1 705.7 L448.8 706.6 L447.4 707.5 L446.1 708.5 L444.8 709.5 L443.5 710.6 L442.2 711.7 L440.9 712.8 L439.6 714.0 L438.4 715.2 L437.1 716.4 L435.9 717.7 L434.8 718.9 L433.7 720.2 L432.7 721.4 L431.7 722.7 L430.7 724.0 L429.9 725.3 L429.0 726.6 L428.3 728.0 L427.5 729.3 L426.8 730.7 L426.1 732.1 L425.5 733.5 L424.8 734.9 L424.2 736.4 L423.6 737.8 L423.0 739.3 L422.5 740.8 L421.9 742.2 L421.3 743.7 L420.8 745.2 L420.2 746.7 L419.6 748.2 L419.1 749.7 L418.5 751.2 L417.9 752.6 L417.4 754.1 L416.8 755.6 L416.2 757.0 L415.6 758.4Z"/><circle cx="417.0" cy="759.0" r="1.50"/><circle cx="527.0" cy="759.0" r="1.75"/><path d="M413.5 777.2 L413.7 778.8 L413.9 780.4 L414.2 782.0 L414.4 783.7 L414.6 785.4 L414.8 787.1 L415.1 788.8 L415.3 790.5 L415.5 792.2 L415.7 793.9 L416.0 795.6 L416.2 797.3 L416.4 799.0 L416.6 800.7 L416.9 802.3 L417.1 804.0 L417.3 805.6 L417.5 807.2 L417.7 808.7 L417.9 810.2 L418.1 811.6 L418.4 813.0 L418.6 814.3 L418.8 815.6 L419.0 817.1 L419.3 818.6 L419.7 820.2 L420.0 821.7 L420.5 823.2 L420.9 824.5 L421.4 825.9 L422.0 827.6 L422.6 828.9 L423.2 829.8 L423.7 830.7 L426.3 829.3 L425.7 828.2 L425.2 827.5 L424.8 826.5 L424.2 824.9 L423.8 823.6 L423.3 822.3 L422.9 820.9 L422.6 819.5 L422.2 818.0 L422.0 816.5 L421.7 815.1 L421.5 813.9 L421.3 812.6 L421.1 811.2 L420.9 809.7 L420.7 808.3 L420.5 806.7 L420.3 805.2 L420.0 803.6 L419.8 801.9 L419.6 800.3 L419.4 798.6 L419.2 796.9 L418.9 795.2 L418.7 793.5 L418.5 791.8 L418.3 790.1 L418.0 788.4 L417.8 786.7 L417.6 785.0 L417.4 783.3 L417.1 781.6 L416.9 780.0 L416.7 778.4 L416.5 776.8Z"/><circle cx="415.0" cy="777.0" r="1.50"/><circle cx="425.0" cy="830.0" r="1.50"/><path d="M482.8 708.8 L481.7 709.8 L480.6 710.9 L479.6 711.9 L478.5 712.9 L477.4 714.0 L476.3 715.0 L475.2 716.0 L474.1 717.0 L473.1 718.1 L472.0 719.1 L470.9 720.1 L469.8 721.2 L468.7 722.2 L467.6 723.3 L466.6 724.4 L465.5 725.5 L464.4 726.6 L463.4 727.7 L462.4 728.9 L461.3 730.0 L460.3 731.2 L459.4 732.4 L458.4 733.6 L457.5 734.9 L456.5 736.1 L455.6 737.4 L454.7 738.7 L453.8 740.0 L452.9 741.3 L452.0 742.6 L451.2 743.9 L450.3 745.3 L449.5 746.6 L448.6 748.0 L447.8 749.4 L447.0 750.7 L446.2 752.1 L445.4 753.5 L444.6 754.9 L443.8 756.3 L443.1 757.7 L442.4 759.1 L441.6 760.5 L440.9 761.9 L440.3 763.3 L439.6 764.7 L438.9 766.1 L438.3 767.5 L437.6 769.0 L437.0 770.4 L436.4 771.9 L435.8 773.3 L435.2 774.8 L434.7 776.3 L434.1 777.8 L433.6 779.3 L433.1 780.7 L432.6 782.2 L432.2 783.7 L431.7 785.1 L431.3 786.6 L430.8 788.1 L430.4 789.5 L430.0 791.0 L429.6 792.5 L429.2 793.9 L428.8 795.4 L428.5 796.9 L428.1 798.4 L427.8 799.9 L427.4 801.5 L427.1 803.0 L426.7 804.6 L426.4 806.2 L426.1 807.8 L425.8 809.4 L425.5 811.0 L425.2 812.6 L425.0 814.2 L424.7 815.8 L424.5 817.3 L424.3 818.9 L424.1 820.4 L424.0 821.8 L423.8 823.3 L423.7 824.6 L423.5 826.1 L423.4 827.5 L423.3 829.0 L423.3 830.4 L423.2 831.8 L423.2 833.1 L423.3 834.5 L423.3 835.9 L423.5 837.3 L423.8 838.8 L424.1 840.3 L424.5 841.8 L425.0 843.3 L425.5 844.7 L426.0 846.2 L426.5 847.6 L427.0 849.1 L427.6 850.5 L428.1 851.8 L428.5 853.0 L429.0 854.2 L429.5 855.5 L430.0 856.8 L430.6 858.1 L431.1 859.5 L431.7 860.9 L432.3 862.3 L432.9 863.7 L433.6 865.2 L434.2 866.7 L434.8 868.2 L435.5 869.7 L436.2 871.2 L436.8 872.8 L437.5 874.3 L438.2 875.8 L438.9 877.4 L439.6 878.9 L440.3 880.4 L441.0 881.9 L441.7 883.4 L442.4 884.9 L443.0 886.4 L443.7 887.8 L444.4 889.3 L445.1 890.7 L445.8 892.1 L446.5 893.6 L447.2 895.0 L447.9 896.4 L448.6 897.9 L449.3 899.4 L450.0 900.8 L450.7 902.3 L451.5 903.8 L452.2 905.3 L452.9 906.9 L453.7 908.4 L454.4 909.9 L455.2 911.4 L456.0 912.9 L456.7 914.3 L457.5 915.8 L458.2 917.2 L459.0 918.7 L459.8 920.1 L460.5 921.4 L461.3 922.8 L462.0 924.1 L462.8 925.3 L463.5 926.6 L464.3 927.8 L465.0 928.9 L465.7 930.0 L466.6 931.2 L467.5 932.4 L468.5 933.7 L469.6 934.9 L470.8 936.2 L472.1 937.4 L473.5 938.6 L474.9 939.7 L476.5 940.9 L478.1 941.8 L479.6 942.6 L481.2 943.3 L482.7 943.8 L484.2 944.1 L485.7 944.4 L487.2 944.5 L488.8 944.4 L490.3 944.2 L491.7 943.9 L493.2 943.4 L494.6 942.8 L496.0 942.0 L497.3 941.1 L498.6 940.1 L499.9 939.1 L501.1 938.0 L502.3 936.8 L503.4 935.7 L504.6 934.6 L505.8 933.4 L506.9 932.2 L508.1 931.0 L509.2 929.8 L510.3 928.6 L511.4 927.4 L512.5 926.1 L513.7 924.9 L514.7 923.7 L515.8 922.6 L516.8 921.6 L517.8 920.7 L518.8 920.0 L519.8 919.5 L520.9 919.1 L521.9 918.8 L523.1 918.8 L524.3 918.8 L525.6 919.0 L527.0 919.3 L528.4 919.7 L529.9 920.1 L531.4 920.7 L532.9 921.2 L534.5 921.7 L535.5 918.3 L534.0 917.9 L532.6 917.4 L531.0 916.8 L529.4 916.3 L527.8 915.9 L526.2 915.5 L524.6 915.3 L523.0 915.3 L521.4 915.4 L519.9 915.7 L518.4 916.3 L517.0 917.0 L515.7 918.0 L514.4 919.0 L513.3 920.1 L512.1 921.3 L511.0 922.6 L509.9 923.8 L508.8 925.0 L507.7 926.2 L506.6 927.4 L505.5 928.6 L504.4 929.8 L503.3 930.9 L502.1 932.1 L501.0 933.2 L499.9 934.3 L498.7 935.4 L497.6 936.4 L496.4 937.4 L495.3 938.3 L494.1 939.0 L493.0 939.7 L491.9 940.2 L490.8 940.5 L489.6 940.8 L488.5 940.9 L487.3 941.0 L486.1 940.9 L484.9 940.7 L483.7 940.4 L482.4 940.0 L481.1 939.4 L479.8 938.8 L478.4 937.9 L477.0 936.9 L475.7 935.9 L474.5 934.8 L473.3 933.7 L472.2 932.6 L471.2 931.4 L470.3 930.3 L469.4 929.1 L468.6 928.0 L467.9 927.0 L467.2 925.9 L466.5 924.7 L465.8 923.5 L465.1 922.3 L464.3 921.0 L463.6 919.7 L462.8 918.4 L462.1 917.0 L461.3 915.6 L460.6 914.2 L459.8 912.7 L459.1 911.3 L458.3 909.8 L457.6 908.3 L456.8 906.8 L456.1 905.3 L455.3 903.8 L454.6 902.3 L453.9 900.8 L453.1 899.3 L452.4 897.8 L451.7 896.4 L451.0 894.9 L450.3 893.5 L449.6 892.1 L448.9 890.6 L448.3 889.2 L447.6 887.8 L446.9 886.3 L446.2 884.9 L445.5 883.4 L444.8 882.0 L444.1 880.5 L443.5 879.0 L442.8 877.4 L442.1 875.9 L441.4 874.4 L440.7 872.9 L440.0 871.3 L439.4 869.8 L438.7 868.3 L438.0 866.8 L437.4 865.3 L436.8 863.8 L436.2 862.4 L435.5 860.9 L435.0 859.5 L434.4 858.1 L433.8 856.8 L433.3 855.4 L432.8 854.2 L432.3 852.9 L431.8 851.7 L431.3 850.5 L430.8 849.2 L430.3 847.8 L429.8 846.4 L429.3 845.0 L428.8 843.6 L428.3 842.2 L427.9 840.8 L427.5 839.5 L427.2 838.1 L427.0 836.8 L426.8 835.6 L426.8 834.3 L426.7 833.1 L426.7 831.8 L426.8 830.5 L426.8 829.2 L426.9 827.8 L427.0 826.4 L427.1 825.0 L427.3 823.6 L427.4 822.2 L427.6 820.8 L427.8 819.3 L428.0 817.8 L428.2 816.3 L428.4 814.7 L428.7 813.2 L429.0 811.6 L429.2 810.0 L429.5 808.5 L429.8 806.9 L430.2 805.3 L430.5 803.8 L430.8 802.2 L431.2 800.7 L431.5 799.2 L431.9 797.7 L432.2 796.3 L432.6 794.8 L433.0 793.4 L433.4 791.9 L433.8 790.5 L434.2 789.1 L434.6 787.6 L435.1 786.2 L435.5 784.7 L436.0 783.3 L436.4 781.8 L436.9 780.4 L437.4 779.0 L438.0 777.5 L438.5 776.1 L439.1 774.6 L439.6 773.2 L440.2 771.8 L440.8 770.3 L441.5 768.9 L442.1 767.6 L442.7 766.2 L443.4 764.8 L444.1 763.4 L444.8 762.1 L445.5 760.7 L446.2 759.3 L446.9 758.0 L447.7 756.6 L448.4 755.2 L449.2 753.9 L450.0 752.5 L450.8 751.2 L451.6 749.8 L452.4 748.5 L453.3 747.1 L454.1 745.8 L455.0 744.5 L455.8 743.2 L456.7 741.9 L457.6 740.7 L458.4 739.4 L459.3 738.2 L460.2 737.0 L461.2 735.8 L462.1 734.6 L463.0 733.5 L464.0 732.3 L465.0 731.2 L466.0 730.1 L467.0 729.0 L468.0 727.9 L469.1 726.8 L470.1 725.8 L471.2 724.7 L472.2 723.7 L473.3 722.7 L474.4 721.6 L475.5 720.6 L476.5 719.6 L477.6 718.6 L478.7 717.5 L479.8 716.5 L480.9 715.4 L482.0 714.4 L483.1 713.4 L484.2 712.3 L485.2 711.2Z"/><circle cx="484.0" cy="710.0" r="1.75"/><circle cx="535.0" cy="920.0" r="1.75"/><path d="M528.7 804.3 L528.0 805.7 L527.2 807.0 L526.4 808.4 L525.6 809.8 L524.9 811.3 L524.1 812.7 L523.3 814.1 L522.5 815.5 L521.6 817.0 L520.8 818.4 L520.0 819.8 L519.2 821.3 L518.4 822.7 L517.7 824.1 L516.9 825.5 L516.2 826.9 L515.4 828.2 L514.7 829.6 L514.1 830.9 L513.4 832.2 L512.8 833.5 L512.3 834.7 L511.7 836.1 L511.2 837.5 L510.7 838.9 L510.2 840.4 L509.8 842.0 L509.4 843.5 L509.1 845.1 L508.9 846.8 L508.7 848.4 L508.6 850.0 L508.7 851.6 L508.8 853.1 L509.0 854.6 L509.3 856.1 L509.6 857.5 L510.0 859.0 L510.4 860.4 L510.9 861.9 L511.5 863.3 L512.1 864.8 L512.8 866.3 L513.5 867.7 L514.3 869.2 L515.1 870.6 L515.9 872.0 L516.8 873.4 L517.6 874.7 L518.5 876.0 L519.4 877.4 L520.3 878.7 L521.2 880.0 L522.2 881.2 L523.2 882.4 L524.3 883.6 L525.3 884.8 L526.4 885.9 L527.6 887.0 L528.7 888.1 L529.8 889.1 L530.9 890.1 L532.0 891.1 L534.0 888.9 L532.9 887.9 L531.8 886.9 L530.7 885.9 L529.7 884.9 L528.6 883.8 L527.5 882.7 L526.5 881.6 L525.5 880.5 L524.6 879.3 L523.6 878.1 L522.7 876.9 L521.8 875.6 L521.0 874.4 L520.2 873.1 L519.3 871.8 L518.5 870.5 L517.7 869.1 L516.9 867.7 L516.2 866.3 L515.5 865.0 L514.9 863.6 L514.3 862.2 L513.8 860.8 L513.3 859.5 L512.9 858.1 L512.5 856.8 L512.2 855.5 L512.0 854.1 L511.8 852.8 L511.7 851.4 L511.6 850.1 L511.7 848.6 L511.8 847.1 L512.1 845.6 L512.3 844.2 L512.7 842.7 L513.1 841.3 L513.5 839.9 L514.0 838.5 L514.5 837.2 L515.0 835.9 L515.6 834.7 L516.1 833.5 L516.8 832.2 L517.4 830.9 L518.1 829.6 L518.8 828.3 L519.5 826.9 L520.3 825.5 L521.1 824.1 L521.8 822.7 L522.6 821.3 L523.4 819.9 L524.3 818.4 L525.1 817.0 L525.9 815.6 L526.7 814.1 L527.5 812.7 L528.3 811.3 L529.1 809.9 L529.8 808.5 L530.6 807.1 L531.3 805.7Z"/><circle cx="530.0" cy="805.0" r="1.50"/><circle cx="533.0" cy="890.0" r="1.50"/><path d="M1428.1 754.6 L1429.5 753.8 L1430.9 752.9 L1432.4 752.0 L1433.8 751.2 L1435.2 750.3 L1436.6 749.4 L1438.1 748.5 L1439.5 747.6 L1440.9 746.8 L1442.3 745.9 L1443.7 745.1 L1445.0 744.3 L1446.4 743.6 L1447.7 742.9 L1448.9 742.3 L1450.1 741.8 L1451.3 741.3 L1452.6 740.9 L1453.8 740.6 L1455.1 740.4 L1456.4 740.2 L1457.7 740.0 L1459.1 740.0 L1460.4 740.1 L1461.8 740.2 L1463.1 740.5 L1464.3 740.8 L1465.5 741.3 L1466.6 741.9 L1467.7 742.5 L1468.7 743.2 L1469.6 744.0 L1470.5 744.8 L1471.3 745.7 L1472.0 746.6 L1472.7 747.5 L1473.3 748.5 L1473.8 749.6 L1474.4 750.8 L1474.9 752.0 L1475.5 753.3 L1476.0 754.6 L1476.4 756.0 L1476.9 757.5 L1477.3 759.0 L1477.8 760.6 L1478.2 762.1 L1478.6 763.8 L1479.0 765.4 L1479.3 767.0 L1479.7 768.5 L1480.0 770.1 L1480.3 771.6 L1480.5 773.0 L1480.8 774.5 L1481.0 775.9 L1481.3 777.2 L1481.5 778.6 L1481.7 780.1 L1481.9 781.5 L1482.1 783.0 L1482.3 784.4 L1482.4 785.9 L1482.6 787.5 L1482.7 789.0 L1482.9 790.5 L1483.0 792.1 L1483.1 793.7 L1483.2 795.2 L1483.3 796.8 L1483.4 798.4 L1483.4 800.1 L1483.5 801.7 L1483.5 803.3 L1483.5 804.9 L1483.5 806.5 L1483.5 808.1 L1483.5 809.6 L1483.4 811.1 L1483.4 812.6 L1483.3 814.0 L1483.2 815.4 L1483.1 816.8 L1483.0 818.2 L1482.9 819.7 L1482.8 821.1 L1482.7 822.5 L1482.6 823.9 L1482.4 825.4 L1482.3 826.8 L1482.1 828.3 L1482.0 829.8 L1481.8 831.2 L1481.6 832.7 L1481.4 834.2 L1481.2 835.7 L1481.0 837.2 L1480.7 838.7 L1480.5 840.2 L1480.2 841.8 L1480.0 843.3 L1479.7 844.8 L1479.4 846.4 L1479.1 847.9 L1478.8 849.5 L1478.5 851.1 L1478.2 852.6 L1477.9 854.2 L1477.5 855.7 L1477.2 857.2 L1476.8 858.6 L1476.5 860.1 L1476.1 861.5 L1475.8 862.9 L1475.4 864.3 L1475.0 865.7 L1474.6 867.2 L1474.2 868.6 L1473.8 870.1 L1473.4 871.5 L1473.0 873.0 L1472.5 874.5 L1472.1 876.0 L1471.6 877.5 L1471.2 879.0 L1470.7 880.5 L1470.2 882.0 L1469.7 883.5 L1469.2 885.0 L1468.8 886.5 L1468.3 888.0 L1467.8 889.5 L1467.3 891.0 L1466.8 892.4 L1466.3 893.9 L1465.8 895.4 L1465.3 896.8 L1464.8 898.3 L1464.3 899.7 L1463.8 901.1 L1463.3 902.6 L1462.9 903.9 L1462.4 905.3 L1461.9 906.7 L1461.5 908.0 L1461.0 909.3 L1460.5 910.7 L1460.0 912.2 L1459.5 913.6 L1458.9 915.1 L1458.4 916.6 L1457.8 918.2 L1457.2 919.8 L1456.5 921.4 L1455.9 923.0 L1455.3 924.6 L1454.6 926.2 L1454.0 927.8 L1453.4 929.3 L1452.7 930.8 L1452.1 932.3 L1451.5 933.8 L1450.9 935.3 L1450.3 936.7 L1449.7 938.1 L1449.1 939.5 L1448.5 940.9 L1448.0 942.2 L1447.4 943.5 L1446.9 944.8 L1446.4 946.1 L1445.9 947.3 L1445.4 948.5 L1444.9 949.8 L1444.4 951.2 L1444.0 952.7 L1443.5 954.2 L1443.1 955.8 L1442.6 957.4 L1442.3 958.9 L1441.9 960.5 L1441.6 962.2 L1441.4 963.7 L1441.2 965.1 L1441.0 966.5 L1440.9 967.8 L1440.8 969.1 L1440.6 970.3 L1440.4 971.6 L1445.4 972.4 L1445.6 970.9 L1445.7 969.6 L1445.8 968.3 L1446.0 967.1 L1446.1 965.8 L1446.3 964.4 L1446.5 963.0 L1446.8 961.5 L1447.2 960.0 L1447.5 958.6 L1447.9 957.1 L1448.3 955.6 L1448.7 954.2 L1449.2 952.8 L1449.6 951.5 L1450.1 950.3 L1450.6 949.1 L1451.0 947.9 L1451.5 946.7 L1452.0 945.4 L1452.6 944.1 L1453.1 942.8 L1453.7 941.4 L1454.3 940.1 L1454.9 938.6 L1455.5 937.2 L1456.1 935.7 L1456.7 934.3 L1457.4 932.8 L1458.0 931.2 L1458.6 929.7 L1459.3 928.1 L1459.9 926.5 L1460.6 924.9 L1461.2 923.2 L1461.8 921.6 L1462.5 920.0 L1463.0 918.4 L1463.6 916.8 L1464.2 915.3 L1464.7 913.8 L1465.2 912.4 L1465.7 911.0 L1466.2 909.6 L1466.6 908.3 L1467.1 906.9 L1467.6 905.6 L1468.1 904.2 L1468.6 902.8 L1469.0 901.4 L1469.5 899.9 L1470.0 898.5 L1470.5 897.0 L1471.0 895.5 L1471.5 894.0 L1472.0 892.5 L1472.5 891.0 L1473.0 889.5 L1473.5 888.0 L1474.0 886.5 L1474.5 885.0 L1475.0 883.5 L1475.5 882.0 L1475.9 880.4 L1476.4 878.9 L1476.9 877.4 L1477.3 875.9 L1477.8 874.4 L1478.2 872.9 L1478.6 871.4 L1479.1 870.0 L1479.5 868.5 L1479.9 867.0 L1480.3 865.6 L1480.6 864.2 L1481.0 862.7 L1481.4 861.3 L1481.7 859.8 L1482.1 858.3 L1482.4 856.8 L1482.7 855.2 L1483.1 853.7 L1483.4 852.1 L1483.7 850.5 L1484.0 848.9 L1484.3 847.3 L1484.6 845.7 L1484.9 844.1 L1485.2 842.6 L1485.4 841.0 L1485.7 839.5 L1485.9 837.9 L1486.1 836.4 L1486.3 834.9 L1486.5 833.3 L1486.7 831.8 L1486.9 830.3 L1487.1 828.8 L1487.2 827.4 L1487.4 825.9 L1487.5 824.4 L1487.7 822.9 L1487.8 821.5 L1487.9 820.0 L1488.0 818.6 L1488.1 817.2 L1488.2 815.7 L1488.3 814.3 L1488.4 812.8 L1488.4 811.3 L1488.5 809.7 L1488.5 808.2 L1488.6 806.6 L1488.6 804.9 L1488.6 803.3 L1488.6 801.6 L1488.6 799.9 L1488.5 798.3 L1488.5 796.6 L1488.4 795.0 L1488.3 793.3 L1488.2 791.7 L1488.1 790.1 L1488.0 788.5 L1487.8 786.9 L1487.7 785.4 L1487.5 783.9 L1487.4 782.3 L1487.2 780.8 L1487.0 779.3 L1486.8 777.9 L1486.6 776.4 L1486.4 775.0 L1486.2 773.6 L1485.9 772.1 L1485.7 770.6 L1485.4 769.0 L1485.1 767.4 L1484.8 765.8 L1484.4 764.2 L1484.0 762.5 L1483.7 760.8 L1483.2 759.1 L1482.8 757.5 L1482.4 755.9 L1481.9 754.3 L1481.4 752.7 L1480.9 751.2 L1480.3 749.8 L1479.7 748.4 L1479.1 747.0 L1478.4 745.7 L1477.7 744.4 L1476.8 743.1 L1475.9 741.8 L1474.8 740.6 L1473.6 739.5 L1472.4 738.4 L1471.0 737.5 L1469.5 736.6 L1467.9 735.8 L1466.2 735.2 L1464.5 734.7 L1462.7 734.3 L1460.9 734.1 L1459.1 734.0 L1457.4 734.1 L1455.7 734.2 L1454.0 734.5 L1452.4 734.8 L1450.8 735.3 L1449.3 735.9 L1447.8 736.5 L1446.4 737.2 L1445.0 737.9 L1443.6 738.7 L1442.2 739.5 L1440.8 740.4 L1439.4 741.2 L1438.0 742.2 L1436.6 743.1 L1435.2 744.0 L1433.8 744.9 L1432.4 745.9 L1431.0 746.8 L1429.6 747.7 L1428.2 748.6 L1426.9 749.4 L1425.5 750.2Z"/><circle cx="1426.8" cy="752.4" r="2.50"/><circle cx="1442.9" cy="972.0" r="2.50"/><path d="M1423.2 777.7 L1424.4 776.6 L1425.5 775.5 L1426.6 774.4 L1427.8 773.3 L1428.9 772.3 L1430.0 771.2 L1431.1 770.1 L1432.2 769.1 L1433.4 768.1 L1434.5 767.2 L1435.6 766.3 L1436.8 765.4 L1438.0 764.6 L1439.3 763.8 L1440.6 763.1 L1442.0 762.3 L1443.4 761.7 L1444.9 761.0 L1446.4 760.4 L1447.9 759.9 L1449.4 759.4 L1450.8 758.9 L1452.2 758.6 L1453.6 758.3 L1454.9 758.2 L1456.1 758.2 L1457.2 758.4 L1458.3 758.7 L1459.4 759.2 L1460.4 759.8 L1461.4 760.6 L1462.3 761.6 L1463.1 762.7 L1463.8 763.9 L1464.4 765.3 L1464.9 766.7 L1465.4 768.1 L1465.8 769.6 L1466.2 771.1 L1466.6 772.7 L1467.0 774.3 L1467.3 776.0 L1467.7 777.5 L1470.7 776.9 L1470.3 775.3 L1470.0 773.7 L1469.7 772.0 L1469.3 770.4 L1469.0 768.8 L1468.6 767.2 L1468.1 765.6 L1467.6 764.0 L1466.9 762.4 L1466.1 760.9 L1465.1 759.4 L1464.0 758.0 L1462.7 756.9 L1461.3 755.9 L1459.8 755.1 L1458.1 754.5 L1456.4 754.2 L1454.7 754.2 L1453.0 754.4 L1451.3 754.7 L1449.8 755.1 L1448.2 755.5 L1446.6 756.1 L1445.0 756.7 L1443.3 757.3 L1441.8 758.0 L1440.2 758.8 L1438.7 759.6 L1437.3 760.4 L1435.9 761.3 L1434.5 762.2 L1433.3 763.2 L1432.0 764.2 L1430.8 765.2 L1429.7 766.3 L1428.5 767.4 L1427.4 768.5 L1426.3 769.6 L1425.2 770.7 L1424.1 771.9 L1423.0 773.0 L1421.9 774.1 L1420.8 775.1Z"/><circle cx="1422.0" cy="776.4" r="1.75"/><circle cx="1469.2" cy="777.2" r="1.50"/><path d="M1425.5 775.9 L1426.5 777.1 L1427.5 778.3 L1428.5 779.4 L1429.5 780.5 L1430.6 781.6 L1431.6 782.8 L1432.6 783.9 L1433.6 785.0 L1434.6 786.2 L1435.6 787.3 L1436.5 788.5 L1437.5 789.8 L1438.4 791.0 L1439.4 792.2 L1440.2 793.5 L1441.1 794.7 L1441.9 796.0 L1442.7 797.3 L1443.5 798.6 L1444.3 799.8 L1445.0 801.1 L1445.8 802.4 L1446.5 803.7 L1447.3 805.0 L1448.0 806.4 L1448.7 807.8 L1449.5 809.1 L1450.2 810.5 L1450.8 811.9 L1451.5 813.4 L1452.2 814.8 L1452.8 816.2 L1453.4 817.6 L1453.9 819.1 L1454.4 820.5 L1454.9 821.9 L1455.4 823.3 L1455.8 824.8 L1456.2 826.2 L1456.6 827.6 L1456.9 829.1 L1457.3 830.5 L1457.5 832.0 L1457.8 833.5 L1458.0 835.0 L1458.2 836.5 L1458.5 838.0 L1458.6 839.6 L1458.8 841.1 L1459.0 842.6 L1459.2 844.2 L1459.4 845.7 L1459.5 847.3 L1459.7 848.8 L1459.9 850.4 L1460.1 851.9 L1460.3 853.5 L1460.5 855.0 L1463.5 854.6 L1463.3 853.1 L1463.1 851.6 L1462.9 850.0 L1462.8 848.5 L1462.6 846.9 L1462.5 845.4 L1462.3 843.8 L1462.2 842.3 L1462.0 840.7 L1461.9 839.2 L1461.7 837.6 L1461.5 836.1 L1461.3 834.5 L1461.1 833.0 L1460.8 831.4 L1460.6 829.9 L1460.3 828.4 L1459.9 826.8 L1459.6 825.3 L1459.2 823.8 L1458.7 822.3 L1458.3 820.8 L1457.7 819.3 L1457.2 817.8 L1456.6 816.3 L1456.0 814.8 L1455.4 813.4 L1454.7 811.9 L1454.0 810.4 L1453.3 809.0 L1452.6 807.6 L1451.8 806.1 L1451.1 804.7 L1450.3 803.3 L1449.6 802.0 L1448.8 800.6 L1448.1 799.3 L1447.3 798.0 L1446.5 796.7 L1445.7 795.4 L1444.9 794.1 L1444.0 792.8 L1443.1 791.5 L1442.2 790.2 L1441.2 788.9 L1440.3 787.6 L1439.3 786.3 L1438.2 785.1 L1437.2 783.9 L1436.2 782.7 L1435.2 781.6 L1434.2 780.4 L1433.2 779.3 L1432.1 778.2 L1431.1 777.1 L1430.1 775.9 L1429.1 774.8 L1428.1 773.7Z"/><circle cx="1426.8" cy="774.8" r="1.75"/><circle cx="1462.0" cy="854.8" r="1.50"/><path d="M1470.4 816.2 L1470.1 817.7 L1469.8 819.1 L1469.6 820.5 L1469.3 821.9 L1469.1 823.3 L1468.8 824.6 L1468.6 826.0 L1468.3 827.4 L1468.0 828.8 L1467.8 830.3 L1467.5 831.8 L1467.1 833.3 L1466.8 834.9 L1466.4 836.4 L1466.0 838.0 L1465.6 839.5 L1465.2 841.0 L1464.8 842.5 L1464.4 843.9 L1464.0 845.3 L1463.7 846.7 L1463.3 848.0 L1462.9 849.4 L1462.5 850.8 L1462.0 852.2 L1461.6 853.6 L1461.1 855.0 L1460.7 856.5 L1460.2 858.0 L1459.7 859.5 L1459.3 861.0 L1458.8 862.5 L1458.3 864.0 L1457.8 865.6 L1457.2 867.1 L1456.7 868.7 L1456.2 870.3 L1455.6 871.9 L1455.1 873.4 L1454.6 875.0 L1454.0 876.6 L1453.5 878.1 L1453.0 879.6 L1452.4 881.1 L1451.9 882.6 L1451.4 884.0 L1450.9 885.4 L1450.4 886.8 L1449.9 888.1 L1449.4 889.5 L1448.9 890.8 L1448.4 892.2 L1447.9 893.6 L1447.4 895.0 L1446.8 896.4 L1446.3 897.8 L1445.8 899.2 L1445.2 900.6 L1444.7 902.0 L1444.1 903.5 L1443.6 904.9 L1443.0 906.3 L1442.5 907.8 L1441.9 909.2 L1441.4 910.6 L1440.8 912.1 L1440.3 913.5 L1439.7 914.9 L1439.1 916.4 L1438.6 917.8 L1438.0 919.2 L1437.5 920.7 L1436.9 922.1 L1436.4 923.5 L1435.8 924.9 L1435.3 926.4 L1434.8 927.8 L1438.0 929.0 L1438.6 927.6 L1439.1 926.2 L1439.7 924.8 L1440.2 923.4 L1440.8 921.9 L1441.3 920.5 L1441.9 919.1 L1442.4 917.6 L1443.0 916.2 L1443.5 914.8 L1444.1 913.3 L1444.6 911.9 L1445.2 910.5 L1445.7 909.0 L1446.3 907.6 L1446.9 906.2 L1447.4 904.7 L1447.9 903.3 L1448.5 901.9 L1449.0 900.5 L1449.6 899.0 L1450.1 897.6 L1450.6 896.2 L1451.2 894.8 L1451.7 893.4 L1452.2 892.1 L1452.7 890.7 L1453.2 889.3 L1453.7 888.0 L1454.2 886.6 L1454.7 885.2 L1455.2 883.7 L1455.7 882.3 L1456.3 880.8 L1456.8 879.3 L1457.3 877.7 L1457.9 876.2 L1458.4 874.6 L1459.0 873.0 L1459.5 871.4 L1460.0 869.8 L1460.6 868.2 L1461.1 866.7 L1461.6 865.1 L1462.1 863.6 L1462.6 862.0 L1463.1 860.5 L1463.6 859.0 L1464.0 857.5 L1464.5 856.1 L1464.9 854.6 L1465.4 853.2 L1465.8 851.8 L1466.2 850.4 L1466.6 849.0 L1467.0 847.7 L1467.4 846.3 L1467.8 844.8 L1468.2 843.3 L1468.6 841.8 L1469.0 840.3 L1469.3 838.7 L1469.6 837.1 L1470.0 835.5 L1470.3 833.9 L1470.5 832.4 L1470.8 830.8 L1471.0 829.4 L1471.2 827.9 L1471.4 826.5 L1471.6 825.1 L1471.8 823.7 L1472.0 822.3 L1472.2 820.9 L1472.4 819.5 L1472.6 818.1 L1472.8 816.6Z"/><circle cx="1471.6" cy="816.4" r="1.25"/><circle cx="1436.4" cy="928.4" r="1.75"/><path d="M958.4 925.3 L957.4 926.3 L956.3 927.2 L955.2 928.2 L954.2 929.3 L953.2 930.5 L952.2 931.6 L951.2 932.8 L950.4 934.0 L949.5 935.3 L948.8 936.7 L948.1 938.1 L947.4 939.5 L946.8 940.9 L946.3 942.3 L945.8 943.8 L945.3 945.3 L944.8 946.9 L944.4 948.4 L944.0 950.0 L943.7 951.5 L943.5 953.1 L943.3 954.7 L943.2 956.4 L943.1 958.0 L943.2 959.6 L943.3 961.2 L943.6 962.8 L943.8 964.5 L944.2 966.1 L944.6 967.7 L945.1 969.3 L945.6 970.9 L946.2 972.4 L946.8 973.9 L947.5 975.4 L948.1 976.9 L948.9 978.3 L949.6 979.8 L950.4 981.2 L951.3 982.5 L952.1 983.9 L953.0 985.3 L954.0 986.6 L954.9 987.9 L955.9 989.1 L957.0 990.3 L958.1 991.5 L959.2 992.7 L960.4 993.8 L961.6 994.8 L962.9 995.9 L964.3 996.8 L965.7 997.7 L967.1 998.6 L968.5 999.4 L970.0 1000.1 L971.5 1000.7 L973.0 1001.3 L974.5 1001.7 L976.1 1001.9 L977.7 1002.0 L979.3 1002.1 L980.9 1002.1 L982.6 1001.9 L984.2 1001.5 L985.8 1001.0 L987.5 1000.4 L989.0 999.8 L990.5 999.1 L992.0 998.4 L993.5 997.6 L994.9 996.9 L996.4 996.1 L997.8 995.4 L999.2 994.7 L1000.6 994.0 L1001.9 993.5 L1003.1 993.0 L1004.3 992.7 L1005.4 992.5 L1006.5 992.3 L1007.5 992.1 L1008.6 991.9 L1009.8 991.8 L1011.1 991.8 L1012.4 991.8 L1013.8 991.9 L1015.3 992.1 L1016.7 992.3 L1018.1 992.5 L1019.5 992.8 L1020.8 993.1 L1022.1 993.5 L1023.4 993.7 L1024.7 994.0 L1026.0 994.4 L1027.4 994.8 L1028.7 995.3 L1030.1 995.8 L1031.6 996.3 L1033.1 996.8 L1034.6 997.3 L1036.1 997.9 L1037.7 998.4 L1039.4 998.9 L1041.0 999.4 L1042.7 999.8 L1044.3 1000.2 L1045.9 1000.6 L1047.6 1001.0 L1049.2 1001.3 L1050.8 1001.7 L1052.4 1002.1 L1053.9 1002.4 L1055.5 1002.7 L1057.1 1003.0 L1058.7 1003.2 L1060.4 1003.3 L1062.0 1003.3 L1063.7 1003.2 L1065.4 1003.1 L1067.1 1002.8 L1068.8 1002.4 L1070.4 1002.0 L1072.1 1001.4 L1073.7 1000.9 L1075.2 1000.3 L1076.8 999.6 L1078.3 999.0 L1079.8 998.4 L1081.3 997.8 L1082.8 997.4 L1084.3 996.9 L1085.8 996.5 L1087.4 996.0 L1089.0 995.6 L1090.5 995.1 L1092.1 994.6 L1093.7 994.0 L1095.2 993.3 L1096.7 992.6 L1098.2 991.8 L1099.7 991.1 L1101.1 990.4 L1102.4 989.7 L1103.8 989.1 L1105.0 988.5 L1106.1 988.1 L1107.2 987.9 L1108.2 987.7 L1109.1 987.7 L1110.0 987.5 L1111.1 987.5 L1112.2 987.5 L1113.5 987.7 L1114.8 988.0 L1116.2 988.4 L1117.6 988.8 L1119.1 989.4 L1120.7 990.0 L1122.6 990.5 L1124.3 990.7 L1126.1 990.7 L1127.7 990.6 L1129.3 990.3 L1131.0 990.0 L1132.6 989.5 L1134.2 988.8 L1135.6 987.9 L1136.9 987.0 L1138.3 986.1 L1139.6 985.1 L1141.0 984.1 L1142.4 983.0 L1143.7 981.9 L1145.1 980.8 L1146.3 979.7 L1147.6 978.5 L1148.8 977.3 L1149.9 976.0 L1151.0 974.8 L1152.0 973.5 L1153.0 972.2 L1154.0 970.9 L1154.9 969.5 L1155.7 968.1 L1156.5 966.7 L1157.2 965.3 L1157.9 963.8 L1158.5 962.4 L1159.1 960.9 L1159.5 959.4 L1159.9 957.9 L1160.2 956.3 L1160.4 954.8 L1160.5 953.2 L1160.4 951.6 L1160.3 950.0 L1160.1 948.4 L1159.8 946.8 L1159.4 945.2 L1158.9 943.5 L1158.4 942.0 L1157.8 940.4 L1157.1 938.9 L1156.5 937.4 L1155.7 936.0 L1154.9 934.7 L1154.2 933.4 L1153.3 932.1 L1152.5 930.9 L1151.7 929.7 L1150.8 928.4 L1149.8 927.2 L1148.9 926.0 L1147.9 924.7 L1146.9 923.5 L1146.0 922.2 L1145.0 920.9 L1144.0 919.7 L1143.0 918.4 L1142.0 917.2 L1141.0 915.9 L1140.1 914.7 L1139.2 913.5 L1138.3 914.0 L1139.2 915.3 L1140.1 916.6 L1141.0 918.0 L1141.9 919.3 L1142.8 920.6 L1143.7 921.9 L1144.6 923.2 L1145.5 924.5 L1146.3 925.8 L1147.2 927.1 L1148.1 928.4 L1148.9 929.7 L1149.7 931.0 L1150.4 932.2 L1151.1 933.4 L1151.8 934.7 L1152.5 936.0 L1153.1 937.3 L1153.7 938.7 L1154.3 940.1 L1154.9 941.5 L1155.4 943.0 L1155.9 944.5 L1156.3 946.0 L1156.6 947.5 L1156.9 948.9 L1157.0 950.3 L1157.1 951.7 L1157.0 953.1 L1156.9 954.5 L1156.7 955.8 L1156.5 957.1 L1156.2 958.5 L1155.8 959.8 L1155.3 961.1 L1154.7 962.4 L1154.1 963.7 L1153.4 965.0 L1152.7 966.4 L1151.9 967.6 L1151.1 968.9 L1150.2 970.1 L1149.3 971.4 L1148.3 972.5 L1147.3 973.7 L1146.2 974.8 L1145.1 975.9 L1143.9 977.0 L1142.7 978.1 L1141.4 979.1 L1140.1 980.1 L1138.8 981.1 L1137.4 982.1 L1136.1 983.0 L1134.8 983.8 L1133.6 984.6 L1132.4 985.3 L1131.2 985.8 L1130.1 986.1 L1128.9 986.3 L1127.8 986.1 L1126.7 985.8 L1125.6 985.3 L1124.4 984.7 L1123.3 984.1 L1122.2 983.3 L1120.8 982.4 L1119.3 981.5 L1117.8 980.6 L1116.3 979.8 L1114.6 979.0 L1112.8 978.4 L1110.8 977.9 L1108.8 977.7 L1106.8 977.9 L1104.8 978.3 L1103.0 978.9 L1101.2 979.6 L1099.6 980.4 L1098.1 981.2 L1096.6 982.1 L1095.2 982.9 L1093.8 983.7 L1092.4 984.5 L1091.1 985.2 L1089.7 985.9 L1088.4 986.8 L1087.2 987.6 L1085.8 988.3 L1084.5 989.1 L1083.1 989.9 L1081.7 990.7 L1080.3 991.5 L1078.9 992.3 L1077.4 993.0 L1076.0 993.7 L1074.5 994.4 L1073.0 995.1 L1071.6 995.8 L1070.2 996.4 L1068.8 996.9 L1067.4 997.4 L1066.0 997.8 L1064.7 998.1 L1063.3 998.3 L1061.9 998.3 L1060.6 998.3 L1059.2 998.2 L1057.8 998.0 L1056.4 997.8 L1054.9 997.5 L1053.5 997.2 L1052.0 996.9 L1050.5 996.5 L1049.1 995.9 L1047.6 995.3 L1046.1 994.7 L1044.7 994.1 L1043.2 993.4 L1041.8 992.7 L1040.4 992.0 L1039.1 991.3 L1037.8 990.5 L1036.5 989.7 L1035.3 988.9 L1034.1 988.0 L1032.8 987.2 L1031.4 986.3 L1030.1 985.4 L1028.6 984.6 L1027.1 983.8 L1025.6 983.0 L1023.9 982.5 L1022.2 982.0 L1020.4 981.5 L1018.7 981.1 L1017.0 980.8 L1015.2 980.5 L1013.4 980.3 L1011.5 980.1 L1009.6 980.1 L1007.6 980.1 L1005.6 980.3 L1003.6 980.7 L1001.7 981.4 L999.9 982.3 L998.3 983.2 L996.7 984.3 L995.2 985.4 L993.8 986.5 L992.6 987.5 L991.3 988.6 L990.1 989.6 L988.8 990.7 L987.7 991.7 L986.5 992.7 L985.4 993.7 L984.3 994.6 L983.1 995.4 L982.0 996.1 L980.9 996.8 L979.9 997.3 L978.8 997.7 L977.7 998.0 L976.5 998.0 L975.3 997.8 L974.1 997.6 L972.8 997.2 L971.5 996.6 L970.2 996.0 L968.9 995.4 L967.6 994.6 L966.3 993.8 L965.1 993.0 L963.9 992.1 L962.7 991.1 L961.6 990.2 L960.5 989.1 L959.5 988.1 L958.5 987.0 L957.5 985.8 L956.6 984.6 L955.7 983.4 L954.8 982.1 L953.9 980.8 L953.1 979.6 L952.3 978.2 L951.6 976.9 L950.9 975.5 L950.2 974.2 L949.6 972.8 L949.0 971.3 L948.4 969.9 L947.9 968.4 L947.5 966.9 L947.1 965.4 L946.8 963.9 L946.5 962.4 L946.3 960.9 L946.2 959.4 L946.1 957.9 L946.1 956.4 L946.2 955.0 L946.3 953.5 L946.5 952.0 L946.7 950.5 L947.0 949.0 L947.3 947.5 L947.7 946.0 L948.1 944.5 L948.5 943.1 L949.0 941.7 L949.5 940.3 L950.0 938.9 L950.6 937.6 L951.3 936.3 L952.0 935.0 L952.7 933.8 L953.5 932.6 L954.4 931.5 L955.3 930.3 L956.2 929.2 L957.2 928.1 L958.2 927.1 L959.1 925.9Z"/><circle cx="958.8" cy="925.6" r="0.50"/><circle cx="1138.8" cy="913.8" r="0.50"/><path d="M702.6 803.2 L703.5 802.0 L704.5 800.7 L705.4 799.5 L706.3 798.2 L707.2 796.9 L708.1 795.7 L709.1 794.4 L710.0 793.1 L710.9 791.8 L711.8 790.6 L712.7 789.3 L713.6 788.0 L714.5 786.7 L715.4 785.5 L716.3 784.2 L717.3 783.0 L718.2 781.7 L719.1 780.5 L720.0 779.3 L720.9 778.1 L721.9 776.9 L722.8 775.7 L723.7 774.5 L724.7 773.4 L725.6 772.3 L726.6 771.2 L727.5 770.1 L728.5 769.0 L729.5 767.9 L730.6 766.8 L731.6 765.7 L732.7 764.7 L733.8 763.6 L734.8 762.5 L736.0 761.4 L737.1 760.4 L738.2 759.3 L739.3 758.3 L740.4 757.3 L741.5 756.3 L742.6 755.3 L743.7 754.4 L744.9 753.4 L746.0 752.5 L747.2 751.6 L748.3 750.8 L749.5 749.9 L750.7 749.1 L751.9 748.3 L753.2 747.5 L754.4 746.7 L755.7 746.0 L757.0 745.3 L758.3 744.6 L759.6 744.0 L760.9 743.4 L762.2 742.8 L763.6 742.3 L764.9 741.7 L766.3 741.2 L767.7 740.8 L769.1 740.4 L770.5 739.9 L771.9 739.6 L773.4 739.2 L774.9 738.8 L776.4 738.5 L777.9 738.2 L779.5 737.9 L781.0 737.6 L782.6 737.3 L784.2 737.1 L785.7 736.8 L787.3 736.6 L788.9 736.4 L790.5 736.2 L792.0 736.0 L793.6 735.9 L795.1 735.7 L796.7 735.6 L798.2 735.5 L799.7 735.4 L801.2 735.3 L802.7 735.2 L804.2 735.1 L805.7 735.1 L807.2 735.1 L808.7 735.0 L810.2 735.0 L811.7 735.0 L813.3 735.1 L814.8 735.1 L816.3 735.2 L817.8 735.3 L819.3 735.4 L820.8 735.5 L822.2 735.7 L823.7 735.9 L825.1 736.0 L826.6 736.3 L828.0 736.5 L829.5 736.7 L830.9 737.0 L832.4 737.2 L833.8 737.5 L835.3 737.8 L836.7 738.1 L838.2 738.4 L839.6 738.8 L841.1 739.1 L842.6 739.4 L844.0 739.8 L845.5 740.2 L846.9 740.5 L848.4 740.9 L849.9 741.3 L851.3 741.7 L852.8 742.1 L854.2 742.6 L855.7 743.0 L857.2 743.5 L858.6 743.9 L860.1 744.4 L861.6 744.9 L863.0 745.4 L864.5 745.9 L865.9 746.5 L867.4 747.0 L868.8 747.6 L870.3 748.1 L871.7 748.7 L873.1 749.3 L874.5 749.9 L875.9 750.5 L877.3 751.1 L878.7 751.7 L880.1 752.4 L881.4 753.0 L882.8 753.7 L884.1 754.4 L885.5 755.1 L886.8 755.8 L888.1 756.5 L889.5 757.2 L890.8 758.0 L892.1 758.8 L893.4 759.6 L894.8 760.4 L896.1 761.2 L897.3 762.1 L898.6 762.9 L899.9 763.7 L901.2 764.6 L902.4 765.5 L903.6 766.4 L904.9 767.2 L906.1 768.1 L907.3 769.0 L908.4 769.9 L909.6 770.8 L910.7 771.7 L911.9 772.6 L913.0 773.5 L914.1 774.4 L915.2 775.4 L916.3 776.3 L917.4 777.3 L918.6 778.4 L919.7 779.4 L920.7 780.5 L921.8 781.6 L922.9 782.7 L923.9 783.8 L924.9 785.0 L925.9 786.1 L926.9 787.2 L927.8 788.4 L928.8 789.5 L929.7 790.7 L930.7 791.9 L931.6 793.0 L932.6 794.2 L933.6 795.3 L934.5 796.5 L935.5 797.7 L936.5 798.9 L937.5 800.0 L940.5 797.4 L939.5 796.2 L938.5 795.1 L937.6 794.0 L936.6 792.8 L935.7 791.6 L934.7 790.5 L933.8 789.3 L932.8 788.2 L931.9 787.0 L930.9 785.8 L929.9 784.7 L928.9 783.5 L927.9 782.3 L926.9 781.2 L925.8 780.0 L924.7 778.8 L923.6 777.7 L922.4 776.6 L921.3 775.5 L920.1 774.4 L919.0 773.3 L917.8 772.3 L916.7 771.3 L915.5 770.4 L914.4 769.4 L913.2 768.5 L912.1 767.6 L910.9 766.7 L909.7 765.8 L908.5 764.9 L907.2 764.0 L906.0 763.1 L904.7 762.2 L903.4 761.3 L902.1 760.4 L900.8 759.6 L899.5 758.7 L898.2 757.8 L896.9 757.0 L895.5 756.2 L894.2 755.4 L892.8 754.6 L891.4 753.8 L890.1 753.0 L888.7 752.2 L887.3 751.5 L885.9 750.8 L884.5 750.1 L883.2 749.4 L881.8 748.7 L880.4 748.1 L879.0 747.5 L877.5 746.8 L876.1 746.2 L874.7 745.6 L873.2 745.0 L871.7 744.4 L870.3 743.8 L868.8 743.3 L867.3 742.7 L865.8 742.2 L864.3 741.7 L862.8 741.1 L861.4 740.6 L859.9 740.1 L858.4 739.7 L856.9 739.2 L855.4 738.7 L853.9 738.3 L852.4 737.9 L850.9 737.5 L849.4 737.1 L847.9 736.7 L846.5 736.3 L845.0 735.9 L843.5 735.5 L842.0 735.2 L840.5 734.9 L839.0 734.5 L837.6 734.2 L836.1 733.9 L834.6 733.6 L833.1 733.3 L831.6 733.0 L830.2 732.8 L828.7 732.5 L827.2 732.3 L825.7 732.1 L824.2 731.9 L822.7 731.7 L821.1 731.6 L819.6 731.4 L818.1 731.3 L816.5 731.2 L814.9 731.1 L813.4 731.1 L811.8 731.0 L810.2 731.0 L808.7 731.0 L807.1 731.1 L805.6 731.1 L804.0 731.1 L802.5 731.2 L801.0 731.3 L799.4 731.4 L797.9 731.5 L796.3 731.6 L794.8 731.8 L793.2 731.9 L791.6 732.1 L790.0 732.2 L788.4 732.4 L786.8 732.6 L785.2 732.9 L783.6 733.1 L781.9 733.4 L780.3 733.6 L778.7 733.9 L777.1 734.2 L775.6 734.6 L774.0 734.9 L772.5 735.3 L770.9 735.7 L769.4 736.1 L767.9 736.5 L766.4 737.0 L765.0 737.5 L763.5 738.0 L762.1 738.5 L760.7 739.1 L759.3 739.7 L757.9 740.4 L756.5 741.1 L755.1 741.8 L753.7 742.5 L752.4 743.3 L751.1 744.1 L749.8 744.9 L748.5 745.8 L747.2 746.6 L746.0 747.5 L744.8 748.4 L743.5 749.4 L742.4 750.3 L741.2 751.3 L740.0 752.3 L738.8 753.3 L737.7 754.3 L736.6 755.4 L735.4 756.4 L734.3 757.5 L733.2 758.6 L732.1 759.7 L730.9 760.8 L729.8 761.8 L728.8 762.9 L727.7 764.0 L726.6 765.2 L725.6 766.3 L724.6 767.4 L723.6 768.5 L722.6 769.7 L721.6 770.8 L720.6 772.0 L719.7 773.2 L718.7 774.4 L717.8 775.6 L716.8 776.8 L715.9 778.1 L715.0 779.3 L714.0 780.6 L713.1 781.9 L712.2 783.1 L711.3 784.4 L710.4 785.7 L709.4 787.0 L708.5 788.2 L707.6 789.5 L706.7 790.8 L705.8 792.1 L704.9 793.3 L704.0 794.6 L703.1 795.8 L702.2 797.1 L701.2 798.3 L700.3 799.6 L699.4 800.8Z"/><circle cx="701.0" cy="802.0" r="2.00"/><circle cx="939.0" cy="798.7" r="2.00"/><path d="M937.5 797.4 L936.5 798.5 L935.5 799.7 L934.5 800.8 L933.6 801.9 L932.6 803.0 L931.7 804.2 L930.7 805.3 L929.8 806.4 L928.8 807.5 L927.9 808.6 L926.9 809.8 L925.9 810.9 L924.9 812.0 L923.9 813.1 L922.9 814.3 L921.8 815.4 L920.7 816.6 L919.6 817.7 L918.5 818.8 L917.4 819.9 L916.4 821.0 L915.3 822.0 L914.2 823.1 L913.1 824.1 L912.1 825.1 L911.0 826.1 L910.0 827.0 L908.9 828.0 L907.8 829.0 L906.7 830.0 L905.6 831.1 L904.5 832.1 L903.3 833.1 L902.2 834.1 L901.0 835.1 L899.8 836.1 L898.6 837.1 L897.4 838.1 L896.2 839.1 L895.0 840.1 L893.8 841.1 L892.6 842.0 L891.4 843.0 L890.1 843.9 L888.9 844.8 L887.6 845.7 L886.4 846.6 L885.2 847.4 L883.9 848.3 L882.7 849.1 L881.4 849.9 L880.2 850.7 L878.9 851.5 L877.7 852.2 L876.4 853.0 L875.1 853.8 L873.9 854.5 L872.6 855.3 L871.3 856.0 L870.0 856.7 L868.7 857.4 L867.4 858.2 L866.0 858.8 L864.7 859.5 L863.4 860.2 L862.0 860.9 L860.7 861.5 L859.3 862.1 L858.0 862.7 L856.6 863.3 L855.2 863.9 L853.8 864.5 L852.4 865.0 L851.0 865.6 L849.6 866.1 L848.2 866.6 L846.8 867.1 L845.4 867.5 L844.0 868.0 L842.6 868.4 L841.1 868.8 L839.7 869.2 L838.2 869.6 L836.8 870.0 L835.3 870.4 L833.8 870.8 L832.4 871.1 L830.9 871.4 L829.4 871.8 L827.9 872.1 L826.3 872.4 L824.8 872.6 L823.3 872.9 L821.8 873.2 L820.3 873.4 L818.7 873.6 L817.2 873.8 L815.7 874.0 L814.2 874.1 L812.6 874.3 L811.1 874.4 L809.6 874.5 L808.1 874.6 L806.6 874.6 L805.1 874.6 L803.6 874.7 L802.1 874.7 L800.6 874.6 L799.1 874.6 L797.6 874.5 L796.1 874.5 L794.6 874.4 L793.2 874.3 L791.7 874.1 L790.2 874.0 L788.6 873.8 L787.1 873.7 L785.6 873.5 L784.1 873.3 L782.6 873.0 L781.1 872.8 L779.6 872.5 L778.1 872.2 L776.6 871.9 L775.1 871.6 L773.7 871.3 L772.2 870.9 L770.7 870.6 L769.3 870.2 L767.9 869.7 L766.5 869.3 L765.1 868.8 L763.7 868.4 L762.4 867.9 L761.1 867.3 L759.7 866.8 L758.5 866.2 L757.2 865.6 L755.9 865.0 L754.6 864.3 L753.4 863.6 L752.1 862.8 L750.9 862.1 L749.7 861.2 L748.5 860.4 L747.3 859.5 L746.1 858.6 L744.9 857.6 L743.7 856.7 L742.6 855.7 L741.5 854.7 L740.4 853.6 L739.2 852.6 L738.2 851.5 L737.1 850.4 L736.0 849.3 L734.9 848.2 L733.9 847.1 L732.9 846.0 L731.8 844.8 L730.8 843.7 L729.8 842.5 L728.8 841.4 L727.9 840.3 L726.9 839.1 L725.9 838.0 L725.0 836.8 L724.1 835.7 L723.1 834.5 L722.2 833.3 L721.3 832.1 L720.4 830.9 L719.6 829.7 L718.7 828.4 L717.9 827.2 L717.1 825.9 L716.3 824.6 L715.5 823.4 L714.7 822.1 L714.0 820.8 L713.2 819.5 L712.5 818.2 L711.7 816.8 L711.0 815.5 L710.2 814.2 L709.5 812.9 L708.8 811.6 L708.0 810.2 L707.3 808.9 L706.5 807.6 L705.8 806.3 L705.0 804.9 L704.3 803.6 L703.5 802.3 L702.7 801.0 L699.3 803.0 L700.1 804.3 L700.8 805.6 L701.6 806.9 L702.3 808.2 L703.1 809.5 L703.8 810.9 L704.5 812.2 L705.3 813.5 L706.0 814.8 L706.7 816.2 L707.5 817.5 L708.2 818.8 L709.0 820.1 L709.7 821.5 L710.5 822.8 L711.3 824.1 L712.1 825.4 L712.9 826.7 L713.7 828.1 L714.5 829.4 L715.4 830.7 L716.3 831.9 L717.2 833.2 L718.1 834.5 L719.0 835.7 L720.0 836.9 L720.9 838.2 L721.9 839.3 L722.9 840.5 L723.8 841.7 L724.8 842.9 L725.8 844.0 L726.8 845.2 L727.8 846.3 L728.9 847.5 L729.9 848.7 L731.0 849.8 L732.0 851.0 L733.1 852.1 L734.2 853.2 L735.3 854.3 L736.5 855.5 L737.6 856.5 L738.8 857.6 L740.0 858.7 L741.2 859.7 L742.4 860.7 L743.6 861.7 L744.9 862.7 L746.1 863.6 L747.4 864.5 L748.7 865.4 L750.0 866.2 L751.4 867.0 L752.7 867.8 L754.1 868.5 L755.4 869.2 L756.8 869.9 L758.2 870.5 L759.6 871.0 L761.0 871.6 L762.4 872.1 L763.8 872.6 L765.3 873.1 L766.7 873.6 L768.2 874.0 L769.7 874.4 L771.2 874.8 L772.7 875.2 L774.3 875.5 L775.8 875.9 L777.3 876.2 L778.9 876.5 L780.4 876.7 L782.0 877.0 L783.5 877.2 L785.1 877.4 L786.7 877.6 L788.2 877.8 L789.8 878.0 L791.3 878.1 L792.8 878.2 L794.4 878.4 L795.9 878.5 L797.4 878.5 L799.0 878.6 L800.5 878.6 L802.0 878.7 L803.6 878.7 L805.1 878.6 L806.7 878.6 L808.3 878.6 L809.8 878.5 L811.4 878.4 L813.0 878.2 L814.6 878.1 L816.1 877.9 L817.7 877.8 L819.3 877.6 L820.8 877.3 L822.4 877.1 L824.0 876.8 L825.5 876.6 L827.1 876.3 L828.6 876.0 L830.2 875.7 L831.7 875.3 L833.2 875.0 L834.8 874.6 L836.3 874.3 L837.8 873.9 L839.3 873.5 L840.8 873.1 L842.2 872.7 L843.7 872.2 L845.2 871.8 L846.6 871.3 L848.1 870.9 L849.5 870.4 L851.0 869.9 L852.4 869.3 L853.9 868.8 L855.3 868.2 L856.8 867.6 L858.2 867.0 L859.6 866.4 L861.0 865.8 L862.4 865.1 L863.8 864.5 L865.1 863.8 L866.5 863.1 L867.9 862.4 L869.2 861.7 L870.6 861.0 L871.9 860.2 L873.2 859.5 L874.6 858.7 L875.9 858.0 L877.2 857.2 L878.5 856.4 L879.8 855.7 L881.0 854.9 L882.3 854.1 L883.6 853.3 L884.9 852.4 L886.1 851.6 L887.4 850.7 L888.7 849.9 L890.0 849.0 L891.2 848.0 L892.5 847.1 L893.8 846.1 L895.0 845.2 L896.3 844.2 L897.5 843.2 L898.8 842.2 L900.0 841.2 L901.2 840.2 L902.4 839.2 L903.6 838.1 L904.8 837.1 L906.0 836.1 L907.1 835.0 L908.3 834.0 L909.4 833.0 L910.5 832.0 L911.6 831.0 L912.7 830.0 L913.8 829.0 L914.8 828.0 L915.9 827.0 L917.0 826.0 L918.0 824.9 L919.1 823.8 L920.3 822.7 L921.4 821.6 L922.5 820.5 L923.6 819.3 L924.7 818.2 L925.8 817.0 L926.9 815.8 L927.9 814.7 L928.9 813.5 L929.9 812.4 L930.9 811.2 L931.9 810.1 L932.8 809.0 L933.8 807.9 L934.7 806.8 L935.7 805.6 L936.6 804.5 L937.6 803.4 L938.5 802.3 L939.5 801.2 L940.5 800.0Z"/><circle cx="939.0" cy="798.7" r="2.00"/><circle cx="701.0" cy="802.0" r="2.00"/><path d="M1135.4 802.4 L1136.5 801.3 L1137.6 800.2 L1138.7 799.1 L1139.8 798.0 L1140.8 796.9 L1141.9 795.8 L1143.0 794.7 L1144.0 793.6 L1145.1 792.5 L1146.2 791.4 L1147.2 790.3 L1148.3 789.2 L1149.4 788.1 L1150.4 787.0 L1151.5 785.9 L1152.6 784.9 L1153.7 783.8 L1154.8 782.7 L1155.9 781.7 L1157.0 780.6 L1158.1 779.6 L1159.3 778.6 L1160.4 777.6 L1161.6 776.6 L1162.8 775.6 L1164.0 774.6 L1165.1 773.7 L1166.3 772.8 L1167.5 771.9 L1168.6 771.0 L1169.8 770.1 L1171.0 769.3 L1172.1 768.4 L1173.3 767.6 L1174.4 766.7 L1175.6 765.9 L1176.8 765.1 L1178.0 764.3 L1179.2 763.4 L1180.4 762.6 L1181.6 761.8 L1182.8 761.1 L1184.1 760.3 L1185.4 759.5 L1186.6 758.7 L1187.9 758.0 L1189.3 757.3 L1190.6 756.5 L1192.0 755.8 L1193.4 755.1 L1194.8 754.4 L1196.2 753.7 L1197.7 753.1 L1199.1 752.4 L1200.6 751.8 L1202.0 751.2 L1203.4 750.7 L1204.8 750.1 L1206.2 749.6 L1207.5 749.1 L1208.9 748.6 L1210.2 748.1 L1211.6 747.7 L1212.9 747.2 L1214.4 746.7 L1215.8 746.3 L1217.2 745.8 L1218.7 745.4 L1220.2 744.9 L1221.6 744.5 L1223.1 744.0 L1224.7 743.6 L1226.2 743.2 L1227.7 742.7 L1229.2 742.3 L1230.8 741.9 L1232.3 741.5 L1233.9 741.2 L1235.4 740.8 L1237.0 740.4 L1238.5 740.1 L1240.0 739.8 L1241.6 739.5 L1243.1 739.2 L1244.6 738.9 L1246.1 738.6 L1247.6 738.4 L1249.1 738.2 L1250.5 738.0 L1252.0 737.8 L1253.4 737.6 L1254.8 737.5 L1256.2 737.3 L1257.6 737.2 L1259.0 737.2 L1260.4 737.1 L1261.9 737.1 L1263.3 737.1 L1264.8 737.2 L1266.3 737.3 L1267.9 737.4 L1269.5 737.5 L1271.0 737.7 L1272.6 737.9 L1274.1 738.2 L1275.6 738.4 L1277.1 738.8 L1278.6 739.1 L1280.1 739.4 L1281.6 739.8 L1283.1 740.2 L1284.5 740.7 L1286.0 741.1 L1287.4 741.6 L1288.8 742.1 L1290.2 742.6 L1291.6 743.1 L1293.0 743.6 L1294.4 744.1 L1295.7 744.7 L1297.1 745.2 L1298.4 745.8 L1299.7 746.3 L1301.0 746.9 L1302.3 747.5 L1303.7 748.0 L1305.0 748.6 L1306.4 749.3 L1307.7 749.9 L1309.1 750.5 L1310.4 751.2 L1311.8 751.9 L1313.2 752.7 L1314.5 753.4 L1315.8 754.2 L1317.1 754.9 L1318.4 755.7 L1319.7 756.5 L1320.9 757.3 L1322.2 758.2 L1323.4 759.0 L1324.6 759.9 L1325.8 760.7 L1327.0 761.6 L1328.1 762.5 L1329.3 763.4 L1330.4 764.3 L1331.5 765.2 L1332.7 766.2 L1333.8 767.1 L1334.9 768.0 L1336.0 769.0 L1337.1 770.0 L1338.2 771.0 L1339.3 772.0 L1340.4 773.1 L1341.4 774.1 L1342.5 775.2 L1343.5 776.3 L1344.6 777.5 L1345.6 778.6 L1346.6 779.8 L1347.6 781.0 L1348.6 782.1 L1349.5 783.3 L1350.5 784.6 L1351.4 785.8 L1352.4 787.0 L1353.3 788.2 L1354.3 789.4 L1355.2 790.7 L1356.2 791.9 L1357.2 793.1 L1358.1 794.4 L1359.1 795.6 L1360.1 796.8 L1361.1 798.1 L1362.1 799.3 L1365.1 796.7 L1364.2 795.5 L1363.2 794.3 L1362.2 793.1 L1361.3 791.9 L1360.3 790.7 L1359.4 789.5 L1358.4 788.2 L1357.5 787.0 L1356.5 785.8 L1355.6 784.5 L1354.6 783.3 L1353.6 782.1 L1352.6 780.8 L1351.6 779.6 L1350.6 778.4 L1349.6 777.2 L1348.6 776.0 L1347.5 774.8 L1346.5 773.6 L1345.4 772.5 L1344.3 771.3 L1343.2 770.2 L1342.0 769.1 L1340.9 768.1 L1339.8 767.0 L1338.6 766.0 L1337.5 765.0 L1336.4 764.0 L1335.2 763.1 L1334.1 762.1 L1332.9 761.2 L1331.7 760.3 L1330.6 759.3 L1329.4 758.4 L1328.2 757.5 L1326.9 756.6 L1325.7 755.7 L1324.4 754.9 L1323.1 754.0 L1321.9 753.2 L1320.5 752.3 L1319.2 751.5 L1317.8 750.7 L1316.5 749.9 L1315.1 749.1 L1313.7 748.4 L1312.2 747.7 L1310.8 747.0 L1309.4 746.3 L1308.0 745.6 L1306.7 745.0 L1305.3 744.4 L1303.9 743.8 L1302.6 743.2 L1301.3 742.6 L1299.9 742.1 L1298.6 741.5 L1297.2 741.0 L1295.8 740.4 L1294.4 739.9 L1293.0 739.3 L1291.6 738.8 L1290.1 738.3 L1288.6 737.8 L1287.2 737.3 L1285.7 736.8 L1284.2 736.4 L1282.6 736.0 L1281.1 735.6 L1279.5 735.2 L1278.0 734.8 L1276.4 734.5 L1274.8 734.2 L1273.2 734.0 L1271.5 733.7 L1269.9 733.5 L1268.2 733.4 L1266.6 733.3 L1265.0 733.2 L1263.4 733.1 L1261.9 733.1 L1260.3 733.1 L1258.8 733.2 L1257.3 733.2 L1255.9 733.4 L1254.4 733.5 L1253.0 733.6 L1251.5 733.8 L1250.0 734.0 L1248.5 734.2 L1247.0 734.4 L1245.4 734.7 L1243.9 735.0 L1242.4 735.2 L1240.8 735.5 L1239.2 735.9 L1237.7 736.2 L1236.1 736.5 L1234.5 736.9 L1232.9 737.3 L1231.4 737.7 L1229.8 738.1 L1228.2 738.5 L1226.7 738.9 L1225.1 739.3 L1223.6 739.7 L1222.0 740.2 L1220.5 740.6 L1219.0 741.1 L1217.5 741.5 L1216.0 742.0 L1214.5 742.5 L1213.1 742.9 L1211.7 743.4 L1210.3 743.9 L1208.9 744.4 L1207.5 744.8 L1206.2 745.3 L1204.8 745.8 L1203.4 746.4 L1201.9 746.9 L1200.5 747.5 L1199.0 748.1 L1197.5 748.7 L1196.0 749.4 L1194.5 750.1 L1193.0 750.8 L1191.6 751.5 L1190.1 752.3 L1188.7 753.0 L1187.3 753.8 L1186.0 754.5 L1184.6 755.3 L1183.3 756.1 L1182.0 756.9 L1180.7 757.7 L1179.4 758.5 L1178.2 759.3 L1176.9 760.1 L1175.7 761.0 L1174.5 761.8 L1173.3 762.6 L1172.1 763.5 L1170.9 764.3 L1169.7 765.2 L1168.6 766.1 L1167.4 766.9 L1166.2 767.8 L1165.1 768.7 L1163.9 769.6 L1162.7 770.6 L1161.5 771.5 L1160.2 772.5 L1159.0 773.5 L1157.8 774.5 L1156.6 775.6 L1155.4 776.6 L1154.3 777.7 L1153.1 778.8 L1152.0 779.8 L1150.9 780.9 L1149.8 782.0 L1148.7 783.1 L1147.6 784.2 L1146.5 785.3 L1145.4 786.4 L1144.3 787.5 L1143.3 788.6 L1142.2 789.7 L1141.2 790.8 L1140.1 791.9 L1139.0 793.0 L1138.0 794.1 L1136.9 795.2 L1135.8 796.3 L1134.8 797.4 L1133.7 798.5 L1132.6 799.6Z"/><circle cx="1134.0" cy="801.0" r="2.00"/><circle cx="1363.6" cy="798.0" r="2.00"/><path d="M1361.9 797.0 L1361.1 798.3 L1360.4 799.6 L1359.6 801.0 L1358.9 802.3 L1358.2 803.6 L1357.5 804.9 L1356.8 806.2 L1356.0 807.5 L1355.3 808.9 L1354.6 810.2 L1353.9 811.5 L1353.2 812.8 L1352.5 814.1 L1351.7 815.4 L1351.0 816.7 L1350.2 817.9 L1349.4 819.2 L1348.6 820.5 L1347.8 821.8 L1347.0 823.0 L1346.1 824.3 L1345.3 825.5 L1344.4 826.7 L1343.5 828.0 L1342.6 829.2 L1341.7 830.4 L1340.7 831.6 L1339.8 832.8 L1338.9 834.1 L1337.9 835.3 L1336.9 836.5 L1335.9 837.7 L1334.9 839.0 L1333.9 840.2 L1332.9 841.4 L1331.9 842.5 L1330.8 843.7 L1329.8 844.9 L1328.7 846.0 L1327.6 847.1 L1326.6 848.2 L1325.5 849.2 L1324.4 850.2 L1323.3 851.2 L1322.2 852.1 L1321.0 853.1 L1319.9 854.0 L1318.7 854.8 L1317.5 855.6 L1316.2 856.4 L1315.0 857.2 L1313.7 858.0 L1312.4 858.7 L1311.0 859.4 L1309.7 860.0 L1308.3 860.7 L1306.9 861.3 L1305.5 861.9 L1304.1 862.4 L1302.7 863.0 L1301.3 863.5 L1299.9 864.0 L1298.5 864.4 L1297.0 864.9 L1295.6 865.3 L1294.2 865.7 L1292.7 866.1 L1291.3 866.5 L1289.9 866.8 L1288.4 867.2 L1287.0 867.5 L1285.5 867.8 L1284.0 868.1 L1282.6 868.4 L1281.1 868.7 L1279.6 868.9 L1278.1 869.2 L1276.7 869.4 L1275.2 869.5 L1273.7 869.7 L1272.2 869.8 L1270.8 869.9 L1269.3 870.0 L1267.8 870.0 L1266.3 870.0 L1264.7 870.0 L1263.2 870.0 L1261.6 869.9 L1260.1 869.8 L1258.5 869.7 L1257.0 869.6 L1255.5 869.5 L1254.0 869.3 L1252.5 869.1 L1251.1 868.9 L1249.6 868.7 L1248.2 868.4 L1246.8 868.2 L1245.3 867.9 L1243.9 867.6 L1242.4 867.3 L1240.9 867.0 L1239.4 866.6 L1237.9 866.3 L1236.4 865.9 L1234.9 865.5 L1233.4 865.1 L1231.8 864.6 L1230.3 864.2 L1228.8 863.8 L1227.3 863.3 L1225.7 862.8 L1224.2 862.3 L1222.7 861.9 L1221.2 861.4 L1219.7 860.9 L1218.2 860.3 L1216.8 859.8 L1215.3 859.3 L1213.9 858.8 L1212.4 858.2 L1211.0 857.7 L1209.6 857.1 L1208.1 856.5 L1206.7 855.9 L1205.2 855.3 L1203.8 854.7 L1202.3 854.1 L1200.9 853.5 L1199.4 852.8 L1198.0 852.2 L1196.6 851.5 L1195.1 850.9 L1193.7 850.2 L1192.3 849.5 L1190.9 848.8 L1189.5 848.1 L1188.2 847.4 L1186.8 846.7 L1185.5 846.0 L1184.2 845.3 L1183.0 844.6 L1181.7 843.9 L1180.4 843.2 L1179.1 842.4 L1177.8 841.6 L1176.5 840.7 L1175.2 839.9 L1173.9 839.0 L1172.6 838.0 L1171.3 837.1 L1170.0 836.1 L1168.8 835.1 L1167.6 834.1 L1166.4 833.1 L1165.2 832.1 L1164.0 831.1 L1162.9 830.1 L1161.8 829.0 L1160.7 828.0 L1159.6 827.0 L1158.5 826.0 L1157.5 825.0 L1156.5 824.0 L1155.4 822.9 L1154.4 821.9 L1153.3 820.8 L1152.2 819.7 L1151.2 818.6 L1150.1 817.5 L1149.1 816.4 L1148.0 815.2 L1147.0 814.0 L1146.0 812.8 L1145.0 811.6 L1144.0 810.4 L1143.1 809.3 L1142.1 808.1 L1141.2 806.9 L1140.3 805.7 L1139.4 804.5 L1138.4 803.3 L1137.5 802.1 L1136.5 800.9 L1135.5 799.7 L1132.5 802.3 L1133.4 803.5 L1134.4 804.6 L1135.3 805.8 L1136.2 807.0 L1137.1 808.2 L1138.1 809.4 L1139.0 810.6 L1139.9 811.8 L1140.9 813.0 L1141.9 814.2 L1142.9 815.4 L1143.9 816.6 L1145.0 817.8 L1146.1 819.0 L1147.2 820.2 L1148.3 821.4 L1149.4 822.5 L1150.4 823.6 L1151.5 824.7 L1152.6 825.8 L1153.7 826.8 L1154.7 827.8 L1155.8 828.9 L1156.8 829.9 L1157.9 830.9 L1159.1 832.0 L1160.2 833.0 L1161.4 834.1 L1162.6 835.1 L1163.8 836.2 L1165.0 837.2 L1166.3 838.2 L1167.6 839.3 L1168.9 840.3 L1170.3 841.3 L1171.6 842.2 L1173.0 843.2 L1174.3 844.1 L1175.7 844.9 L1177.0 845.8 L1178.4 846.6 L1179.7 847.4 L1181.0 848.1 L1182.3 848.8 L1183.6 849.6 L1185.0 850.3 L1186.3 851.0 L1187.7 851.7 L1189.1 852.4 L1190.5 853.1 L1192.0 853.8 L1193.4 854.5 L1194.9 855.2 L1196.3 855.8 L1197.8 856.5 L1199.3 857.1 L1200.7 857.8 L1202.2 858.4 L1203.7 859.0 L1205.2 859.6 L1206.6 860.2 L1208.1 860.8 L1209.6 861.4 L1211.0 862.0 L1212.5 862.5 L1214.0 863.0 L1215.4 863.6 L1216.9 864.1 L1218.4 864.6 L1219.9 865.1 L1221.5 865.7 L1223.0 866.2 L1224.5 866.6 L1226.1 867.1 L1227.6 867.6 L1229.2 868.1 L1230.7 868.5 L1232.3 868.9 L1233.8 869.3 L1235.4 869.8 L1236.9 870.1 L1238.5 870.5 L1240.0 870.9 L1241.5 871.2 L1243.0 871.5 L1244.5 871.8 L1246.0 872.1 L1247.5 872.4 L1249.0 872.6 L1250.5 872.9 L1252.0 873.1 L1253.5 873.3 L1255.1 873.4 L1256.6 873.6 L1258.2 873.7 L1259.8 873.8 L1261.4 873.9 L1263.1 874.0 L1264.7 874.0 L1266.3 874.0 L1267.9 874.0 L1269.4 874.0 L1271.0 873.9 L1272.5 873.8 L1274.1 873.7 L1275.6 873.5 L1277.2 873.3 L1278.7 873.1 L1280.2 872.9 L1281.8 872.6 L1283.3 872.4 L1284.8 872.1 L1286.3 871.8 L1287.8 871.4 L1289.3 871.1 L1290.8 870.7 L1292.3 870.3 L1293.8 870.0 L1295.2 869.6 L1296.7 869.1 L1298.2 868.7 L1299.7 868.2 L1301.1 867.8 L1302.6 867.2 L1304.1 866.7 L1305.6 866.2 L1307.0 865.6 L1308.5 865.0 L1310.0 864.3 L1311.4 863.7 L1312.8 863.0 L1314.3 862.2 L1315.7 861.4 L1317.0 860.7 L1318.4 859.8 L1319.7 859.0 L1321.0 858.1 L1322.3 857.2 L1323.5 856.2 L1324.7 855.2 L1325.9 854.2 L1327.1 853.2 L1328.2 852.1 L1329.4 851.0 L1330.5 849.9 L1331.6 848.8 L1332.7 847.6 L1333.8 846.4 L1334.9 845.2 L1335.9 844.0 L1337.0 842.7 L1338.0 841.5 L1339.0 840.3 L1340.0 839.0 L1341.0 837.8 L1342.0 836.5 L1343.0 835.3 L1343.9 834.1 L1344.9 832.8 L1345.8 831.6 L1346.7 830.3 L1347.6 829.1 L1348.5 827.8 L1349.4 826.5 L1350.3 825.3 L1351.2 824.0 L1352.0 822.6 L1352.8 821.3 L1353.6 820.0 L1354.4 818.7 L1355.2 817.4 L1355.9 816.0 L1356.7 814.7 L1357.4 813.4 L1358.1 812.1 L1358.9 810.8 L1359.6 809.4 L1360.3 808.1 L1361.0 806.8 L1361.7 805.5 L1362.4 804.2 L1363.1 802.9 L1363.9 801.6 L1364.6 800.3 L1365.3 799.0Z"/><circle cx="1363.6" cy="798.0" r="2.00"/><circle cx="1134.0" cy="801.0" r="2.00"/><path clip-path="url(#cle)" d="M701.0 802.0 L701.6 801.2 L702.2 800.4 L702.8 799.6 L703.4 798.8 L704.0 798.0 L704.6 797.2 L705.2 796.3 L705.8 795.5 L706.4 794.7 L707.0 793.8 L707.6 793.0 L708.2 792.2 L708.8 791.3 L709.4 790.5 L710.0 789.7 L710.6 788.8 L711.2 788.0 L711.7 787.2 L712.3 786.3 L712.9 785.5 L713.5 784.7 L714.1 783.8 L714.7 783.0 L715.3 782.2 L715.9 781.4 L716.5 780.6 L717.1 779.7 L717.7 778.9 L718.3 778.1 L718.9 777.3 L719.5 776.5 L720.1 775.7 L720.8 775.0 L721.4 774.2 L722.0 773.4 L722.6 772.6 L723.2 771.9 L723.9 771.1 L724.5 770.4 L725.1 769.7 L725.8 769.0 L726.4 768.2 L727.0 767.5 L727.7 766.9 L728.3 766.2 L729.0 765.5 L729.8 764.7 L730.5 764.0 L731.3 763.2 L732.0 762.5 L732.8 761.7 L733.5 761.0 L734.3 760.3 L735.0 759.5 L735.8 758.8 L736.5 758.1 L737.3 757.4 L738.0 756.7 L738.8 756.0 L739.5 755.3 L740.3 754.6 L741.1 754.0 L741.8 753.3 L742.6 752.6 L743.4 752.0 L744.2 751.4 L744.9 750.7 L745.7 750.1 L746.5 749.5 L747.3 748.9 L748.2 748.3 L749.0 747.7 L749.8 747.2 L750.7 746.6 L751.5 746.0 L752.4 745.5 L753.2 745.0 L754.1 744.5 L755.0 744.0 L755.9 743.5 L756.8 743.0 L757.7 742.5 L758.6 742.1 L759.6 741.6 L760.5 741.2 L761.5 740.8 L762.4 740.5 L763.2 740.1 L764.1 739.8 L765.0 739.5 L765.9 739.2 L766.8 738.9 L767.8 738.6 L768.7 738.3 L769.7 738.0 L770.6 737.7 L771.6 737.5 L772.6 737.2 L773.6 737.0 L774.6 736.8 L775.6 736.5 L776.6 736.3 L777.6 736.1 L778.7 735.9 L779.7 735.7 L780.7 735.5 L781.8 735.4 L782.8 735.2 L783.8 735.0 L784.9 734.9 L785.9 734.7 L787.0 734.6 L788.0 734.5 L789.1 734.3 L790.1 734.2 L791.1 734.1 L792.2 734.0 L793.2 733.9 L794.2 733.8 L795.3 733.7 L796.3 733.6 L797.3 733.5 L798.3 733.4 L799.3 733.4 L800.3 733.3 L801.3 733.3 L802.3 733.2 L803.2 733.1 L804.2 733.1 L805.1 733.1 L806.1 733.0 L807.0 733.0 L808.1 733.0 L809.2 733.0 L810.2 732.9 L811.3 733.0 L812.3 733.0 L813.4 733.0 L814.4 733.0 L815.4 733.1 L816.4 733.1 L817.5 733.2 L818.5 733.3 L819.5 733.3 L820.5 733.4 L821.5 733.5 L822.5 733.6 L823.5 733.8 L824.5 733.9 L825.4 734.0 L826.4 734.1 L827.4 734.3 L828.4 734.4 L829.3 734.6 L830.3 734.8 L831.3 734.9 L832.3 735.1 L833.2 735.3 L834.2 735.5 L835.2 735.7 L836.2 735.9 L837.1 736.1 L838.1 736.3 L839.1 736.5 L840.1 736.8 L841.0 737.0 L842.0 737.2 L843.0 737.5 L844.0 737.7 L845.0 738.0 L846.0 738.2 L847.0 738.4 L847.9 738.7 L848.9 738.9 L849.8 739.2 L850.8 739.5 L851.8 739.7 L852.7 740.0 L853.7 740.3 L854.7 740.6 L855.7 740.9 L856.6 741.2 L857.6 741.5 L858.6 741.8 L859.6 742.1 L860.5 742.4 L861.5 742.8 L862.5 743.1 L863.5 743.4 L864.4 743.8 L865.4 744.1 L866.4 744.5 L867.4 744.8 L868.3 745.2 L869.3 745.6 L870.3 745.9 L871.2 746.3 L872.2 746.7 L873.1 747.1 L874.1 747.5 L875.0 747.9 L875.9 748.3 L876.9 748.7 L877.8 749.1 L878.7 749.5 L879.6 749.9 L880.5 750.3 L881.5 750.8 L882.4 751.2 L883.2 751.6 L884.1 752.1 L885.0 752.5 L885.9 753.0 L886.8 753.5 L887.7 753.9 L888.7 754.4 L889.6 754.9 L890.5 755.5 L891.4 756.0 L892.3 756.5 L893.2 757.0 L894.1 757.6 L895.0 758.1 L895.8 758.7 L896.7 759.2 L897.6 759.8 L898.5 760.3 L899.3 760.9 L900.2 761.5 L901.1 762.1 L901.9 762.6 L902.8 763.2 L903.6 763.8 L904.4 764.4 L905.3 765.0 L906.1 765.6 L906.9 766.2 L907.7 766.8 L908.5 767.4 L909.3 768.0 L910.1 768.6 L910.9 769.2 L911.7 769.8 L912.4 770.4 L913.2 771.0 L913.9 771.6 L914.7 772.2 L915.4 772.8 L916.1 773.4 L916.8 774.0 L917.5 774.6 L918.3 775.3 L919.1 776.1 L919.9 776.8 L920.7 777.5 L921.5 778.3 L922.2 779.0 L922.9 779.7 L923.6 780.5 L924.3 781.2 L925.0 782.0 L925.7 782.7 L926.4 783.5 L927.0 784.2 L927.7 785.0 L928.3 785.8 L928.9 786.5 L929.6 787.3 L930.2 788.0 L930.8 788.8 L931.4 789.6 L932.0 790.3 L932.7 791.1 L933.3 791.9 L933.9 792.6 L934.5 793.4 L935.1 794.2 L935.8 794.9 L936.4 795.7 L937.0 796.4 L937.7 797.2 L938.3 797.9 L939.0 798.7 L939.0 798.7 L938.3 799.4 L937.7 800.2 L937.0 800.9 L936.4 801.7 L935.8 802.4 L935.1 803.2 L934.5 803.9 L933.9 804.6 L933.3 805.4 L932.7 806.1 L932.0 806.8 L931.4 807.6 L930.8 808.3 L930.2 809.0 L929.6 809.8 L928.9 810.5 L928.3 811.2 L927.7 812.0 L927.0 812.7 L926.4 813.5 L925.7 814.2 L925.0 815.0 L924.3 815.7 L923.6 816.5 L922.9 817.2 L922.2 818.0 L921.5 818.8 L920.7 819.5 L919.9 820.3 L919.1 821.1 L918.3 821.9 L917.5 822.7 L916.9 823.3 L916.2 823.9 L915.5 824.6 L914.9 825.2 L914.2 825.8 L913.5 826.5 L912.8 827.1 L912.1 827.8 L911.4 828.5 L910.7 829.1 L909.9 829.8 L909.2 830.5 L908.5 831.2 L907.7 831.8 L907.0 832.5 L906.2 833.2 L905.5 833.9 L904.7 834.6 L903.9 835.3 L903.1 835.9 L902.3 836.6 L901.6 837.3 L900.8 838.0 L900.0 838.7 L899.2 839.3 L898.3 840.0 L897.5 840.7 L896.7 841.4 L895.9 842.0 L895.1 842.7 L894.3 843.3 L893.4 844.0 L892.6 844.6 L891.8 845.2 L890.9 845.9 L890.1 846.5 L889.2 847.1 L888.4 847.7 L887.5 848.3 L886.7 848.9 L885.9 849.4 L885.0 850.0 L884.2 850.5 L883.3 851.1 L882.5 851.6 L881.6 852.2 L880.8 852.7 L879.9 853.2 L879.1 853.8 L878.2 854.3 L877.4 854.8 L876.5 855.3 L875.6 855.8 L874.8 856.4 L873.9 856.9 L873.0 857.4 L872.1 857.9 L871.2 858.4 L870.4 858.9 L869.5 859.3 L868.6 859.8 L867.7 860.3 L866.8 860.8 L865.9 861.2 L864.9 861.7 L864.0 862.2 L863.1 862.6 L862.2 863.0 L861.3 863.5 L860.3 863.9 L859.4 864.3 L858.5 864.8 L857.5 865.2 L856.6 865.6 L855.6 866.0 L854.7 866.4 L853.7 866.7 L852.8 867.1 L851.8 867.5 L850.9 867.8 L849.9 868.2 L848.9 868.5 L848.0 868.9 L847.0 869.2 L846.0 869.5 L845.1 869.8 L844.2 870.1 L843.2 870.4 L842.3 870.6 L841.3 870.9 L840.4 871.2 L839.4 871.4 L838.5 871.7 L837.5 871.9 L836.5 872.2 L835.6 872.4 L834.6 872.7 L833.6 872.9 L832.6 873.1 L831.6 873.4 L830.7 873.6 L829.7 873.8 L828.7 874.0 L827.7 874.2 L826.7 874.4 L825.7 874.6 L824.7 874.8 L823.7 874.9 L822.6 875.1 L821.6 875.3 L820.6 875.4 L819.6 875.6 L818.6 875.7 L817.6 875.8 L816.6 875.9 L815.6 876.1 L814.6 876.2 L813.5 876.3 L812.5 876.3 L811.5 876.4 L810.5 876.5 L809.5 876.6 L808.5 876.6 L807.5 876.7 L806.5 876.7 L805.5 876.7 L804.5 876.7 L803.5 876.7 L802.5 876.7 L801.5 876.7 L800.5 876.7 L799.5 876.7 L798.5 876.6 L797.5 876.6 L796.5 876.5 L795.5 876.5 L794.5 876.4 L793.4 876.3 L792.4 876.3 L791.4 876.2 L790.4 876.1 L789.3 876.0 L788.3 875.9 L787.3 875.7 L786.2 875.6 L785.2 875.5 L784.2 875.3 L783.1 875.2 L782.1 875.0 L781.1 874.9 L780.0 874.7 L779.0 874.5 L778.0 874.3 L776.9 874.1 L775.9 873.9 L774.9 873.7 L773.9 873.5 L772.9 873.2 L771.9 873.0 L770.9 872.7 L769.9 872.5 L768.9 872.2 L767.9 871.9 L766.9 871.6 L765.9 871.3 L765.0 871.0 L764.0 870.7 L763.1 870.4 L762.1 870.0 L761.2 869.7 L760.3 869.3 L759.4 868.9 L758.5 868.5 L757.6 868.1 L756.7 867.7 L755.9 867.3 L755.0 866.9 L754.1 866.4 L753.2 866.0 L752.4 865.5 L751.5 865.0 L750.7 864.4 L749.8 863.9 L749.0 863.3 L748.2 862.8 L747.3 862.2 L746.5 861.6 L745.7 861.0 L744.9 860.3 L744.1 859.7 L743.3 859.0 L742.5 858.4 L741.8 857.7 L741.0 857.0 L740.2 856.4 L739.5 855.7 L738.7 855.0 L738.0 854.2 L737.2 853.5 L736.5 852.8 L735.8 852.1 L735.1 851.3 L734.4 850.6 L733.7 849.8 L733.0 849.1 L732.3 848.3 L731.6 847.6 L730.9 846.8 L730.2 846.1 L729.5 845.3 L728.9 844.5 L728.2 843.8 L727.6 843.0 L726.9 842.3 L726.3 841.5 L725.6 840.7 L725.0 840.0 L724.4 839.2 L723.7 838.5 L723.1 837.7 L722.5 837.0 L721.8 836.2 L721.2 835.4 L720.6 834.6 L720.0 833.8 L719.4 833.0 L718.8 832.1 L718.2 831.3 L717.6 830.5 L717.0 829.7 L716.5 828.8 L715.9 828.0 L715.4 827.1 L714.9 826.3 L714.3 825.4 L713.8 824.6 L713.3 823.7 L712.8 822.9 L712.3 822.0 L711.8 821.1 L711.3 820.3 L710.8 819.4 L710.3 818.5 L709.8 817.6 L709.4 816.8 L708.9 815.9 L708.4 815.0 L707.9 814.1 L707.4 813.3 L707.0 812.4 L706.5 811.5 L706.0 810.7 L705.5 809.8 L705.0 808.9 L704.5 808.0 L704.0 807.2 L703.6 806.3 L703.1 805.4 L702.5 804.6 L702.0 803.7 L701.5 802.9 L701.0 802.0Z"/><path clip-path="url(#cre)" d="M1134.0 801.0 L1134.7 800.3 L1135.5 799.6 L1136.2 798.9 L1136.9 798.1 L1137.6 797.4 L1138.3 796.7 L1139.0 796.0 L1139.7 795.3 L1140.4 794.5 L1141.1 793.8 L1141.8 793.1 L1142.5 792.3 L1143.2 791.6 L1143.9 790.9 L1144.6 790.2 L1145.3 789.4 L1146.0 788.7 L1146.7 788.0 L1147.4 787.2 L1148.1 786.5 L1148.8 785.8 L1149.5 785.1 L1150.2 784.3 L1150.9 783.6 L1151.6 782.9 L1152.4 782.2 L1153.1 781.5 L1153.8 780.8 L1154.6 780.1 L1155.3 779.4 L1156.1 778.7 L1156.8 778.0 L1157.6 777.3 L1158.3 776.6 L1159.1 775.9 L1159.9 775.3 L1160.7 774.6 L1161.5 773.9 L1162.3 773.3 L1163.2 772.6 L1164.0 772.0 L1164.8 771.4 L1165.5 770.8 L1166.3 770.3 L1167.1 769.7 L1167.8 769.1 L1168.6 768.5 L1169.4 767.9 L1170.1 767.4 L1170.9 766.8 L1171.7 766.2 L1172.5 765.7 L1173.2 765.1 L1174.0 764.5 L1174.8 764.0 L1175.6 763.4 L1176.4 762.9 L1177.2 762.3 L1178.0 761.8 L1178.8 761.2 L1179.6 760.7 L1180.5 760.1 L1181.3 759.6 L1182.1 759.1 L1183.0 758.5 L1183.8 758.0 L1184.7 757.5 L1185.6 757.0 L1186.4 756.5 L1187.3 756.0 L1188.2 755.5 L1189.1 755.0 L1190.0 754.5 L1191.0 754.0 L1191.9 753.5 L1192.8 753.0 L1193.8 752.6 L1194.8 752.1 L1195.8 751.6 L1196.8 751.2 L1197.8 750.7 L1198.8 750.3 L1199.8 749.9 L1200.9 749.4 L1201.9 749.0 L1203.0 748.6 L1203.8 748.3 L1204.7 748.0 L1205.5 747.7 L1206.4 747.4 L1207.2 747.0 L1208.1 746.7 L1209.0 746.4 L1209.9 746.1 L1210.8 745.8 L1211.8 745.5 L1212.7 745.2 L1213.7 744.8 L1214.6 744.5 L1215.6 744.2 L1216.6 743.9 L1217.5 743.6 L1218.5 743.3 L1219.5 743.0 L1220.5 742.7 L1221.5 742.4 L1222.6 742.1 L1223.6 741.8 L1224.6 741.5 L1225.6 741.2 L1226.7 740.9 L1227.7 740.6 L1228.7 740.4 L1229.8 740.1 L1230.8 739.8 L1231.8 739.6 L1232.9 739.3 L1233.9 739.1 L1235.0 738.8 L1236.0 738.6 L1237.1 738.3 L1238.1 738.1 L1239.1 737.9 L1240.2 737.7 L1241.2 737.5 L1242.2 737.3 L1243.3 737.1 L1244.3 736.9 L1245.3 736.7 L1246.3 736.5 L1247.3 736.3 L1248.3 736.2 L1249.3 736.0 L1250.3 735.9 L1251.3 735.8 L1252.3 735.7 L1253.2 735.5 L1254.2 735.4 L1255.1 735.3 L1256.1 735.3 L1257.0 735.2 L1257.9 735.1 L1258.8 735.1 L1259.7 735.0 L1260.6 735.0 L1261.5 735.0 L1262.6 735.0 L1263.7 735.0 L1264.8 735.0 L1265.9 735.1 L1267.0 735.2 L1268.0 735.2 L1269.1 735.3 L1270.2 735.5 L1271.2 735.6 L1272.3 735.7 L1273.3 735.9 L1274.4 736.1 L1275.4 736.3 L1276.4 736.5 L1277.4 736.7 L1278.4 736.9 L1279.5 737.1 L1280.5 737.4 L1281.5 737.6 L1282.5 737.9 L1283.4 738.2 L1284.4 738.5 L1285.4 738.8 L1286.4 739.1 L1287.3 739.4 L1288.3 739.7 L1289.2 740.0 L1290.2 740.4 L1291.1 740.7 L1292.0 741.0 L1293.0 741.4 L1293.9 741.8 L1294.8 742.1 L1295.7 742.5 L1296.6 742.8 L1297.5 743.2 L1298.4 743.6 L1299.3 743.9 L1300.2 744.3 L1301.0 744.7 L1301.9 745.1 L1302.8 745.4 L1303.6 745.8 L1304.5 746.2 L1305.3 746.6 L1306.2 746.9 L1307.0 747.3 L1308.0 747.7 L1309.0 748.2 L1309.9 748.7 L1310.9 749.1 L1311.9 749.6 L1312.8 750.1 L1313.7 750.6 L1314.6 751.1 L1315.6 751.6 L1316.5 752.1 L1317.4 752.6 L1318.2 753.2 L1319.1 753.7 L1320.0 754.2 L1320.8 754.8 L1321.7 755.3 L1322.5 755.9 L1323.4 756.5 L1324.2 757.0 L1325.0 757.6 L1325.8 758.2 L1326.6 758.8 L1327.4 759.4 L1328.2 760.0 L1329.0 760.6 L1329.8 761.2 L1330.5 761.8 L1331.3 762.4 L1332.1 763.0 L1332.8 763.7 L1333.6 764.3 L1334.3 764.9 L1335.1 765.5 L1335.8 766.2 L1336.6 766.8 L1337.3 767.5 L1338.0 768.1 L1338.8 768.8 L1339.5 769.4 L1340.3 770.1 L1341.0 770.8 L1341.7 771.5 L1342.5 772.2 L1343.2 772.9 L1343.9 773.7 L1344.6 774.4 L1345.3 775.2 L1345.9 775.9 L1346.6 776.7 L1347.3 777.4 L1347.9 778.2 L1348.6 779.0 L1349.2 779.7 L1349.9 780.5 L1350.5 781.3 L1351.1 782.1 L1351.8 782.9 L1352.4 783.7 L1353.0 784.5 L1353.6 785.3 L1354.2 786.1 L1354.9 786.9 L1355.5 787.7 L1356.1 788.5 L1356.7 789.3 L1357.3 790.1 L1357.9 790.9 L1358.5 791.7 L1359.2 792.5 L1359.8 793.3 L1360.4 794.1 L1361.0 794.9 L1361.7 795.7 L1362.3 796.4 L1363.0 797.2 L1363.6 798.0 L1363.6 798.0 L1363.1 798.9 L1362.6 799.8 L1362.1 800.7 L1361.6 801.5 L1361.1 802.4 L1360.6 803.3 L1360.1 804.2 L1359.6 805.1 L1359.2 806.0 L1358.7 806.9 L1358.2 807.8 L1357.7 808.6 L1357.2 809.5 L1356.8 810.4 L1356.3 811.3 L1355.8 812.2 L1355.3 813.1 L1354.8 814.0 L1354.3 814.9 L1353.8 815.8 L1353.3 816.6 L1352.8 817.5 L1352.3 818.4 L1351.8 819.3 L1351.3 820.2 L1350.7 821.0 L1350.2 821.9 L1349.6 822.8 L1349.0 823.7 L1348.5 824.5 L1347.9 825.4 L1347.3 826.3 L1346.6 827.1 L1346.0 828.0 L1345.4 828.8 L1344.8 829.6 L1344.2 830.3 L1343.6 831.1 L1343.0 831.9 L1342.4 832.7 L1341.8 833.6 L1341.2 834.4 L1340.6 835.2 L1339.9 836.0 L1339.3 836.8 L1338.6 837.6 L1338.0 838.5 L1337.3 839.3 L1336.7 840.1 L1336.0 840.9 L1335.3 841.7 L1334.6 842.5 L1333.9 843.3 L1333.2 844.1 L1332.5 844.9 L1331.8 845.7 L1331.1 846.4 L1330.4 847.2 L1329.7 848.0 L1329.0 848.7 L1328.3 849.4 L1327.5 850.1 L1326.8 850.9 L1326.0 851.5 L1325.3 852.2 L1324.6 852.9 L1323.8 853.5 L1323.1 854.2 L1322.3 854.8 L1321.5 855.4 L1320.8 855.9 L1320.0 856.5 L1319.2 857.1 L1318.3 857.7 L1317.4 858.2 L1316.6 858.7 L1315.7 859.3 L1314.8 859.8 L1313.9 860.3 L1313.0 860.7 L1312.1 861.2 L1311.2 861.7 L1310.3 862.1 L1309.3 862.5 L1308.4 862.9 L1307.5 863.3 L1306.5 863.7 L1305.6 864.1 L1304.6 864.5 L1303.7 864.8 L1302.7 865.2 L1301.8 865.5 L1300.8 865.8 L1299.9 866.2 L1298.9 866.5 L1297.9 866.8 L1297.0 867.0 L1296.0 867.3 L1295.1 867.6 L1294.1 867.9 L1293.2 868.1 L1292.2 868.4 L1291.3 868.6 L1290.3 868.8 L1289.4 869.1 L1288.4 869.3 L1287.5 869.5 L1286.5 869.7 L1285.5 869.9 L1284.5 870.2 L1283.5 870.4 L1282.5 870.5 L1281.5 870.7 L1280.5 870.9 L1279.5 871.0 L1278.5 871.2 L1277.6 871.3 L1276.6 871.5 L1275.6 871.6 L1274.6 871.7 L1273.6 871.8 L1272.6 871.9 L1271.7 871.9 L1270.7 872.0 L1269.7 872.0 L1268.7 872.1 L1267.7 872.1 L1266.7 872.1 L1265.6 872.1 L1264.6 872.1 L1263.6 872.1 L1262.5 872.1 L1261.5 872.0 L1260.4 872.0 L1259.4 871.9 L1258.3 871.8 L1257.2 871.7 L1256.1 871.6 L1255.0 871.5 L1254.1 871.4 L1253.2 871.3 L1252.3 871.2 L1251.4 871.0 L1250.4 870.9 L1249.5 870.7 L1248.6 870.6 L1247.6 870.4 L1246.7 870.3 L1245.7 870.1 L1244.7 869.9 L1243.8 869.7 L1242.8 869.5 L1241.8 869.3 L1240.9 869.1 L1239.9 868.8 L1238.9 868.6 L1237.9 868.4 L1236.9 868.1 L1235.9 867.9 L1234.9 867.6 L1233.9 867.3 L1232.9 867.1 L1231.9 866.8 L1230.9 866.5 L1229.9 866.2 L1228.9 865.9 L1227.9 865.6 L1226.9 865.3 L1225.9 865.0 L1224.9 864.7 L1223.9 864.4 L1222.9 864.1 L1221.9 863.7 L1220.9 863.4 L1219.9 863.1 L1218.9 862.7 L1218.0 862.4 L1217.0 862.0 L1216.0 861.7 L1215.1 861.4 L1214.2 861.0 L1213.2 860.7 L1212.3 860.3 L1211.4 860.0 L1210.4 859.6 L1209.5 859.3 L1208.6 858.9 L1207.6 858.5 L1206.7 858.1 L1205.7 857.7 L1204.8 857.3 L1203.8 856.9 L1202.8 856.5 L1201.9 856.1 L1200.9 855.7 L1200.0 855.3 L1199.0 854.9 L1198.1 854.4 L1197.1 854.0 L1196.2 853.6 L1195.2 853.2 L1194.3 852.7 L1193.3 852.3 L1192.4 851.8 L1191.5 851.4 L1190.6 850.9 L1189.6 850.5 L1188.7 850.0 L1187.8 849.6 L1186.9 849.1 L1186.1 848.6 L1185.2 848.2 L1184.3 847.7 L1183.5 847.2 L1182.6 846.8 L1181.8 846.3 L1180.9 845.8 L1180.1 845.4 L1179.3 844.9 L1178.5 844.4 L1177.8 844.0 L1177.0 843.5 L1176.1 842.9 L1175.1 842.3 L1174.2 841.7 L1173.3 841.1 L1172.4 840.4 L1171.5 839.8 L1170.7 839.2 L1169.8 838.5 L1169.0 837.9 L1168.1 837.2 L1167.3 836.6 L1166.5 835.9 L1165.7 835.3 L1164.9 834.6 L1164.1 833.9 L1163.4 833.3 L1162.6 832.6 L1161.9 831.9 L1161.1 831.2 L1160.4 830.6 L1159.7 829.9 L1159.0 829.2 L1158.3 828.6 L1157.6 827.9 L1156.9 827.2 L1156.2 826.6 L1155.5 825.9 L1154.9 825.2 L1154.2 824.6 L1153.6 823.9 L1152.9 823.3 L1152.3 822.7 L1151.6 822.0 L1151.0 821.4 L1150.2 820.6 L1149.4 819.8 L1148.6 819.0 L1147.9 818.2 L1147.2 817.4 L1146.5 816.6 L1145.8 815.8 L1145.1 815.0 L1144.4 814.2 L1143.8 813.4 L1143.2 812.6 L1142.6 811.9 L1141.9 811.1 L1141.3 810.3 L1140.7 809.5 L1140.1 808.8 L1139.5 808.0 L1138.9 807.2 L1138.3 806.4 L1137.7 805.7 L1137.1 804.9 L1136.5 804.1 L1135.9 803.3 L1135.3 802.6 L1134.6 801.8 L1134.0 801.0Z"/></g><path d="M744.0 1188.2 L743.8 1195.2 L747.0 1197.2 Z M763.0 1195.8 L762.2 1203.3 L766.0 1204.1 Z M783.0 1198.8 L782.0 1206.5 L785.4 1207.5 Z M803.0 1198.9 L801.4 1207.5 L806.2 1208.3 Z M821.0 1197.3 L820.6 1207.0 L823.8 1206.8 Z M838.0 1193.6 L837.4 1203.9 L841.3 1204.0 Z M853.0 1188.1 L853.3 1199.6 L857.2 1198.7 Z M868.0 1180.7 L869.2 1192.7 L872.9 1191.6 Z M883.0 1172.7 L884.9 1185.3 L888.1 1183.5 Z M899.0 1164.0 L900.9 1176.5 L905.5 1174.8 Z M914.0 1155.3 L917.5 1167.8 L919.9 1166.4 Z M930.0 1145.2 L932.7 1158.2 L935.8 1156.3 Z M948.0 1132.9 L950.2 1146.5 L953.0 1145.1 Z M964.0 1121.0 L965.8 1135.5 L968.9 1133.6 Z M981.0 1108.2 L982.5 1123.4 L985.5 1122.3 Z M999.0 1096.5 L999.9 1112.9 L1003.8 1111.9 Z M1020.0 1085.8 L1020.6 1103.4 L1024.2 1101.7 Z M1042.0 1079.4 L1041.8 1096.5 L1044.4 1097.3 Z M1064.0 1076.1 L1062.0 1094.6 L1065.8 1094.2 Z M1088.0 1079.1 L1085.0 1096.5 L1089.4 1096.8 Z M1110.0 1089.0 L1107.0 1104.7 L1110.4 1105.7 Z M1128.0 1101.3 L1124.8 1115.5 L1128.2 1116.7 Z M1144.0 1113.5 L1141.0 1126.5 L1143.6 1127.4 Z M1161.0 1127.0 L1157.2 1138.2 L1160.3 1139.9 Z M1176.0 1138.2 L1172.3 1148.9 L1175.0 1150.8 Z M1192.0 1148.5 L1187.8 1159.0 L1190.6 1160.2 Z M1209.0 1158.5 L1204.2 1168.3 L1207.1 1169.5 Z M1224.0 1165.7 L1219.1 1175.2 L1222.2 1176.6 Z M1238.0 1169.8 L1233.4 1179.9 L1237.3 1180.9 Z M1256.0 1173.9 L1251.7 1184.1 L1254.6 1184.4 Z M1273.0 1177.1 L1268.2 1187.0 L1271.7 1186.5 Z M1288.0 1178.0 L1283.7 1187.2 L1288.0 1185.6 Z M1305.0 1174.8 L1301.6 1183.1 L1305.9 1181.0 Z M1324.0 1166.4 L1321.1 1174.3 L1324.5 1172.0 Z " fill="#050306"/><path d="M718.0 1176.1 L743.0 1215.0 L744.0 1190.2 M744.0 1190.2 L759.0 1225.0 L763.0 1197.8 M763.0 1197.8 L778.0 1229.0 L783.0 1200.8 M783.0 1200.8 L795.0 1234.0 L803.0 1200.9 M803.0 1200.9 L819.0 1238.0 L821.0 1199.3 M821.0 1199.3 L835.0 1237.0 L838.0 1195.6 M838.0 1195.6 L854.5 1237.5 L853.0 1190.1 M853.0 1190.1 L874.0 1233.0 L868.0 1182.7 M868.0 1182.7 L892.5 1227.5 L883.0 1174.7 M883.0 1174.7 L908.4 1218.4 L899.0 1166.0 M899.0 1166.0 L931.6 1209.6 L914.0 1157.3 M914.0 1157.3 L943.6 1202.4 L930.0 1147.2 M930.0 1147.2 L958.8 1192.8 L948.0 1134.9 M948.0 1134.9 L973.2 1185.6 L964.0 1123.0 M964.0 1123.0 L988.4 1176.0 L981.0 1110.2 M981.0 1110.2 L1003.6 1170.4 L999.0 1098.5 M999.0 1098.5 L1022.8 1165.6 L1020.0 1087.8 M1020.0 1087.8 L1040.8 1157.2 L1042.0 1081.4 M1042.0 1081.4 L1054.0 1160.8 L1064.0 1078.1 M1064.0 1078.1 L1073.2 1158.4 L1088.0 1081.1 M1088.0 1081.1 L1095.2 1159.6 L1110.0 1091.0 M1110.0 1091.0 L1112.0 1164.4 L1128.0 1103.3 M1128.0 1103.3 L1128.8 1170.4 L1144.0 1115.5 M1144.0 1115.5 L1142.0 1175.2 L1161.0 1129.0 M1161.0 1129.0 L1157.6 1183.6 L1176.0 1140.2 M1176.0 1140.2 L1170.8 1193.2 L1192.0 1150.5 M1192.0 1150.5 L1185.2 1199.2 L1209.0 1160.5 M1209.0 1160.5 L1199.6 1205.2 L1224.0 1167.7 M1224.0 1167.7 L1215.2 1212.4 L1238.0 1171.8 M1238.0 1171.8 L1234.4 1217.2 L1256.0 1175.9 M1256.0 1175.9 L1248.8 1218.4 L1273.0 1179.1 M1273.0 1179.1 L1266.3 1216.0 L1288.0 1180.0 M1288.0 1180.0 L1287.8 1208.0 L1305.0 1176.8 M1305.0 1176.8 L1309.3 1197.8 L1324.0 1168.4 M1324.0 1168.4 L1326.3 1186.5 L1342.0 1156.0 " fill="none" stroke="#050306" stroke-width="2.9" stroke-linejoin="miter" stroke-miterlimit="6"/><g fill="none" stroke="#050306" stroke-width="5"><ellipse cx="916.6" cy="655.4" rx="27" ry="23" transform="rotate(15 916.6 655.4)"/><ellipse cx="1153.8" cy="652.9" rx="21.5" ry="27" transform="rotate(45 1153.8 652.9)"/></g><g stroke="#4a3a4e" stroke-width="1.6" stroke-linecap="round" opacity="0.6"><path d="M1761 841 L1773 847"/><path d="M1421 660 L1425 664"/></g></svg>
<div id="top">
  <div id="gal">Gallery</div>
  <svg width="2000" height="81" viewBox="0 0 2000 81">
    <g fill="#171717">
      <circle cx="207.8" cy="40.2" r="29"/>
      <circle cx="314.8" cy="40.2" r="29"/>
      <circle cx="422.2" cy="40.2" r="29"/>
      <circle cx="529" cy="40.2" r="29"/>
    </g>
    <!-- wrench -->
    <defs>
      <mask id="wm"><rect x="150" y="0" width="120" height="81" fill="#fff"/>
        <path d="M213.2 35.8 L230 19 M213.2 35.8" stroke="#000" stroke-width="8.2" stroke-linecap="round"/>
        <path d="M213.2 35.8 L240 9" stroke="#000" stroke-width="8.2"/>
      </mask>
    </defs>
    <g fill="#9b9b9b" mask="url(#wm)">
      <circle cx="213" cy="35.5" r="10"/>
      <path d="M193.2 54.2 L208.5 39" stroke="#9b9b9b" stroke-width="6.2" stroke-linecap="round"/>
    </g>
    <!-- magic wand -->
    <g transform="translate(285 11)" fill="#9b9b9b">
      <path d="M21.8 43.4 L41.8 23.4" stroke="#9b9b9b" stroke-width="6.4" stroke-linecap="round"/>
      <path d="M32.2 28.2 L37.2 33.2" stroke="#171717" stroke-width="1.3"/>
      <path d="M23.6 14.8 Q24.6 21.4 31.2 22.4 Q24.6 23.4 23.6 30 Q22.6 23.4 16 22.4 Q22.6 21.4 23.6 14.8Z"/>
      <path d="M34 14 Q34.5 17.1 37.6 17.6 Q34.5 18.1 34 21.2 Q33.5 18.1 30.4 17.6 Q33.5 17.1 34 14Z"/>
    </g>
    <!-- selection S -->
    <g transform="translate(392 11)" fill="#9b9b9b">
      <path d="M26 20.8 Q28.5 15.2 36 15.2 L42 15.2 A2.8 2.8 0 0 1 42 20.8 Z"/>
      <path d="M24.8 23.2 L30.8 23.2 L34.8 30.5 Q35.5 33 35.2 36 L29 36 Q29.3 32.5 27.5 29.5 Q24.5 26 24.8 23.2Z"/>
      <path d="M34.8 38.8 Q32.5 44.4 25 44.4 L18.4 44.4 A2.8 2.8 0 0 1 18.4 38.8 Z"/>
    </g>
    <!-- arrow -->
    <g transform="translate(499 11)" fill="#9b9b9b">
      <path d="M18 42.4 L29.4 31" stroke="#9b9b9b" stroke-width="5" stroke-linecap="round"/>
      <path d="M45 15.6 L18.8 27.6 L28.6 29.6 L32.4 41.6 Z" stroke="#9b9b9b" stroke-width="1" stroke-linejoin="round"/>
    </g>
    <!-- brush -->
    <g transform="translate(1405 11)" fill="#0a7aff">
      <path d="M25.2 35.8 C33 27.6 42 19 50 12.6 C53.5 9.8 56 7.8 57.8 6.8 C57.2 8.6 55.6 11.6 53 15.2 C47 23 38 30.6 27.2 37.8 Q25.6 38 25.2 35.8Z"/>
      <path d="M6 51.6 C9.5 50 12 47 13.4 43.4 C15 40 18.5 38.2 22 38.2 C24.5 38.2 25.6 39.6 25.2 42 C24.6 45.6 22 49 18.5 51 C14.5 53 9.5 53.4 6 52.2Z"/>
    </g>
    <!-- smudge -->
    <g transform="translate(1535 11)" fill="#c8c8c8" stroke="#c8c8c8" stroke-width="1.2" stroke-linejoin="round">
      <path d="M22.8 12.8 L37.6 11.2 L43.2 6 L53.6 16.4 L49.2 21.6 L48.8 30.4 L46.8 36.8 L38 44.8 Q35.5 46.2 33 45.8 L31.2 45.2 L18.4 52.8 L11.6 53.2 Q9.4 51 9.6 48 L18 35.2 L15.6 26 Q15.8 23 16.8 21.2 Z"/>
    </g>
    <path d="M1566.6 56 L1576.4 44.2" stroke="#262128" stroke-width="1.9" stroke-linecap="round"/>
    <!-- eraser -->
    <g transform="translate(1696 40.5) rotate(-43)">
      <path d="M-22 -11 L15 -11 Q23 -11 23 -3 L23 10 Q23 11 22 11 L-15 11 Q-23 11 -23 3 L-23 -10 Q-23 -11 -22 -11Z" fill="#c8c8c8"/>
      <line x1="-13" y1="-12" x2="-13" y2="12" stroke="#262128" stroke-width="1.9"/>
    </g>
    <!-- layers -->
    <rect x="1815.2" y="18.6" width="32.8" height="33.2" rx="5.5" fill="#c8c8c8"/>
    <rect x="1803.8" y="29.6" width="33.2" height="33.4" rx="5.5" fill="#c8c8c8" stroke="#1c191d" stroke-width="1.8"/>
    <circle cx="1955.5" cy="40.75" r="25.75" fill="#6e5772"/>
  </svg>
</div>
<div id="side">
  <div class="trk" style="top:7px;height:316px"></div>
  <div class="thm" style="top:176px"></div>
  <div class="trk" style="top:490px;height:299px"></div>
  <div class="thm" style="top:475px"></div>
  <svg width="78" height="960" viewBox="0 163 78 960">
    <rect x="23.2" y="544" width="31.6" height="31.8" rx="6.5" fill="none" stroke="#9b9b9b" stroke-width="4"/>
    <g fill="none" stroke="#9b9b9b" stroke-width="3.6" stroke-linecap="round">
      <path d="M33 991.7 L46.4 991.7 A8.65 8.65 0 0 1 46.4 1009 L26.5 1009"/>
      <path d="M45 1069.3 L32.1 1069.3 A8.9 8.9 0 0 0 32.1 1087.1 L51.6 1087.1"/>
    </g>
    <g fill="#9b9b9b" stroke="#9b9b9b" stroke-width="1.5" stroke-linejoin="round">
      <path d="M23.4 991.7 L34.3 985.2 L34.3 998.2Z"/>
      <path d="M54.7 1069.3 L43.8 1063.3 L43.8 1076.2Z"/>
    </g>
  </svg>
</div>
</body></html>
